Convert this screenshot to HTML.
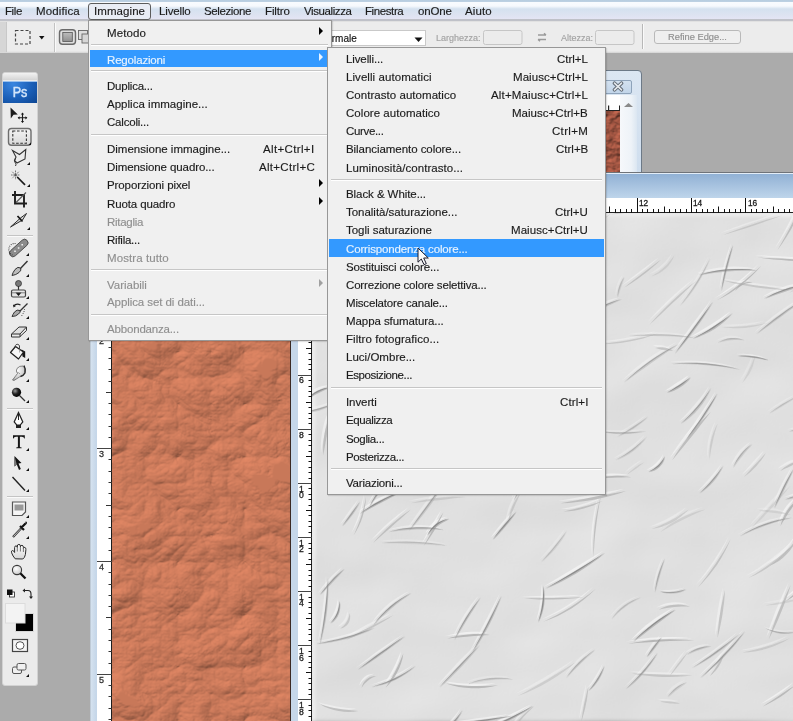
<!DOCTYPE html><html><head><meta charset="utf-8"><style>
*{margin:0;padding:0;box-sizing:border-box}
html,body{width:793px;height:721px;overflow:hidden}
body{position:relative;background:#ababab;font-family:"Liberation Sans",sans-serif;color:#1b1b1b}
.a{position:absolute}
.t{position:absolute;white-space:nowrap;-webkit-text-stroke:0.15px currentColor;will-change:transform}
</style></head><body><div class="a" style="left:0;top:0;width:793px;height:22px;background:linear-gradient(#b7cde0 0px,#bcd0e2 1.5px,#f8fbfe 2.5px,#f6f9fd 6px,#d4e1ef 9px,#dde3f1 15px,#e4e5f4 19px,#bfc1c8 19.5px,#bfc1c8 20.5px,#dcdcdc 21px,#e6e6e6 22px)"></div>
<div class="a" style="left:88px;top:3px;width:63px;height:16.5px;border:1px solid #5c5c5c;border-radius:3px;background:#e9edf5"></div>
<div class="t" style="top:2.20px;font-size:11.5px;line-height:18px;height:18px;left:5.00px;letter-spacing:-0.400px;">File</div>
<div class="t" style="top:2.20px;font-size:11.5px;line-height:18px;height:18px;left:36.00px;letter-spacing:0.121px;">Modifica</div>
<div class="t" style="top:2.20px;font-size:11.5px;line-height:18px;height:18px;left:93.80px;letter-spacing:0.075px;">Immagine</div>
<div class="t" style="top:2.20px;font-size:11.5px;line-height:18px;height:18px;left:158.80px;letter-spacing:-0.144px;">Livello</div>
<div class="t" style="top:2.20px;font-size:11.5px;line-height:18px;height:18px;left:204.00px;letter-spacing:-0.391px;">Selezione</div>
<div class="t" style="top:2.20px;font-size:11.5px;line-height:18px;height:18px;left:264.80px;letter-spacing:-0.144px;">Filtro</div>
<div class="t" style="top:2.20px;font-size:11.5px;line-height:18px;height:18px;left:303.90px;letter-spacing:-0.400px;">Visualizza</div>
<div class="t" style="top:2.20px;font-size:11.5px;line-height:18px;height:18px;left:364.90px;letter-spacing:-0.400px;">Finestra</div>
<div class="t" style="top:2.20px;font-size:11.5px;line-height:18px;height:18px;left:417.60px;letter-spacing:-0.146px;">onOne</div>
<div class="t" style="top:2.20px;font-size:11.5px;line-height:18px;height:18px;left:465.30px;letter-spacing:0.096px;">Aiuto</div>
<div class="a" style="left:0;top:22px;width:793px;height:31.3px;background:linear-gradient(#ececec,#ececec 29px,#dcdcdc 30.3px,#c9c9c9 31.3px)"></div>
<div class="a" style="left:0;top:22px;width:6.5px;height:30px;background:#d6d6d6;border-right:1px solid #c8c8c8"></div>
<svg class="a" style="left:0;top:0" width="793" height="60"><rect x="15.5" y="30.5" width="14.5" height="13.5" fill="none" stroke="#444" stroke-width="1.2" stroke-dasharray="3 2"/><path d="M39,36 H44.5 L41.75,39.5 Z" fill="#111"/><path d="M54.5,23 V52" stroke="#c2c2c2"/><path d="M55.5,23 V52" stroke="#fafafa"/><rect x="59.5" y="29.8" width="16" height="14.5" rx="3" fill="#dedede" stroke="#6a6a6a" stroke-width="1.4"/><rect x="62.8" y="32.5" width="9.5" height="9" fill="url(#sqg)" stroke="#555" stroke-width="0.8"/><rect x="78.5" y="30.5" width="9" height="9" fill="#ddd" stroke="#666" stroke-width="0.9"/><rect x="82" y="34" width="8" height="9" fill="#d6d6d6" stroke="#666" stroke-width="0.9"/><rect x="300.5" y="30.5" width="125" height="15" fill="#fff" stroke="#c9c9c9" stroke-width="1"/><path d="M414.5,37.5 H422.5 L418.5,42 Z" fill="#111"/><rect x="483.5" y="30.5" width="38.5" height="14" rx="2" fill="#ececec" stroke="#c6c6c6" stroke-width="1"/><rect x="595.5" y="30.5" width="38.5" height="14" rx="2" fill="#ececec" stroke="#c6c6c6" stroke-width="1"/><path d="M538,35 H546 M546,35 l-2,-1.8 M538,39.5 H546 M538,39.5 l2,1.8" stroke="#9a9a9a" stroke-width="1.3" fill="none"/><path d="M642.5,24 V49" stroke="#b8b8b8"/><path d="M643.5,24 V49" stroke="#fafafa"/><rect x="654.5" y="30.5" width="86" height="13" rx="2.5" fill="#efefef" stroke="#b9b9b9" stroke-width="1"/><defs><linearGradient id="sqg" x1="0" y1="0" x2="0" y2="1"><stop offset="0" stop-color="#bdbdbd"/><stop offset="1" stop-color="#8f8f8f"/></linearGradient></defs></svg>
<div class="t" style="top:29.70px;font-size:10px;line-height:18px;height:18px;left:318.50px;color:#111;">Normale</div>
<div class="t" style="top:28.63px;font-size:9px;line-height:18px;height:18px;left:436.00px;color:#a3a3a3;">Larghezza:</div>
<div class="t" style="top:28.63px;font-size:9px;line-height:18px;height:18px;left:560.50px;color:#a3a3a3;">Altezza:</div>
<div class="t" style="top:28.43px;font-size:9.3px;line-height:18px;height:18px;left:667.80px;color:#8e8e8e;">Refine Edge...</div>
<div class="a" style="left:2px;top:71.5px;width:36px;height:614.5px;background:#ebebeb;border:1px solid #d2d2d2;border-radius:3px"></div>
<div class="a" style="left:3px;top:72.5px;width:34px;height:7.5px;background:linear-gradient(#f2f2f2,#d4d4d4);border-radius:2px 2px 0 0"></div>
<div class="a" style="left:3px;top:80.5px;width:34px;height:22.5px;background:radial-gradient(ellipse at 30% 10%,#3a86e0 0%,#1a5fb8 55%,#0d4591 100%);border-top:1px solid #9cc2ee"></div>
<div class="a" style="left:3px;top:80.5px;width:34px;height:22.5px;text-align:center;color:#d4e6fa;font-size:14px;line-height:23px;-webkit-text-stroke:0.45px #d4e6fa;transform:scaleX(0.9);letter-spacing:0px">Ps</div>
<svg class="a" style="left:0;top:0" width="40" height="721"><defs><linearGradient id="btng" x1="0" y1="0" x2="0" y2="1"><stop offset="0" stop-color="#f4f4f4"/><stop offset="1" stop-color="#d9d9d9"/></linearGradient><linearGradient id="handg" x1="0" y1="0" x2="0" y2="1"><stop offset="0" stop-color="#ffffff"/><stop offset="1" stop-color="#d6d6d6"/></linearGradient><radialGradient id="lensg" cx="0.4" cy="0.35" r="0.7"><stop offset="0" stop-color="#ffffff"/><stop offset="1" stop-color="#c8c8c8"/></radialGradient><radialGradient id="fing" cx="0.4" cy="0.3" r="0.8"><stop offset="0" stop-color="#ffffff"/><stop offset="0.6" stop-color="#d0d0d0"/><stop offset="1" stop-color="#9a9a9a"/></radialGradient><radialGradient id="ballg" cx="0.35" cy="0.35" r="0.7"><stop offset="0" stop-color="#999"/><stop offset="0.5" stop-color="#222"/><stop offset="1" stop-color="#000"/></radialGradient></defs><path d="M10.5,107.5 L17.8,114.5 L13.5,114.8 L10.8,118.5 Z" fill="#1a1a1a"/><path d="M22.5,113.2 V122.3 M18.3,117.8 H26.7" stroke="#1a1a1a" stroke-width="1.1"/><path d="M22.5,112.5 l-1.6,2 h3.2z M22.5,123 l-1.6,-2 h3.2z M17.6,117.8 l2,-1.6 v3.2z M27.4,117.8 l-2,-1.6 v3.2z" fill="#1a1a1a"/><rect x="8.5" y="128.5" width="22.5" height="16.8" rx="3" fill="url(#btng)" stroke="#6e6e6e" stroke-width="1.4"/><rect x="12.8" y="131" width="13.6" height="12.3" fill="none" stroke="#333" stroke-width="1.1" stroke-dasharray="2.6 1.6"/><path d="M28.5,145 L31,142.5 L31,145 Z" fill="#111"/><path d="M12.5,150.5 L19.5,154.5 L25.8,149.5 L25,159 L17,163 L14.5,160.5 L16,157 Z" fill="none" stroke="#333" stroke-width="1.1"/><path d="M15.5,158 q-2,3 0,5.5 q1,1 0,2.5" fill="none" stroke="#333" stroke-width="1"/><path d="M30,162 L30,165 L27,165 Z" fill="#111"/><path d="M15.5,170.5 V179.5 M11,175 H20 M12.3,171.8 L18.7,178.2 M18.7,171.8 L12.3,178.2" stroke="#6a6a6a" stroke-width="0.9" stroke-dasharray="1.6 0.6"/><circle cx="15.5" cy="175" r="1.1" fill="#555"/><path d="M17.2,177 L25,184.8" stroke="#1a1a1a" stroke-width="1.7"/><path d="M30,184 L30,187 L27,187 Z" fill="#111"/><path d="M15,191 V203.5 H27 M12,195 H24 V207.5" fill="none" stroke="#1e1e1e" stroke-width="1.9"/><path d="M16,202.5 L26,192.5" stroke="#555" stroke-width="1.1"/><path d="M10.5,227 L20.5,218 L26.5,213.5 L22.5,220 Z" fill="#d8d8d8" stroke="#2a2a2a" stroke-width="1"/><path d="M17.5,216 L22.5,221.5" stroke="#111" stroke-width="1.7"/><path d="M30,227 L30,230 L27,230 Z" fill="#111"/><path d="M7,235.5 H33" stroke="#c4c4c4" stroke-width="1"/><path d="M7,236.5 H33" stroke="#fafafa" stroke-width="1"/><rect x="7.5" y="244.5" width="22.5" height="7" rx="3.5" transform="rotate(-42 18.75 248)" fill="#8c8c8c" stroke="#4a4a4a" stroke-width="0.9"/><path d="M15.5,243.5 A6,6 0 0 0 12.5,255" fill="none" stroke="#333" stroke-width="1.1" stroke-dasharray="0.9 1.1"/><path d="M14.2,251.2 h1.6 M17.8,248 h1.6 M21.4,244.8 h1.6" stroke="#f0f0f0" stroke-width="1.6"/><path d="M29,253 L29,256 L26,256 Z" fill="#111"/><path d="M27.5,261 L19.5,269.5" stroke="#333" stroke-width="1.4"/><path d="M20.5,268 Q18,266 15,269.5 Q12.5,273 12,275.5 Q16,275 19,272.5 Q22,270 20.5,268 Z" fill="#bbb" stroke="#333" stroke-width="1"/><path d="M29,274 L29,277 L26,277 Z" fill="#111"/><circle cx="18.5" cy="283.5" r="3" fill="#777" stroke="#333" stroke-width="0.8"/><path d="M18.5,286 V290" stroke="#333" stroke-width="1.2"/><rect x="11.5" y="290" width="14" height="7" rx="1.5" fill="#e6e6e6" stroke="#444" stroke-width="1.2"/><path d="M15.5,292.5 H21.5 L18.5,296 Z" fill="#111"/><path d="M11.8,292.8 H25.2" stroke="#666" stroke-width="0.8"/><path d="M29,296 L29,299 L26,299 Z" fill="#111"/><path d="M27.5,303.5 L19.5,311.5" stroke="#333" stroke-width="1.3"/><path d="M20,310.5 Q17,309 14.5,312 Q12.5,315 12,316.5 Q16,316.5 18.5,314 Q21,312 20,310.5 Z" fill="#aaa" stroke="#333" stroke-width="1"/><path d="M20.5,305 q-4,-2 -7,1" fill="none" stroke="#222" stroke-width="1.2"/><path d="M13,304.5 l0.5,3 l2.5,-1.5z" fill="#222"/><path d="M24.5,309 q0,3 -3,7" fill="none" stroke="#333" stroke-width="1" stroke-dasharray="1 1.2"/><path d="M29,316 L29,319 L26,319 Z" fill="#111"/><path d="M11.5,334 L19,327 H26.5 L20,334 Z" fill="#e0e0e0" stroke="#333" stroke-width="1"/><path d="M11.5,334 V337 H19.5 L26.5,330.5 V327 M20,334 V337" fill="none" stroke="#333" stroke-width="1"/><path d="M29,337 L29,340 L26,340 Z" fill="#111"/><path d="M21.5,349.5 L25.2,351.5 L25.2,358 L22.5,356.5 Z" fill="#151515"/><path d="M10.5,352.5 L15.5,346.5 L23.5,352 L18.5,359 Z" fill="#f6f6f6" stroke="#1e1e1e" stroke-width="1.2" stroke-linejoin="round"/><path d="M15,347 q0.5,-3.5 3.5,-2.5 q1.5,0.8 1,4.5" fill="none" stroke="#444" stroke-width="1"/><path d="M19.5,349.5 v3" stroke="#aaa" stroke-width="1"/><path d="M29,358 L29,361 L26,361 Z" fill="#111"/><path d="M12.5,380 L17.5,373.5 Q15.5,371 17,368.5 Q19.5,365.5 23,366 Q25.5,367.5 25,372 Q24,375 21,376 L14,380.5 Z" fill="url(#fing)" stroke="#6a6a6a" stroke-width="0.8"/><path d="M24,365.5 Q26,369 25,373 Q23.5,376 20.5,376.5" fill="none" stroke="#222" stroke-width="1.3"/><path d="M17,373 Q19,372 20,374" fill="none" stroke="#888" stroke-width="0.8"/><path d="M29,379 L29,382 L26,382 Z" fill="#111"/><circle cx="16.5" cy="392.3" r="4.6" fill="url(#ballg)"/><path d="M19.5,395.5 L25,401" stroke="#333" stroke-width="1.2"/><path d="M29,400 L29,403 L26,403 Z" fill="#111"/><path d="M7,408.5 H33" stroke="#c4c4c4" stroke-width="1"/><path d="M7,409.5 H33" stroke="#fafafa" stroke-width="1"/><path d="M18.5,412.5 L22.8,422 L20.3,425 H16.7 L14.2,422 Z" fill="#fff" stroke="#222" stroke-width="1.2"/><path d="M18.5,414 V420" stroke="#222" stroke-width="1"/><rect x="16" y="425" width="5" height="3" fill="#222"/><path d="M29,427 L29,430 L26,430 Z" fill="#111"/><path d="M13,435.3 H24.8 V438.6 H24.3 Q24,436.7 21.8,436.7 H19.9 V446.8 Q19.9,447.5 21.6,447.6 V448.2 H16.2 V447.6 Q17.9,447.5 17.9,446.8 V436.7 H16 Q13.8,436.7 13.5,438.6 H13 Z" fill="#151515"/><path d="M29,448 L29,451 L26,451 Z" fill="#111"/><path d="M14.5,456 L21.5,463 L18.5,463.5 L20.8,469 L19,470 L16.8,464.5 L14.5,466.5 Z" fill="#111"/><path d="M14.5,456 L14.5,466.5 L16.8,464.5 Z" fill="#777"/><path d="M29,468 L29,471 L26,471 Z" fill="#111"/><path d="M12.5,477 L25,490.5" stroke="#222" stroke-width="1.4"/><path d="M29,489 L29,492 L26,492 Z" fill="#111"/><path d="M7,496.5 H33" stroke="#c4c4c4" stroke-width="1"/><path d="M7,497.5 H33" stroke="#fafafa" stroke-width="1"/><path d="M12.5,502 H25.5 V512 L22,515.5 H12.5 Z" fill="#f6f6f6" stroke="#555" stroke-width="1.2"/><rect x="14.5" y="504.5" width="9" height="6" fill="#999"/><path d="M29,515 L29,518 L26,518 Z" fill="#111"/><path d="M13,537 L21,528.5" stroke="#333" stroke-width="2.2"/><path d="M13.5,536.5 L20.5,529" stroke="#ddd" stroke-width="0.8"/><path d="M20,526 L24,530 M21.5,527.5 L25,524 Q26.5,522.5 25.5,522.5" stroke="#111" stroke-width="2.2"/><path d="M29,536 L29,539 L26,539 Z" fill="#111"/><path d="M15.2,558.8 Q12.8,556.2 11.6,552.8 Q11,550.6 12.5,550.5 Q13.8,550.5 14.6,552.5 V547.6 Q14.6,545.9 16,545.9 Q17.3,545.9 17.3,547.4 V546.1 Q17.4,544.4 18.9,544.4 Q20.4,544.4 20.4,546.1 V546.8 Q20.6,545.2 22,545.3 Q23.4,545.5 23.4,547.3 V548.4 Q23.7,547.2 24.9,547.4 Q26.1,547.8 25.9,549.6 L25.4,554.5 Q24.8,557.8 22.8,559 Z" fill="url(#handg)" stroke="#2a2a2a" stroke-width="1"/><path d="M17.3,547.4 V551.5 M20.4,546.8 V551.5 M23.4,548.4 V552" stroke="#555" stroke-width="0.8"/><circle cx="17" cy="570" r="4.6" fill="url(#lensg)" stroke="#3a3a3a" stroke-width="1.1"/><path d="M20.3,573.3 L25.5,578.5" stroke="#111" stroke-width="2.3"/><rect x="9.5" y="592" width="5" height="5" fill="#fff" stroke="#222" stroke-width="0.8"/><rect x="7" y="589.5" width="5.5" height="5.5" fill="#111"/><path d="M24,590.5 L28,590.5 Q31,590.5 31,594 L31,597.5" fill="none" stroke="#222" stroke-width="1.1"/><path d="M22.5,590.5 l2.5,-2 v4z M31,599 l-2,-2.5 h4z" fill="#222"/><rect x="15.5" y="613.5" width="18" height="18" fill="#000" stroke="#d8d8d8" stroke-width="1"/><rect x="5.5" y="603.5" width="19.5" height="19.5" fill="#f3f3f3" stroke="#dcdcdc" stroke-width="1"/><rect x="12.5" y="639.5" width="15" height="12" fill="#f4f4f4" stroke="#444" stroke-width="1.2"/><ellipse cx="20" cy="645.5" rx="4" ry="3.8" fill="#fff" stroke="#555" stroke-width="1"/><rect x="12.5" y="667" width="9" height="6.5" rx="1.5" fill="#f0f0f0" stroke="#555" stroke-width="1"/><rect x="17" y="663.5" width="9" height="6.5" rx="1.5" fill="#f0f0f0" stroke="#555" stroke-width="1"/><path d="M29,674 L29,677 L26,677 Z" fill="#111"/></svg>
<svg width="0" height="0" style="position:absolute"><defs>
<filter id="fg" x="0" y="0" width="100%" height="100%" color-interpolation-filters="sRGB">
<feTurbulence type="fractalNoise" baseFrequency="0.009 0.014" numOctaves="2" seed="21" result="n"/>
<feColorMatrix in="n" type="matrix" values="0 0 0 0 0  0 0 0 0 0  0 0 0 0 0  1 0 0 0 0" result="r"/>
<feGaussianBlur in="r" stdDeviation="2" result="rb"/>
<feDiffuseLighting in="rb" surfaceScale="1.8" diffuseConstant="1" lighting-color="#f7f7f7"><feDistantLight azimuth="225" elevation="65"/></feDiffuseLighting>
</filter>
<filter id="fr" x="0" y="0" width="100%" height="100%" color-interpolation-filters="sRGB">
<feTurbulence type="turbulence" baseFrequency="0.015 0.019" numOctaves="5" seed="12" result="n"/>
<feColorMatrix in="n" type="matrix" values="0 0 0 0 0  0 0 0 0 0  0 0 0 0 0  1.5 0 0 0 0" result="r"/>
<feGaussianBlur in="r" stdDeviation="0.4" result="rb"/>
<feDiffuseLighting in="rb" surfaceScale="2.1" diffuseConstant="1.03" lighting-color="#dc8462"><feDistantLight azimuth="235" elevation="62"/></feDiffuseLighting>
</filter>
<filter id="fr2" x="0" y="0" width="100%" height="100%" color-interpolation-filters="sRGB">
<feTurbulence type="fractalNoise" baseFrequency="0.07 0.09" numOctaves="4" seed="3" result="n"/>
<feColorMatrix in="n" type="matrix" values="0 0 0 0 0  0 0 0 0 0  0 0 0 0 0  1.5 0 0 0 -0.2" result="r"/>
<feDiffuseLighting in="r" surfaceScale="2" diffuseConstant="1.0" lighting-color="#c86a52"><feDistantLight azimuth="235" elevation="55"/></feDiffuseLighting>
</filter>
</defs></svg>
<div class="a" style="left:540px;top:69.5px;width:102px;height:103px;background:linear-gradient(#dbe6f2,#cfdeee);border:1px solid #6c7987;border-radius:0 4px 0 0"></div>
<div class="a" style="left:560px;top:79.5px;width:72px;height:14px;background:linear-gradient(#d3e1ef,#c2d5e9);border:1px solid #8ea3ba;border-radius:2px"></div>
<svg class="a" style="left:611px;top:81px" width="14" height="11"><path d="M3.5,2.2 L10.5,8.8 M10.5,2.2 L3.5,8.8" stroke="#5a636d" stroke-width="3.6" stroke-linecap="round"/><path d="M3.5,2.2 L10.5,8.8 M10.5,2.2 L3.5,8.8" stroke="#e4e8ec" stroke-width="1.7" stroke-linecap="round"/></svg>
<div class="a" style="left:540px;top:95px;width:80px;height:15.5px;background:#fff;border-bottom:1px solid #222"></div>
<svg class="a" style="left:540px;top:95px" width="80" height="16"><path d="M68.6,10.5 V15 M79.6,10.5 V15" stroke="#222" stroke-width="1.2"/></svg>
<svg class="a" style="left:540px;top:110.5px" width="80" height="62"><rect width="80" height="62" filter="url(#fr2)"/></svg>
<div class="a" style="left:620px;top:95px;width:17px;height:77px;background:linear-gradient(90deg,#f6f8fb,#eef3f8 65%,#dbe6f1)"></div>
<svg class="a" style="left:620px;top:100px" width="17" height="10"><path d="M4,7 L8.5,3 L13,7 Z" fill="#8a8a8a"/></svg>
<div class="a" style="left:285px;top:171.5px;width:520px;height:1.5px;background:#6f7378"></div>
<div class="a" style="left:285px;top:173px;width:520px;height:25px;background:linear-gradient(#e3edf7 0px,#e3edf7 1px,#92b2d5 1.5px,#bdd4ea 24.5px)"></div>
<div class="a" style="left:285px;top:198px;width:520px;height:15px;background:#fff;border-bottom:1px solid #222"></div>
<svg class="a" style="left:311.5px;top:213px" width="490" height="510"><defs><filter id="cb"><feGaussianBlur stdDeviation="0.75"/></filter><filter id="cb2"><feGaussianBlur stdDeviation="0.5"/></filter></defs><rect width="490" height="510" filter="url(#fg)"/><g filter="url(#cb)"><path d="M103.7,35.3 L105.5,33.3 L107.2,31.2 L108.8,29.1 L110.4,26.9 L111.9,24.8 L113.4,22.5 L114.8,20.2 L116.1,17.9 L116.1,17.9 L114.0,19.5 L112.0,21.4 L110.1,23.4 L108.5,25.6 L107.0,27.8 L105.7,30.2 L104.6,32.7 L103.7,35.3Z" fill="#f6f6f6" fill-opacity="0.71"/><path d="M96.2,273.8 L97.9,271.2 L99.4,268.7 L101.1,266.3 L102.7,264.0 L104.4,261.7 L106.2,259.4 L108.1,257.1 L110.1,254.8 L110.1,254.8 L107.4,256.3 L104.9,258.1 L102.7,260.2 L100.8,262.6 L99.2,265.1 L97.8,267.8 L96.8,270.7 L96.2,273.8Z" fill="#f6f6f6" fill-opacity="0.71"/><path d="M402.8,85.0 L409.1,81.7 L415.2,78.1 L421.0,74.2 L426.7,70.0 L432.1,65.5 L437.3,60.8 L442.3,55.7 L447.0,50.4 L447.0,50.4 L441.8,55.2 L436.5,59.9 L431.2,64.4 L425.8,68.8 L420.2,73.0 L414.5,77.1 L408.7,81.1 L402.8,85.0Z" fill="#f6f6f6" fill-opacity="0.69"/><path d="M334.6,256.9 L337.6,256.2 L340.5,255.1 L343.0,253.6 L345.3,251.7 L347.3,249.5 L348.9,247.1 L350.2,244.3 L351.0,241.3 L351.0,241.3 L349.4,243.9 L347.6,246.2 L345.8,248.3 L343.9,250.2 L341.9,252.0 L339.7,253.7 L337.2,255.3 L334.6,256.9Z" fill="#f6f6f6" fill-opacity="0.68"/><path d="M460.3,293.4 L463.0,288.5 L465.5,283.6 L468.0,278.6 L470.5,273.7 L472.9,268.7 L475.3,263.7 L477.7,258.6 L479.9,253.5 L479.9,253.5 L476.9,258.2 L474.0,263.0 L471.3,267.9 L468.8,272.8 L466.4,277.8 L464.2,283.0 L462.1,288.1 L460.3,293.4Z" fill="#f6f6f6" fill-opacity="0.55"/><path d="M140.3,425.5 L143.5,420.0 L146.7,414.6 L150.0,409.2 L153.3,403.8 L156.6,398.5 L160.0,393.1 L163.4,387.8 L166.8,382.5 L166.8,382.5 L162.6,387.3 L158.7,392.3 L155.1,397.5 L151.6,402.8 L148.4,408.3 L145.4,413.9 L142.7,419.6 L140.3,425.5Z" fill="#f6f6f6" fill-opacity="0.52"/><path d="M507.2,86.2 L511.0,81.0 L514.8,75.9 L518.5,70.8 L522.4,65.7 L526.2,60.7 L530.0,55.7 L533.9,50.6 L537.9,45.6 L537.9,45.6 L533.2,49.9 L528.7,54.5 L524.5,59.4 L520.5,64.4 L516.8,69.6 L513.3,74.9 L510.1,80.4 L507.2,86.2Z" fill="#f6f6f6" fill-opacity="0.44"/><path d="M274.6,476.0 L277.5,473.4 L280.1,470.7 L282.5,467.7 L284.6,464.6 L286.5,461.3 L288.1,457.9 L289.5,454.3 L290.5,450.7 L290.5,450.7 L288.8,454.0 L287.0,457.3 L285.1,460.6 L283.2,463.7 L281.2,466.8 L279.1,469.9 L276.9,472.9 L274.6,476.0Z" fill="#f6f6f6" fill-opacity="0.56"/><path d="M72.7,231.1 L80.2,227.9 L87.5,224.2 L94.5,220.0 L101.3,215.5 L107.7,210.6 L113.9,205.3 L119.7,199.6 L125.2,193.5 L125.2,193.5 L118.9,198.7 L112.7,203.8 L106.3,208.7 L99.8,213.4 L93.2,218.0 L86.5,222.5 L79.7,226.8 L72.7,231.1Z" fill="#f6f6f6" fill-opacity="0.62"/><path d="M131.8,509.9 L140.2,509.5 L148.5,508.9 L156.9,508.0 L165.2,507.0 L173.5,505.8 L181.8,504.4 L190.0,502.8 L198.2,500.9 L198.2,500.9 L189.9,502.0 L181.6,503.1 L173.3,504.2 L165.0,505.3 L156.7,506.4 L148.4,507.5 L140.1,508.7 L131.8,509.9Z" fill="#f6f6f6" fill-opacity="0.66"/><path d="M214.0,53.6 L217.6,50.8 L221.3,48.2 L225.0,46.0 L228.8,43.9 L232.8,42.1 L236.9,40.5 L241.1,39.2 L245.6,38.0 L245.6,38.0 L241.0,38.4 L236.5,39.4 L232.2,40.7 L228.1,42.5 L224.2,44.7 L220.6,47.3 L217.1,50.2 L214.0,53.6Z" fill="#f6f6f6" fill-opacity="0.28"/><path d="M170.8,138.3 L175.2,135.7 L179.6,133.2 L184.0,130.9 L188.5,128.7 L193.0,126.6 L197.5,124.6 L202.2,122.8 L206.9,121.0 L206.9,121.0 L202.0,122.1 L197.2,123.6 L192.4,125.3 L187.8,127.4 L183.3,129.7 L179.0,132.3 L174.8,135.1 L170.8,138.3Z" fill="#f6f6f6" fill-opacity="0.29"/><path d="M337.3,60.9 L341.3,59.7 L344.9,57.9 L348.3,55.8 L351.4,53.3 L354.1,50.4 L356.5,47.2 L358.5,43.7 L360.0,39.9 L360.0,39.9 L357.7,43.2 L355.2,46.3 L352.7,49.2 L350.0,51.8 L347.2,54.3 L344.1,56.6 L340.8,58.8 L337.3,60.9Z" fill="#f6f6f6" fill-opacity="0.32"/><path d="M195.5,521.8 L198.0,517.4 L200.6,513.1 L203.3,509.1 L206.3,505.2 L209.4,501.5 L212.7,497.9 L216.3,494.4 L220.0,491.0 L220.0,491.0 L215.8,493.8 L211.8,496.9 L208.2,500.4 L204.9,504.1 L202.0,508.2 L199.5,512.5 L197.3,517.0 L195.5,521.8Z" fill="#f6f6f6" fill-opacity="0.47"/><path d="M419.1,252.8 L421.4,249.6 L423.6,246.5 L425.9,243.5 L428.3,240.6 L430.6,237.7 L433.1,234.8 L435.7,231.9 L438.3,229.0 L438.3,229.0 L434.9,231.1 L431.8,233.5 L428.9,236.1 L426.4,239.0 L424.1,242.2 L422.1,245.5 L420.4,249.1 L419.1,252.8Z" fill="#f6f6f6" fill-opacity="0.38"/><path d="M5.8,489.0 L10.2,491.4 L14.8,493.3 L19.5,494.8 L24.4,495.8 L29.3,496.4 L34.2,496.6 L39.2,496.4 L44.2,495.6 L44.2,495.6 L39.2,495.3 L34.3,494.8 L29.5,494.3 L24.8,493.5 L20.0,492.6 L15.3,491.6 L10.6,490.4 L5.8,489.0Z" fill="#f6f6f6" fill-opacity="0.58"/><path d="M240.6,29.7 L248.4,27.2 L256.0,24.2 L263.4,20.8 L270.6,17.0 L277.6,12.8 L284.3,8.2 L290.8,3.2 L297.0,-2.1 L297.0,-2.1 L290.2,2.4 L283.4,6.8 L276.5,11.0 L269.5,15.1 L262.4,18.9 L255.3,22.7 L248.0,26.2 L240.6,29.7Z" fill="#f6f6f6" fill-opacity="0.43"/><path d="M319.1,426.8 L324.5,422.7 L329.8,418.6 L335.1,414.5 L340.5,410.5 L345.8,406.5 L351.1,402.4 L356.5,398.4 L361.9,394.4 L361.9,394.4 L355.9,397.5 L350.1,400.9 L344.4,404.5 L338.9,408.4 L333.6,412.6 L328.6,417.1 L323.7,421.8 L319.1,426.8Z" fill="#f6f6f6" fill-opacity="0.71"/><path d="M493.3,507.6 L500.8,504.5 L508.4,501.6 L516.0,498.8 L523.6,496.1 L531.2,493.6 L539.0,491.3 L546.8,489.0 L554.6,486.9 L554.6,486.9 L546.5,488.0 L538.5,489.6 L530.6,491.7 L522.9,494.1 L515.2,496.9 L507.8,500.0 L500.4,503.6 L493.3,507.6Z" fill="#f6f6f6" fill-opacity="0.73"/><path d="M67.3,328.0 L75.6,328.1 L83.9,328.3 L92.1,328.6 L100.4,328.9 L108.6,329.3 L116.8,329.7 L125.1,330.2 L133.4,330.7 L133.4,330.7 L125.2,329.1 L117.0,327.8 L108.8,326.9 L100.5,326.4 L92.2,326.2 L83.8,326.4 L75.5,327.0 L67.3,328.0Z" fill="#f6f6f6" fill-opacity="0.26"/><path d="M443.1,42.3 L451.0,43.3 L458.9,44.2 L466.9,44.8 L474.8,45.4 L482.8,45.8 L490.7,46.1 L498.7,46.2 L506.6,46.2 L506.6,46.2 L498.7,45.5 L490.8,44.9 L482.8,44.3 L474.9,43.8 L467.0,43.3 L459.0,42.9 L451.1,42.6 L443.1,42.3Z" fill="#f6f6f6" fill-opacity="0.69"/><path d="M153.8,469.1 L159.5,467.7 L165.1,466.6 L170.7,465.7 L176.2,465.0 L181.8,464.5 L187.5,464.3 L193.2,464.3 L199.0,464.4 L199.0,464.4 L193.2,463.3 L187.5,462.7 L181.7,462.5 L176.0,462.9 L170.3,463.7 L164.7,465.0 L159.2,466.8 L153.8,469.1Z" fill="#f6f6f6" fill-opacity="0.28"/><path d="M436.9,313.1 L442.3,308.2 L447.5,303.1 L452.5,298.0 L457.5,292.7 L462.4,287.3 L467.1,281.8 L471.7,276.2 L476.2,270.5 L476.2,270.5 L470.9,275.5 L465.8,280.6 L460.7,285.8 L455.8,291.1 L450.9,296.4 L446.1,301.9 L441.4,307.4 L436.9,313.1Z" fill="#f6f6f6" fill-opacity="0.27"/><path d="M23.7,277.5 L27.3,275.0 L30.9,272.6 L34.4,270.3 L38.0,268.0 L41.5,265.8 L45.2,263.6 L48.8,261.4 L52.6,259.1 L52.6,259.1 L48.3,260.3 L44.3,261.8 L40.4,263.7 L36.6,265.9 L33.0,268.3 L29.7,271.1 L26.6,274.1 L23.7,277.5Z" fill="#f6f6f6" fill-opacity="0.50"/><path d="M39.3,320.1 L42.0,315.7 L44.4,311.2 L46.5,306.5 L48.2,301.7 L49.6,296.8 L50.6,291.8 L51.4,286.7 L51.7,281.5 L51.7,281.5 L50.7,286.6 L49.5,291.5 L48.3,296.4 L46.8,301.2 L45.2,306.0 L43.4,310.7 L41.4,315.4 L39.3,320.1Z" fill="#f6f6f6" fill-opacity="0.64"/><path d="M82.4,144.9 L89.8,143.4 L97.1,142.1 L104.4,140.9 L111.8,139.9 L119.1,139.0 L126.5,138.3 L134.0,137.7 L141.4,137.3 L141.4,137.3 L133.9,137.0 L126.4,137.1 L119.0,137.5 L111.6,138.3 L104.2,139.4 L96.8,140.9 L89.6,142.7 L82.4,144.9Z" fill="#f6f6f6" fill-opacity="0.69"/><path d="M240.6,164.8 L246.3,160.8 L252.0,157.0 L257.9,153.4 L263.8,150.1 L269.9,146.9 L276.1,144.0 L282.4,141.3 L288.9,138.7 L288.9,138.7 L282.1,140.4 L275.5,142.6 L269.0,145.2 L262.8,148.3 L256.9,151.8 L251.1,155.7 L245.7,160.0 L240.6,164.8Z" fill="#f6f6f6" fill-opacity="0.41"/><path d="M357.9,244.9 L362.9,239.0 L367.8,233.0 L372.7,227.0 L377.6,220.9 L382.4,214.9 L387.1,208.8 L391.9,202.6 L396.6,196.4 L396.6,196.4 L391.0,201.9 L385.6,207.5 L380.5,213.3 L375.5,219.3 L370.8,225.5 L366.3,231.8 L361.9,238.3 L357.9,244.9Z" fill="#f6f6f6" fill-opacity="0.64"/><path d="M337.3,313.8 L342.6,312.8 L347.8,311.4 L352.8,309.5 L357.7,307.2 L362.3,304.4 L366.7,301.3 L370.8,297.8 L374.6,294.0 L374.6,294.0 L370.1,297.0 L365.6,299.8 L361.1,302.5 L356.5,305.0 L351.9,307.4 L347.1,309.6 L342.3,311.8 L337.3,313.8Z" fill="#f6f6f6" fill-opacity="0.41"/><path d="M303.5,221.7 L307.7,219.9 L311.9,217.8 L315.9,215.6 L319.9,213.1 L323.7,210.5 L327.4,207.8 L331.0,204.8 L334.4,201.7 L334.4,201.7 L330.5,204.3 L326.7,206.8 L322.9,209.4 L319.1,211.9 L315.2,214.4 L311.3,216.8 L307.4,219.3 L303.5,221.7Z" fill="#f6f6f6" fill-opacity="0.33"/><path d="M407.4,76.3 L408.8,70.5 L410.3,64.7 L411.7,58.8 L413.2,53.1 L414.7,47.3 L416.2,41.5 L417.7,35.7 L419.2,29.9 L419.2,29.9 L417.0,35.5 L415.1,41.1 L413.3,46.9 L411.7,52.7 L410.3,58.5 L409.1,64.4 L408.1,70.3 L407.4,76.3Z" fill="#f6f6f6" fill-opacity="0.57"/><path d="M474.8,77.4 L478.9,76.0 L483.0,74.7 L487.0,73.7 L491.0,72.9 L495.1,72.2 L499.2,71.8 L503.5,71.6 L507.9,71.5 L507.9,71.5 L503.6,70.4 L499.2,69.9 L494.9,69.9 L490.6,70.4 L486.4,71.4 L482.3,72.9 L478.5,74.9 L474.8,77.4Z" fill="#f6f6f6" fill-opacity="0.27"/><path d="M403.2,422.6 L404.7,416.7 L406.0,410.8 L407.2,404.8 L408.2,398.9 L409.0,392.9 L409.8,386.9 L410.3,380.9 L410.7,374.8 L410.7,374.8 L409.2,380.7 L407.9,386.6 L406.7,392.5 L405.7,398.5 L404.8,404.5 L404.1,410.5 L403.5,416.5 L403.2,422.6Z" fill="#f6f6f6" fill-opacity="0.54"/><path d="M491.9,42.9 L499.0,43.6 L506.1,44.1 L513.2,44.4 L520.3,44.6 L527.4,44.5 L534.5,44.2 L541.6,43.8 L548.6,43.1 L548.6,43.1 L541.5,43.0 L534.4,42.9 L527.4,42.9 L520.3,42.8 L513.2,42.8 L506.1,42.8 L499.0,42.8 L491.9,42.9Z" fill="#f6f6f6" fill-opacity="0.67"/><path d="M193.8,308.1 L195.3,304.0 L196.8,300.0 L198.3,296.0 L199.9,292.1 L201.5,288.2 L203.3,284.4 L205.1,280.5 L206.9,276.6 L206.9,276.6 L204.2,280.0 L201.8,283.6 L199.7,287.4 L197.9,291.3 L196.4,295.3 L195.2,299.5 L194.3,303.7 L193.8,308.1Z" fill="#f6f6f6" fill-opacity="0.42"/><path d="M455.1,198.7 L458.7,196.7 L462.2,194.6 L465.7,192.5 L469.2,190.4 L472.7,188.3 L476.1,186.1 L479.6,183.9 L483.0,181.7 L483.0,181.7 L479.2,183.3 L475.5,185.1 L471.9,187.0 L468.4,189.0 L464.9,191.3 L461.5,193.6 L458.2,196.1 L455.1,198.7Z" fill="#f6f6f6" fill-opacity="0.27"/><path d="M346.0,316.7 L351.6,313.6 L357.1,310.5 L362.6,307.5 L368.2,304.7 L373.8,301.9 L379.5,299.2 L385.2,296.6 L391.1,294.1 L391.1,294.1 L384.8,295.5 L378.8,297.4 L372.8,299.7 L367.1,302.4 L361.5,305.4 L356.1,308.8 L350.9,312.6 L346.0,316.7Z" fill="#f6f6f6" fill-opacity="0.30"/><path d="M466.2,310.7 L468.2,307.2 L470.3,303.9 L472.3,300.6 L474.4,297.3 L476.6,294.1 L478.8,290.9 L481.0,287.7 L483.4,284.4 L483.4,284.4 L480.2,286.9 L477.3,289.7 L474.7,292.7 L472.4,296.0 L470.3,299.4 L468.6,303.0 L467.2,306.8 L466.2,310.7Z" fill="#f6f6f6" fill-opacity="0.72"/><path d="M57.4,109.7 L60.9,109.3 L64.2,108.6 L67.4,107.6 L70.5,106.2 L73.4,104.5 L76.2,102.5 L78.7,100.3 L81.1,97.7 L81.1,97.7 L78.2,99.5 L75.3,101.2 L72.4,102.8 L69.6,104.4 L66.7,105.8 L63.7,107.1 L60.6,108.4 L57.4,109.7Z" fill="#f6f6f6" fill-opacity="0.59"/><path d="M117.6,267.0 L118.9,264.8 L120.1,262.7 L121.4,260.6 L122.7,258.6 L124.1,256.6 L125.5,254.6 L126.9,252.6 L128.5,250.6 L128.5,250.6 L126.4,252.1 L124.6,253.9 L123.0,255.8 L121.5,257.8 L120.2,259.9 L119.2,262.2 L118.3,264.5 L117.6,267.0Z" fill="#f6f6f6" fill-opacity="0.32"/><path d="M131.8,468.2 L138.2,470.2 L144.6,471.6 L151.1,472.5 L157.7,473.0 L164.3,472.9 L170.8,472.4 L177.4,471.5 L183.8,470.0 L183.8,470.0 L177.2,470.4 L170.7,470.7 L164.2,470.8 L157.8,470.7 L151.3,470.4 L144.9,469.9 L138.4,469.1 L131.8,468.2Z" fill="#f6f6f6" fill-opacity="0.69"/><path d="M346.3,376.6 L349.6,377.6 L352.9,378.2 L356.2,378.4 L359.5,378.3 L362.8,377.9 L366.0,377.1 L369.2,375.9 L372.2,374.4 L372.2,374.4 L368.9,375.3 L365.7,376.0 L362.5,376.5 L359.4,376.8 L356.2,377.0 L352.9,377.1 L349.7,376.9 L346.3,376.6Z" fill="#f6f6f6" fill-opacity="0.50"/><path d="M442.2,119.4 L448.6,114.8 L454.9,110.1 L461.2,105.5 L467.6,100.9 L473.9,96.2 L480.2,91.6 L486.6,87.0 L493.0,82.4 L493.0,82.4 L486.1,86.3 L479.4,90.4 L472.9,94.8 L466.4,99.3 L460.1,104.1 L454.0,109.0 L448.0,114.1 L442.2,119.4Z" fill="#f6f6f6" fill-opacity="0.45"/><path d="M443.2,-11.0 L445.0,-13.9 L446.4,-17.0 L447.4,-20.2 L448.1,-23.4 L448.5,-26.7 L448.4,-30.1 L448.0,-33.5 L447.2,-36.8 L447.2,-36.8 L447.2,-33.4 L447.1,-30.1 L446.9,-26.9 L446.5,-23.7 L445.9,-20.5 L445.2,-17.4 L444.3,-14.2 L443.2,-11.0Z" fill="#f6f6f6" fill-opacity="0.66"/><path d="M231.3,373.8 L239.3,370.3 L247.1,366.4 L254.9,362.3 L262.4,357.9 L269.8,353.3 L277.1,348.3 L284.2,343.2 L291.0,337.7 L291.0,337.7 L283.5,342.2 L276.0,346.7 L268.6,351.2 L261.1,355.7 L253.7,360.2 L246.2,364.7 L238.7,369.2 L231.3,373.8Z" fill="#f6f6f6" fill-opacity="0.71"/><path d="M427.8,437.2 L434.2,436.9 L440.5,436.1 L446.7,434.9 L452.8,433.3 L458.8,431.3 L464.7,428.8 L470.4,426.0 L475.8,422.7 L475.8,422.7 L469.9,425.1 L464.0,427.3 L458.1,429.4 L452.2,431.2 L446.2,433.0 L440.2,434.5 L434.0,435.9 L427.8,437.2Z" fill="#f6f6f6" fill-opacity="0.41"/><path d="M296.7,-0.9 L304.5,-1.6 L312.3,-2.6 L320.0,-3.9 L327.7,-5.5 L335.3,-7.3 L342.9,-9.3 L350.4,-11.7 L357.8,-14.3 L357.8,-14.3 L350.1,-12.8 L342.5,-11.2 L334.8,-9.5 L327.2,-7.9 L319.6,-6.2 L311.9,-4.5 L304.3,-2.7 L296.7,-0.9Z" fill="#f6f6f6" fill-opacity="0.41"/><path d="M158.3,437.4 L162.8,430.7 L167.0,423.9 L171.0,417.0 L174.8,409.9 L178.4,402.8 L181.7,395.5 L184.8,388.1 L187.7,380.6 L187.7,380.6 L184.0,387.7 L180.3,394.8 L176.6,401.9 L172.9,408.9 L169.3,416.0 L165.6,423.1 L162.0,430.2 L158.3,437.4Z" fill="#f6f6f6" fill-opacity="0.60"/><path d="M501.9,172.8 L506.7,170.1 L511.4,167.2 L516.0,164.2 L520.6,161.1 L525.0,157.9 L529.4,154.6 L533.7,151.2 L537.9,147.6 L537.9,147.6 L533.2,150.5 L528.6,153.5 L524.1,156.6 L519.6,159.7 L515.1,162.9 L510.7,166.1 L506.3,169.4 L501.9,172.8Z" fill="#f6f6f6" fill-opacity="0.55"/><path d="M16.4,408.5 L19.1,406.5 L21.3,404.2 L23.2,401.6 L24.6,398.8 L25.5,395.8 L26.0,392.7 L26.1,389.5 L25.6,386.2 L25.6,386.2 L25.1,389.5 L24.5,392.5 L23.7,395.3 L22.7,398.1 L21.5,400.7 L20.1,403.3 L18.4,405.9 L16.4,408.5Z" fill="#f6f6f6" fill-opacity="0.67"/><path d="M425.8,321.4 L432.2,318.3 L438.6,315.3 L445.1,312.7 L451.6,310.2 L458.3,308.0 L465.0,306.0 L471.8,304.3 L478.8,302.8 L478.8,302.8 L471.7,303.6 L464.7,304.9 L457.8,306.6 L451.1,308.7 L444.5,311.3 L438.1,314.3 L431.9,317.6 L425.8,321.4Z" fill="#f6f6f6" fill-opacity="0.50"/><path d="M450.4,390.2 L455.2,390.0 L460.0,389.6 L464.7,388.9 L469.4,388.1 L474.1,387.1 L478.8,385.9 L483.3,384.5 L487.9,382.9 L487.9,382.9 L483.1,383.6 L478.4,384.5 L473.7,385.3 L469.1,386.2 L464.4,387.2 L459.7,388.1 L455.1,389.1 L450.4,390.2Z" fill="#f6f6f6" fill-opacity="0.28"/><path d="M378.2,453.1 L384.7,449.5 L391.1,445.7 L397.3,441.7 L403.4,437.5 L409.3,433.1 L415.0,428.4 L420.7,423.6 L426.1,418.6 L426.1,418.6 L420.2,423.0 L414.3,427.5 L408.4,431.8 L402.4,436.2 L396.4,440.5 L390.4,444.7 L384.3,448.9 L378.2,453.1Z" fill="#f6f6f6" fill-opacity="0.48"/><path d="M448.7,491.1 L453.2,489.0 L457.5,486.8 L461.8,484.3 L466.0,481.7 L470.0,478.9 L473.9,475.9 L477.7,472.8 L481.4,469.5 L481.4,469.5 L477.2,472.1 L473.1,474.8 L469.0,477.5 L465.0,480.2 L460.9,482.9 L456.8,485.6 L452.8,488.3 L448.7,491.1Z" fill="#f6f6f6" fill-opacity="0.67"/><path d="M114.3,259.7 L118.0,257.6 L121.5,255.2 L124.7,252.4 L127.5,249.3 L130.0,245.9 L132.1,242.2 L133.8,238.3 L135.1,234.2 L135.1,234.2 L132.9,237.8 L130.6,241.3 L128.2,244.6 L125.7,247.8 L123.1,250.9 L120.3,253.9 L117.4,256.8 L114.3,259.7Z" fill="#f6f6f6" fill-opacity="0.33"/><path d="M501.4,69.9 L507.1,63.9 L512.7,57.6 L518.0,51.2 L523.2,44.7 L528.1,38.0 L532.9,31.2 L537.5,24.2 L541.8,17.1 L541.8,17.1 L536.7,23.7 L531.7,30.3 L526.6,36.9 L521.6,43.5 L516.5,50.1 L511.5,56.7 L506.4,63.3 L501.4,69.9Z" fill="#f6f6f6" fill-opacity="0.70"/><path d="M159.1,229.2 L161.1,225.8 L162.7,222.1 L164.0,218.4 L164.8,214.6 L165.2,210.7 L165.2,206.7 L164.8,202.8 L164.0,198.9 L164.0,198.9 L163.6,202.8 L163.3,206.7 L162.8,210.4 L162.3,214.2 L161.6,217.9 L160.9,221.6 L160.0,225.3 L159.1,229.2Z" fill="#f6f6f6" fill-opacity="0.32"/><path d="M279.2,342.0 L279.7,334.2 L280.2,326.4 L280.9,318.7 L281.8,311.0 L282.8,303.3 L283.9,295.7 L285.2,288.0 L286.7,280.4 L286.7,280.4 L284.6,287.9 L282.9,295.5 L281.4,303.1 L280.3,310.8 L279.6,318.6 L279.1,326.3 L279.0,334.1 L279.2,342.0Z" fill="#f6f6f6" fill-opacity="0.61"/><path d="M74.6,92.0 L78.7,89.9 L82.4,87.4 L85.9,84.5 L89.0,81.3 L91.8,77.8 L94.2,74.1 L96.2,70.0 L97.7,65.7 L97.7,65.7 L95.4,69.6 L93.0,73.3 L90.4,76.8 L87.6,80.1 L84.7,83.3 L81.6,86.3 L78.2,89.2 L74.6,92.0Z" fill="#f6f6f6" fill-opacity="0.56"/><path d="M69.7,96.8 L74.5,91.9 L78.8,86.7 L82.7,81.1 L86.2,75.3 L89.2,69.3 L91.8,63.0 L93.9,56.5 L95.5,49.9 L95.5,49.9 L92.8,56.2 L90.1,62.3 L87.1,68.3 L84.0,74.1 L80.7,79.9 L77.3,85.6 L73.6,91.2 L69.7,96.8Z" fill="#f6f6f6" fill-opacity="0.29"/><path d="M332.7,442.3 L334.9,440.1 L337.0,437.7 L339.0,435.3 L341.0,432.8 L342.8,430.3 L344.6,427.7 L346.3,425.0 L347.8,422.2 L347.8,422.2 L345.5,424.4 L343.3,426.7 L341.3,429.1 L339.3,431.6 L337.5,434.1 L335.8,436.8 L334.1,439.5 L332.7,442.3Z" fill="#f6f6f6" fill-opacity="0.53"/><path d="M372.8,439.7 L375.8,438.4 L378.8,437.2 L381.8,436.0 L384.8,434.9 L387.9,433.9 L390.9,433.0 L394.1,432.2 L397.3,431.3 L397.3,431.3 L394.0,431.2 L390.6,431.5 L387.3,432.0 L384.2,433.0 L381.1,434.2 L378.1,435.7 L375.4,437.6 L372.8,439.7Z" fill="#f6f6f6" fill-opacity="0.38"/><path d="M309.7,167.8 L316.4,162.8 L323.2,157.8 L330.0,152.9 L336.8,148.0 L343.6,143.2 L350.5,138.5 L357.5,133.8 L364.5,129.1 L364.5,129.1 L356.9,132.8 L349.5,136.9 L342.3,141.2 L335.3,145.9 L328.5,150.9 L322.0,156.3 L315.7,161.9 L309.7,167.8Z" fill="#f6f6f6" fill-opacity="0.43"/><path d="M-7.1,83.7 L1.2,84.4 L9.6,84.9 L17.9,85.4 L26.2,85.7 L34.6,86.0 L42.9,86.1 L51.3,86.1 L59.6,86.0 L59.6,86.0 L51.3,85.3 L43.0,84.7 L34.6,84.3 L26.3,84.0 L17.9,83.7 L9.6,83.6 L1.2,83.6 L-7.1,83.7Z" fill="#f6f6f6" fill-opacity="0.28"/><path d="M186.8,55.4 L190.2,52.3 L193.6,49.3 L196.9,46.2 L200.3,43.0 L203.5,39.9 L206.8,36.7 L210.0,33.4 L213.2,30.1 L213.2,30.1 L209.5,32.9 L206.0,35.9 L202.6,38.9 L199.3,42.0 L196.0,45.2 L192.8,48.5 L189.8,51.9 L186.8,55.4Z" fill="#f6f6f6" fill-opacity="0.33"/><path d="M366.7,208.7 L371.7,205.4 L376.3,201.6 L380.7,197.6 L384.7,193.2 L388.4,188.5 L391.7,183.5 L394.6,178.3 L397.1,172.9 L397.1,172.9 L393.6,177.7 L390.1,182.4 L386.5,187.0 L382.7,191.5 L378.9,195.9 L375.0,200.2 L370.9,204.5 L366.7,208.7Z" fill="#f6f6f6" fill-opacity="0.50"/><path d="M74.6,316.9 L81.6,315.9 L88.5,315.1 L95.5,314.6 L102.3,314.2 L109.3,314.1 L116.2,314.2 L123.2,314.5 L130.2,314.9 L130.2,314.9 L123.3,313.4 L116.3,312.4 L109.3,311.9 L102.3,311.9 L95.3,312.4 L88.3,313.4 L81.4,314.9 L74.6,316.9Z" fill="#f6f6f6" fill-opacity="0.48"/><path d="M1.2,79.2 L4.8,76.8 L8.2,74.1 L11.5,71.3 L14.6,68.4 L17.6,65.2 L20.4,62.0 L23.1,58.6 L25.6,55.0 L25.6,55.0 L22.5,58.0 L19.4,61.1 L16.4,64.1 L13.3,67.1 L10.3,70.1 L7.3,73.1 L4.2,76.1 L1.2,79.2Z" fill="#f6f6f6" fill-opacity="0.35"/><path d="M267.1,505.9 L268.5,501.7 L269.7,497.4 L270.8,493.1 L271.7,488.8 L272.6,484.4 L273.2,480.0 L273.8,475.6 L274.1,471.2 L274.1,471.2 L272.9,475.5 L271.9,479.8 L270.9,484.1 L269.9,488.4 L269.1,492.7 L268.3,497.1 L267.7,501.5 L267.1,505.9Z" fill="#f6f6f6" fill-opacity="0.53"/><path d="M83.0,237.7 L89.1,236.4 L95.1,234.5 L100.8,232.2 L106.3,229.4 L111.6,226.2 L116.6,222.5 L121.4,218.4 L125.8,213.9 L125.8,213.9 L120.7,217.6 L115.6,221.1 L110.5,224.4 L105.2,227.4 L99.9,230.3 L94.4,232.9 L88.8,235.4 L83.0,237.7Z" fill="#f6f6f6" fill-opacity="0.33"/><path d="M5.9,429.6 L8.1,421.5 L9.9,413.3 L11.5,405.0 L12.7,396.7 L13.5,388.4 L14.0,380.0 L14.2,371.6 L14.0,363.2 L14.0,363.2 L13.3,371.5 L12.5,379.9 L11.6,388.2 L10.6,396.5 L9.6,404.8 L8.4,413.0 L7.2,421.3 L5.9,429.6Z" fill="#f6f6f6" fill-opacity="0.56"/><path d="M9.0,240.1 L9.9,234.8 L10.8,229.6 L11.8,224.4 L12.7,219.2 L13.6,214.0 L14.6,208.7 L15.6,203.5 L16.5,198.2 L16.5,198.2 L14.4,203.2 L12.7,208.3 L11.3,213.5 L10.2,218.7 L9.4,224.0 L8.9,229.3 L8.8,234.7 L9.0,240.1Z" fill="#f6f6f6" fill-opacity="0.60"/><path d="M131.2,207.9 L137.9,203.8 L144.3,199.3 L150.5,194.6 L156.5,189.5 L162.3,184.2 L167.8,178.6 L173.0,172.8 L177.9,166.6 L177.9,166.6 L172.3,172.2 L166.7,177.6 L161.0,182.9 L155.3,188.1 L149.4,193.2 L143.4,198.2 L137.3,203.1 L131.2,207.9Z" fill="#f6f6f6" fill-opacity="0.30"/><path d="M203.6,480.7 L211.5,477.6 L219.3,474.2 L226.9,470.4 L234.3,466.3 L241.6,461.8 L248.6,457.0 L255.4,451.9 L261.9,446.4 L261.9,446.4 L254.7,451.0 L247.5,455.4 L240.3,459.8 L233.1,464.1 L225.8,468.3 L218.4,472.5 L211.0,476.6 L203.6,480.7Z" fill="#f6f6f6" fill-opacity="0.36"/><path d="M507.9,-15.6 L511.7,-19.7 L515.5,-23.9 L519.2,-28.1 L522.8,-32.3 L526.4,-36.6 L530.0,-41.0 L533.4,-45.4 L536.8,-49.9 L536.8,-49.9 L532.7,-46.1 L528.7,-42.1 L524.9,-38.0 L521.2,-33.7 L517.6,-29.4 L514.2,-24.9 L510.9,-20.3 L507.9,-15.6Z" fill="#f6f6f6" fill-opacity="0.31"/><path d="M312.7,259.4 L315.0,258.0 L317.2,256.5 L319.4,255.0 L321.6,253.5 L323.7,251.9 L325.8,250.3 L327.9,248.7 L330.0,246.9 L330.0,246.9 L327.5,248.1 L325.2,249.3 L322.9,250.7 L320.7,252.3 L318.5,253.9 L316.5,255.6 L314.5,257.5 L312.7,259.4Z" fill="#f6f6f6" fill-opacity="0.33"/><path d="M150.5,165.3 L153.4,164.1 L156.1,162.7 L158.7,161.1 L161.2,159.2 L163.4,157.2 L165.5,154.9 L167.5,152.5 L169.1,149.9 L169.1,149.9 L166.6,151.7 L164.2,153.5 L161.9,155.4 L159.5,157.3 L157.3,159.2 L155.0,161.1 L152.7,163.1 L150.5,165.3Z" fill="#f6f6f6" fill-opacity="0.30"/><path d="M385.5,278.5 L389.3,275.8 L392.9,272.8 L396.2,269.7 L399.4,266.2 L402.3,262.6 L404.9,258.8 L407.3,254.8 L409.4,250.7 L409.4,250.7 L406.5,254.3 L403.6,257.9 L400.7,261.4 L397.8,264.9 L394.8,268.3 L391.8,271.7 L388.6,275.1 L385.5,278.5Z" fill="#f6f6f6" fill-opacity="0.52"/><path d="M309.8,72.4 L314.7,69.4 L319.6,66.2 L324.3,62.9 L329.0,59.5 L333.6,55.9 L338.0,52.2 L342.4,48.4 L346.6,44.4 L346.6,44.4 L341.9,47.8 L337.3,51.2 L332.6,54.7 L328.0,58.2 L323.4,61.7 L318.8,65.2 L314.3,68.8 L309.8,72.4Z" fill="#f6f6f6" fill-opacity="0.54"/><path d="M341.0,377.7 L342.2,373.4 L343.3,369.1 L344.5,364.9 L345.7,360.7 L346.9,356.5 L348.2,352.3 L349.6,348.0 L350.9,343.8 L350.9,343.8 L348.8,347.7 L347.0,351.8 L345.4,355.9 L344.0,360.2 L342.9,364.5 L342.0,368.8 L341.4,373.2 L341.0,377.7Z" fill="#f6f6f6" fill-opacity="0.42"/><path d="M89.4,244.8 L93.9,240.0 L98.4,235.2 L102.9,230.4 L107.3,225.6 L111.8,220.8 L116.2,216.0 L120.7,211.2 L125.2,206.3 L125.2,206.3 L120.0,210.4 L115.0,214.7 L110.2,219.3 L105.6,224.0 L101.2,228.9 L97.1,234.0 L93.1,239.3 L89.4,244.8Z" fill="#f6f6f6" fill-opacity="0.68"/><path d="M420.8,75.7 L422.8,73.7 L424.7,72.0 L426.7,70.6 L428.8,69.4 L431.0,68.5 L433.4,67.9 L435.9,67.5 L438.7,67.3 L438.7,67.3 L435.9,66.8 L433.2,66.8 L430.6,67.3 L428.2,68.2 L426.0,69.5 L424.0,71.2 L422.3,73.2 L420.8,75.7Z" fill="#f6f6f6" fill-opacity="0.69"/><path d="M273.2,101.2 L277.5,98.9 L281.7,96.6 L286.0,94.4 L290.3,92.3 L294.6,90.3 L298.9,88.2 L303.3,86.2 L307.7,84.2 L307.7,84.2 L302.9,85.2 L298.2,86.6 L293.7,88.3 L289.3,90.3 L285.0,92.6 L280.9,95.1 L276.9,98.0 L273.2,101.2Z" fill="#f6f6f6" fill-opacity="0.48"/><path d="M25.8,413.5 L28.4,412.7 L30.6,411.5 L32.6,409.9 L34.1,407.9 L35.2,405.7 L35.8,403.3 L35.9,400.7 L35.4,398.0 L35.4,398.0 L34.8,400.6 L34.1,402.8 L33.2,404.9 L32.2,406.7 L31.0,408.4 L29.5,410.1 L27.8,411.8 L25.8,413.5Z" fill="#f6f6f6" fill-opacity="0.47"/><path d="M495.3,167.3 L497.2,166.1 L499.1,164.8 L500.9,163.5 L502.7,162.2 L504.5,160.9 L506.2,159.6 L508.0,158.2 L509.8,156.7 L509.8,156.7 L507.6,157.3 L505.4,158.2 L503.4,159.3 L501.5,160.5 L499.7,162.0 L498.0,163.6 L496.5,165.4 L495.3,167.3Z" fill="#f6f6f6" fill-opacity="0.63"/><path d="M475.1,216.6 L477.9,216.3 L480.7,215.9 L483.5,215.5 L486.3,215.1 L489.0,214.7 L491.8,214.3 L494.6,213.8 L497.4,213.4 L497.4,213.4 L494.5,213.2 L491.7,213.2 L488.9,213.3 L486.1,213.6 L483.3,214.1 L480.5,214.8 L477.8,215.6 L475.1,216.6Z" fill="#f6f6f6" fill-opacity="0.37"/><path d="M45.5,229.7 L53.5,230.2 L61.5,230.6 L69.4,231.0 L77.4,231.4 L85.4,231.8 L93.3,232.1 L101.3,232.5 L109.4,232.8 L109.4,232.8 L101.4,231.3 L93.5,230.3 L85.5,229.4 L77.5,228.9 L69.5,228.7 L61.5,228.7 L53.5,229.0 L45.5,229.7Z" fill="#f6f6f6" fill-opacity="0.59"/><path d="M462.9,35.2 L467.9,28.2 L472.6,20.9 L477.1,13.4 L481.1,5.8 L484.9,-2.0 L488.3,-9.9 L491.5,-18.0 L494.2,-26.2 L494.2,-26.2 L490.6,-18.3 L487.0,-10.5 L483.3,-2.7 L479.4,5.0 L475.5,12.6 L471.4,20.2 L467.2,27.7 L462.9,35.2Z" fill="#f6f6f6" fill-opacity="0.61"/><path d="M444.2,295.3 L448.3,296.0 L452.4,296.6 L456.4,297.2 L460.4,297.8 L464.5,298.3 L468.5,298.8 L472.6,299.3 L476.7,299.7 L476.7,299.7 L472.8,298.2 L468.9,297.0 L464.9,296.0 L460.8,295.3 L456.7,294.9 L452.5,294.8 L448.4,294.9 L444.2,295.3Z" fill="#f6f6f6" fill-opacity="0.28"/><path d="M335.2,109.5 L341.0,104.1 L346.8,98.7 L352.6,93.2 L358.4,87.8 L364.2,82.4 L369.9,76.9 L375.7,71.5 L381.5,66.0 L381.5,66.0 L375.2,70.8 L369.0,75.8 L363.0,81.0 L357.1,86.4 L351.4,92.0 L345.8,97.6 L340.4,103.5 L335.2,109.5Z" fill="#f6f6f6" fill-opacity="0.47"/><path d="M44.3,454.7 L50.3,450.8 L56.3,446.7 L62.3,442.6 L68.2,438.5 L74.0,434.3 L79.8,430.0 L85.6,425.6 L91.2,421.2 L91.2,421.2 L85.1,424.9 L79.0,428.9 L73.1,432.9 L67.1,437.1 L61.3,441.3 L55.6,445.7 L49.9,450.1 L44.3,454.7Z" fill="#f6f6f6" fill-opacity="0.62"/><path d="M169.3,124.4 L175.9,125.8 L182.5,126.7 L189.1,127.1 L195.7,127.0 L202.3,126.4 L208.8,125.3 L215.3,123.7 L221.6,121.6 L221.6,121.6 L215.0,122.7 L208.5,123.6 L202.0,124.2 L195.6,124.7 L189.1,124.9 L182.6,125.0 L176.0,124.8 L169.3,124.4Z" fill="#f6f6f6" fill-opacity="0.64"/><path d="M470.8,386.5 L477.0,382.7 L482.9,378.5 L488.5,374.1 L494.0,369.4 L499.2,364.4 L504.2,359.2 L508.9,353.7 L513.3,348.0 L513.3,348.0 L508.1,353.0 L502.9,358.0 L497.7,362.9 L492.5,367.7 L487.1,372.4 L481.8,377.1 L476.3,381.8 L470.8,386.5Z" fill="#f6f6f6" fill-opacity="0.70"/><path d="M113.4,320.5 L115.8,317.7 L118.2,315.2 L120.6,313.0 L123.2,310.9 L125.8,309.0 L128.7,307.2 L131.7,305.6 L135.0,304.0 L135.0,304.0 L131.3,304.5 L127.9,305.5 L124.6,307.0 L121.7,309.0 L119.1,311.3 L116.8,314.0 L114.9,317.1 L113.4,320.5Z" fill="#f6f6f6" fill-opacity="0.73"/><path d="M2.4,428.9 L10.0,428.1 L17.5,427.0 L25.0,425.5 L32.3,423.6 L39.6,421.5 L46.8,418.9 L53.8,416.1 L60.7,412.8 L60.7,412.8 L53.5,415.3 L46.3,417.7 L39.1,419.9 L31.9,422.0 L24.6,423.9 L17.3,425.7 L9.9,427.3 L2.4,428.9Z" fill="#f6f6f6" fill-opacity="0.54"/><path d="M12.2,221.2 L15.9,222.4 L19.6,223.2 L23.3,223.7 L27.1,223.8 L30.9,223.6 L34.6,223.0 L38.3,222.0 L41.9,220.7 L41.9,220.7 L38.1,221.1 L34.4,221.4 L30.7,221.6 L27.1,221.7 L23.4,221.7 L19.7,221.6 L16.0,221.4 L12.2,221.2Z" fill="#f6f6f6" fill-opacity="0.29"/><path d="M-18.5,85.1 L-16.1,85.0 L-13.8,84.7 L-11.5,84.3 L-9.2,83.8 L-6.9,83.2 L-4.7,82.5 L-2.5,81.7 L-0.3,80.7 L-0.3,80.7 L-2.7,80.8 L-5.0,81.0 L-7.4,81.3 L-9.7,81.8 L-11.9,82.4 L-14.2,83.1 L-16.4,84.0 L-18.5,85.1Z" fill="#f6f6f6" fill-opacity="0.43"/><path d="M353.7,482.1 L356.2,480.1 L358.5,478.2 L360.8,476.3 L363.1,474.5 L365.5,472.7 L367.9,470.9 L370.3,469.1 L372.8,467.3 L372.8,467.3 L369.8,468.1 L366.9,469.3 L364.2,470.8 L361.6,472.6 L359.3,474.6 L357.2,476.9 L355.3,479.4 L353.7,482.1Z" fill="#f6f6f6" fill-opacity="0.31"/><path d="M355.2,461.1 L357.8,458.2 L360.3,455.3 L362.7,452.3 L365.1,449.2 L367.4,446.1 L369.6,443.0 L371.8,439.8 L373.9,436.5 L373.9,436.5 L371.3,439.4 L368.7,442.3 L366.3,445.3 L363.9,448.3 L361.6,451.4 L359.4,454.6 L357.2,457.8 L355.2,461.1Z" fill="#f6f6f6" fill-opacity="0.45"/><path d="M317.5,458.2 L325.0,459.6 L332.6,460.5 L340.2,461.2 L347.8,461.6 L355.4,461.7 L363.1,461.5 L370.7,461.0 L378.3,460.1 L378.3,460.1 L370.7,459.9 L363.0,459.7 L355.5,459.4 L347.9,459.2 L340.3,459.0 L332.7,458.7 L325.1,458.5 L317.5,458.2Z" fill="#f6f6f6" fill-opacity="0.47"/><path d="M35.6,58.0 L41.6,52.9 L47.5,47.6 L53.3,42.3 L59.0,36.9 L64.6,31.3 L70.1,25.7 L75.5,20.0 L80.8,14.2 L80.8,14.2 L74.9,19.4 L69.1,24.7 L63.4,30.1 L57.7,35.5 L52.1,41.0 L46.5,46.6 L41.0,52.2 L35.6,58.0Z" fill="#f6f6f6" fill-opacity="0.68"/><path d="M109.5,330.7 L112.4,326.8 L115.2,322.8 L117.8,318.7 L120.4,314.6 L122.7,310.3 L125.0,306.0 L127.1,301.7 L129.0,297.2 L129.0,297.2 L126.4,301.3 L123.8,305.4 L121.3,309.5 L118.8,313.7 L116.4,317.9 L114.1,322.1 L111.8,326.4 L109.5,330.7Z" fill="#f6f6f6" fill-opacity="0.69"/><path d="M408.8,65.2 L417.0,67.4 L425.3,69.2 L433.7,70.8 L442.1,72.2 L450.6,73.2 L459.1,74.0 L467.6,74.6 L476.1,74.8 L476.1,74.8 L467.7,73.6 L459.2,72.5 L450.8,71.3 L442.4,70.1 L434.0,68.9 L425.6,67.7 L417.2,66.5 L408.8,65.2Z" fill="#f6f6f6" fill-opacity="0.45"/><path d="M303.5,82.6 L304.4,79.9 L305.2,77.3 L306.0,74.8 L306.8,72.3 L307.7,69.7 L308.6,67.2 L309.5,64.6 L310.4,62.0 L310.4,62.0 L308.7,64.2 L307.2,66.6 L306.0,69.1 L305.0,71.6 L304.2,74.3 L303.7,77.0 L303.5,79.8 L303.5,82.6Z" fill="#f6f6f6" fill-opacity="0.30"/><path d="M259.3,131.9 L262.7,133.3 L266.1,134.3 L269.5,135.0 L273.1,135.3 L276.6,135.4 L280.1,135.0 L283.6,134.4 L287.1,133.4 L287.1,133.4 L283.5,133.6 L280.0,133.7 L276.6,133.7 L273.1,133.6 L269.7,133.4 L266.3,133.0 L262.9,132.5 L259.3,131.9Z" fill="#f6f6f6" fill-opacity="0.55"/><path d="M-18.0,198.0 L-12.5,198.1 L-7.0,197.7 L-1.5,196.9 L3.9,195.7 L9.1,194.0 L14.2,192.0 L19.2,189.5 L24.0,186.7 L24.0,186.7 L18.8,188.6 L13.6,190.4 L8.5,192.0 L3.3,193.5 L-1.9,194.8 L-7.2,196.0 L-12.6,197.1 L-18.0,198.0Z" fill="#f6f6f6" fill-opacity="0.43"/><path d="M495.6,508.8 L499.0,505.7 L502.4,502.9 L505.9,500.2 L509.5,497.7 L513.2,495.5 L517.0,493.3 L521.0,491.3 L525.2,489.5 L525.2,489.5 L520.6,490.4 L516.3,491.8 L512.1,493.6 L508.2,495.8 L504.6,498.5 L501.3,501.6 L498.3,505.0 L495.6,508.8Z" fill="#f6f6f6" fill-opacity="0.37"/><path d="M259.3,48.9 L263.9,45.7 L268.4,42.2 L272.6,38.5 L276.5,34.4 L280.2,30.2 L283.6,25.7 L286.8,21.0 L289.6,16.1 L289.6,16.1 L286.1,20.6 L282.6,24.9 L278.9,29.1 L275.2,33.2 L271.4,37.3 L267.5,41.2 L263.4,45.1 L259.3,48.9Z" fill="#f6f6f6" fill-opacity="0.48"/><path d="M344.5,394.4 L348.5,393.5 L352.4,392.7 L356.2,392.1 L360.1,391.7 L363.9,391.4 L367.8,391.2 L371.8,391.2 L375.9,391.4 L375.9,391.4 L371.9,390.2 L367.9,389.5 L363.9,389.2 L359.8,389.4 L355.9,390.0 L351.9,391.0 L348.1,392.5 L344.5,394.4Z" fill="#f6f6f6" fill-opacity="0.58"/><path d="M465.8,255.6 L468.5,254.5 L471.0,253.3 L473.6,252.1 L476.1,250.9 L478.5,249.7 L481.0,248.4 L483.5,247.1 L486.0,245.7 L486.0,245.7 L483.2,246.2 L480.4,246.9 L477.7,247.8 L475.1,249.0 L472.6,250.4 L470.2,251.9 L468.0,253.6 L465.8,255.6Z" fill="#f6f6f6" fill-opacity="0.53"/><path d="M62.5,258.1 L64.9,255.6 L67.2,253.1 L69.5,250.6 L71.8,248.1 L74.1,245.7 L76.5,243.2 L78.9,240.8 L81.3,238.3 L81.3,238.3 L78.3,240.1 L75.6,242.2 L72.9,244.4 L70.5,246.8 L68.2,249.4 L66.1,252.2 L64.2,255.1 L62.5,258.1Z" fill="#f6f6f6" fill-opacity="0.57"/><path d="M227.1,347.1 L231.1,343.8 L234.8,340.3 L238.4,336.7 L241.8,332.8 L244.9,328.8 L247.8,324.6 L250.5,320.2 L252.9,315.7 L252.9,315.7 L249.7,319.6 L246.5,323.6 L243.3,327.5 L240.1,331.4 L236.8,335.3 L233.6,339.2 L230.3,343.1 L227.1,347.1Z" fill="#f6f6f6" fill-opacity="0.28"/><path d="M450.2,83.7 L455.4,81.9 L460.5,80.0 L465.7,78.1 L470.8,76.4 L475.9,74.6 L481.1,72.9 L486.3,71.2 L491.5,69.5 L491.5,69.5 L486.0,70.2 L480.6,71.2 L475.3,72.5 L470.0,74.2 L464.9,76.1 L459.9,78.3 L455.0,80.9 L450.2,83.7Z" fill="#f6f6f6" fill-opacity="0.64"/><path d="M5.9,380.3 L9.1,377.0 L12.2,373.7 L15.3,370.4 L18.3,367.2 L21.4,363.9 L24.5,360.6 L27.5,357.3 L30.6,353.9 L30.6,353.9 L26.9,356.6 L23.5,359.6 L20.2,362.6 L17.0,365.9 L14.0,369.3 L11.1,372.8 L8.4,376.5 L5.9,380.3Z" fill="#f6f6f6" fill-opacity="0.54"/><path d="M228.5,522.3 L236.7,522.9 L245.0,523.4 L253.3,523.7 L261.6,524.0 L269.8,524.2 L278.1,524.3 L286.4,524.2 L294.7,524.1 L294.7,524.1 L286.4,523.1 L278.2,522.5 L269.9,522.0 L261.6,521.7 L253.3,521.5 L245.0,521.6 L236.8,521.8 L228.5,522.3Z" fill="#f6f6f6" fill-opacity="0.44"/><path d="M384.9,60.1 L392.1,58.9 L399.4,57.8 L406.5,57.0 L413.7,56.3 L420.9,55.8 L428.2,55.5 L435.5,55.4 L442.8,55.4 L442.8,55.4 L435.5,54.3 L428.2,53.7 L420.9,53.6 L413.5,53.9 L406.3,54.7 L399.0,56.0 L391.9,57.8 L384.9,60.1Z" fill="#f6f6f6" fill-opacity="0.59"/><path d="M340.9,132.6 L343.1,133.3 L345.4,133.9 L347.6,134.4 L349.7,134.8 L352.0,135.1 L354.2,135.3 L356.5,135.5 L358.8,135.5 L358.8,135.5 L356.8,134.3 L354.6,133.4 L352.4,132.7 L350.2,132.2 L347.9,132.0 L345.6,131.9 L343.2,132.1 L340.9,132.6Z" fill="#f6f6f6" fill-opacity="0.51"/><path d="M-6.2,53.6 L0.5,50.4 L7.0,46.8 L13.4,43.2 L19.7,39.4 L26.0,35.4 L32.1,31.2 L38.1,27.0 L44.0,22.5 L44.0,22.5 L37.5,26.0 L31.1,29.7 L24.8,33.5 L18.5,37.3 L12.2,41.3 L6.0,45.3 L-0.1,49.4 L-6.2,53.6Z" fill="#f6f6f6" fill-opacity="0.71"/><path d="M314.8,121.2 L323.1,121.0 L331.4,120.8 L339.7,120.8 L347.9,121.0 L356.2,121.3 L364.4,121.7 L372.7,122.3 L381.0,122.9 L381.0,122.9 L372.8,121.4 L364.6,120.3 L356.3,119.6 L348.0,119.2 L339.7,119.1 L331.4,119.5 L323.1,120.1 L314.8,121.2Z" fill="#f6f6f6" fill-opacity="0.27"/><path d="M183.7,11.4 L187.7,10.2 L191.6,9.2 L195.4,8.4 L199.3,7.8 L203.2,7.4 L207.2,7.3 L211.2,7.3 L215.3,7.5 L215.3,7.5 L211.2,6.6 L207.2,6.1 L203.1,6.0 L199.1,6.3 L195.1,7.0 L191.2,8.1 L187.4,9.6 L183.7,11.4Z" fill="#f6f6f6" fill-opacity="0.54"/><path d="M125.4,472.5 L130.9,467.6 L136.2,462.6 L141.4,457.5 L146.5,452.3 L151.5,446.9 L156.4,441.4 L161.1,435.9 L165.7,430.2 L165.7,430.2 L160.3,435.1 L155.0,440.2 L149.8,445.3 L144.7,450.6 L139.8,455.9 L134.9,461.3 L130.0,466.8 L125.4,472.5Z" fill="#f6f6f6" fill-opacity="0.48"/><path d="M429.7,261.7 L433.0,259.3 L436.2,256.6 L439.2,253.8 L442.0,250.9 L444.6,247.8 L447.1,244.6 L449.5,241.2 L451.6,237.7 L451.6,237.7 L448.7,240.6 L446.0,243.6 L443.2,246.6 L440.5,249.5 L437.8,252.5 L435.1,255.5 L432.4,258.6 L429.7,261.7Z" fill="#f6f6f6" fill-opacity="0.48"/><path d="M434.1,362.7 L440.4,359.9 L446.5,356.7 L452.3,353.2 L457.9,349.3 L463.2,345.1 L468.2,340.5 L473.0,335.6 L477.4,330.4 L477.4,330.4 L472.3,335.0 L467.2,339.4 L462.0,343.6 L456.7,347.7 L451.2,351.6 L445.7,355.4 L440.0,359.1 L434.1,362.7Z" fill="#f6f6f6" fill-opacity="0.45"/><path d="M155.9,158.0 L163.6,156.9 L171.3,155.7 L179.0,154.6 L186.6,153.4 L194.3,152.2 L201.9,151.0 L209.6,149.8 L217.3,148.5 L217.3,148.5 L209.5,148.8 L201.7,149.4 L194.0,150.2 L186.3,151.3 L178.6,152.6 L171.0,154.1 L163.4,155.9 L155.9,158.0Z" fill="#f6f6f6" fill-opacity="0.37"/><path d="M503.5,496.9 L508.4,492.7 L513.3,488.4 L518.1,484.0 L522.7,479.5 L527.3,474.9 L531.9,470.3 L536.3,465.5 L540.6,460.7 L540.6,460.7 L535.7,464.9 L530.9,469.2 L526.1,473.7 L521.4,478.1 L516.8,482.7 L512.3,487.4 L507.8,492.1 L503.5,496.9Z" fill="#f6f6f6" fill-opacity="0.55"/><path d="M451.5,413.4 L455.1,415.3 L458.8,416.8 L462.7,417.9 L466.6,418.6 L470.6,418.8 L474.6,418.6 L478.6,418.0 L482.5,417.0 L482.5,417.0 L478.5,417.3 L474.5,417.5 L470.6,417.4 L466.8,417.0 L463.0,416.5 L459.2,415.7 L455.3,414.6 L451.5,413.4Z" fill="#f6f6f6" fill-opacity="0.36"/><path d="M62.4,119.4 L67.1,118.1 L71.7,116.8 L76.4,115.4 L81.0,114.2 L85.6,112.9 L90.3,111.6 L95.0,110.3 L99.6,109.0 L99.6,109.0 L94.8,109.6 L90.0,110.5 L85.3,111.5 L80.6,112.7 L76.0,114.1 L71.4,115.7 L66.8,117.4 L62.4,119.4Z" fill="#f6f6f6" fill-opacity="0.72"/><path d="M226.7,67.7 L230.2,64.8 L233.6,61.7 L236.9,58.5 L240.1,55.2 L243.1,51.8 L246.1,48.2 L248.9,44.6 L251.5,40.8 L251.5,40.8 L248.2,44.0 L245.0,47.2 L241.8,50.5 L238.6,53.8 L235.6,57.2 L232.6,60.7 L229.6,64.2 L226.7,67.7Z" fill="#f6f6f6" fill-opacity="0.53"/><path d="M301.5,245.2 L306.2,243.4 L310.7,241.2 L315.0,238.7 L319.1,235.9 L322.9,232.8 L326.5,229.3 L329.8,225.6 L332.9,221.6 L332.9,221.6 L329.2,224.9 L325.4,228.2 L321.7,231.3 L317.8,234.3 L313.9,237.1 L309.9,239.9 L305.8,242.6 L301.5,245.2Z" fill="#f6f6f6" fill-opacity="0.33"/><path d="M313.8,428.5 L322.2,427.8 L330.4,427.2 L338.7,426.6 L347.0,426.2 L355.3,425.8 L363.6,425.5 L371.9,425.3 L380.2,425.2 L380.2,425.2 L371.9,424.4 L363.6,424.1 L355.2,424.0 L346.9,424.2 L338.6,424.8 L330.3,425.7 L322.1,426.9 L313.8,428.5Z" fill="#f6f6f6" fill-opacity="0.75"/><path d="M47.4,-4.8 L51.0,-6.3 L54.5,-8.2 L57.7,-10.3 L60.8,-12.7 L63.6,-15.4 L66.1,-18.3 L68.4,-21.4 L70.4,-24.8 L70.4,-24.8 L67.6,-22.1 L64.9,-19.4 L62.1,-16.8 L59.3,-14.3 L56.5,-11.9 L53.5,-9.5 L50.5,-7.2 L47.4,-4.8Z" fill="#f6f6f6" fill-opacity="0.34"/><path d="M345.8,486.1 L348.3,486.9 L350.8,487.4 L353.2,487.8 L355.7,488.2 L358.2,488.3 L360.8,488.4 L363.3,488.4 L365.8,488.1 L365.8,488.1 L363.4,487.5 L360.9,487.0 L358.4,486.5 L355.9,486.2 L353.4,486.0 L350.9,486.0 L348.4,486.0 L345.8,486.1Z" fill="#f6f6f6" fill-opacity="0.41"/><path d="M366.1,90.9 L370.8,85.6 L375.3,80.1 L379.5,74.4 L383.5,68.5 L387.1,62.4 L390.5,56.2 L393.6,49.8 L396.3,43.2 L396.3,43.2 L392.9,49.5 L389.5,55.6 L385.9,61.7 L382.2,67.7 L378.3,73.6 L374.4,79.4 L370.3,85.1 L366.1,90.9Z" fill="#f6f6f6" fill-opacity="0.31"/><path d="M503.4,17.8 L506.6,19.2 L509.9,20.2 L513.2,21.0 L516.5,21.5 L519.9,21.7 L523.3,21.7 L526.7,21.4 L530.1,20.8 L530.1,20.8 L526.7,20.4 L523.4,20.1 L520.1,19.7 L516.8,19.3 L513.5,19.0 L510.2,18.6 L506.8,18.2 L503.4,17.8Z" fill="#f6f6f6" fill-opacity="0.43"/><path d="M57.7,472.1 L63.8,470.8 L69.8,469.2 L75.6,467.1 L81.2,464.6 L86.7,461.8 L92.0,458.5 L97.0,454.9 L101.8,450.9 L101.8,450.9 L96.6,454.4 L91.4,457.6 L86.0,460.6 L80.6,463.3 L75.1,465.8 L69.4,468.1 L63.6,470.2 L57.7,472.1Z" fill="#f6f6f6" fill-opacity="0.58"/><path d="M504.4,344.9 L508.9,346.2 L513.4,347.2 L518.0,348.0 L522.6,348.5 L527.2,348.8 L531.8,348.9 L536.4,348.7 L541.0,348.2 L541.0,348.2 L536.4,348.0 L531.8,347.8 L527.2,347.4 L522.7,347.1 L518.1,346.6 L513.6,346.1 L509.0,345.5 L504.4,344.9Z" fill="#f6f6f6" fill-opacity="0.58"/><path d="M471.4,284.6 L476.3,283.6 L481.1,282.4 L485.9,281.1 L490.6,279.7 L495.3,278.1 L500.0,276.3 L504.6,274.4 L509.1,272.4 L509.1,272.4 L504.2,273.4 L499.4,274.6 L494.6,275.9 L489.9,277.4 L485.2,279.0 L480.6,280.7 L476.0,282.6 L471.4,284.6Z" fill="#f6f6f6" fill-opacity="0.53"/><path d="M278.7,263.7 L283.6,263.3 L288.4,263.0 L293.2,262.7 L298.0,262.4 L302.8,262.2 L307.6,262.1 L312.4,262.0 L317.3,261.9 L317.3,261.9 L312.4,261.2 L307.6,260.7 L302.8,260.5 L297.9,260.6 L293.1,261.0 L288.3,261.6 L283.5,262.5 L278.7,263.7Z" fill="#f6f6f6" fill-opacity="0.68"/><path d="M122.5,521.7 L126.7,519.4 L130.6,516.8 L134.3,513.9 L137.8,510.7 L141.0,507.2 L143.8,503.5 L146.4,499.5 L148.6,495.3 L148.6,495.3 L145.8,499.1 L142.8,502.7 L139.7,506.2 L136.6,509.5 L133.3,512.7 L129.8,515.8 L126.2,518.8 L122.5,521.7Z" fill="#f6f6f6" fill-opacity="0.62"/><path d="M372.5,224.2 L377.1,218.9 L381.4,213.5 L385.5,207.9 L389.5,202.2 L393.3,196.4 L396.9,190.4 L400.4,184.4 L403.6,178.2 L403.6,178.2 L399.8,184.0 L396.0,189.8 L392.1,195.6 L388.3,201.3 L384.4,207.1 L380.5,212.8 L376.5,218.5 L372.5,224.2Z" fill="#f6f6f6" fill-opacity="0.66"/><path d="M55.3,292.2 L58.5,287.2 L61.9,282.3 L65.3,277.5 L68.9,272.9 L72.5,268.3 L76.3,263.8 L80.3,259.4 L84.4,255.0 L84.4,255.0 L79.8,258.9 L75.5,263.0 L71.4,267.3 L67.6,271.9 L64.1,276.7 L60.9,281.6 L57.9,286.8 L55.3,292.2Z" fill="#f6f6f6" fill-opacity="0.65"/><path d="M378.8,123.7 L384.4,121.7 L389.9,119.3 L395.2,116.6 L400.4,113.6 L405.3,110.2 L410.0,106.5 L414.4,102.5 L418.6,98.2 L418.6,98.2 L413.7,101.6 L408.8,105.0 L403.9,108.3 L399.0,111.4 L394.0,114.6 L389.0,117.6 L383.9,120.6 L378.8,123.7Z" fill="#f6f6f6" fill-opacity="0.69"/><path d="M186.8,228.4 L191.7,227.5 L196.4,226.0 L200.9,224.2 L205.3,222.0 L209.4,219.4 L213.3,216.4 L216.9,213.1 L220.3,209.4 L220.3,209.4 L216.3,212.4 L212.4,215.3 L208.4,217.9 L204.3,220.3 L200.1,222.6 L195.8,224.7 L191.4,226.6 L186.8,228.4Z" fill="#f6f6f6" fill-opacity="0.30"/><path d="M395.4,244.2 L396.0,239.6 L396.7,235.0 L397.6,230.6 L398.5,226.1 L399.5,221.8 L400.6,217.4 L401.9,213.0 L403.2,208.5 L403.2,208.5 L401.0,212.6 L399.2,216.9 L397.7,221.3 L396.5,225.7 L395.7,230.3 L395.3,234.9 L395.1,239.5 L395.4,244.2Z" fill="#f6f6f6" fill-opacity="0.35"/><path d="M80.6,247.1 L86.1,246.0 L91.4,244.5 L96.6,242.6 L101.6,240.4 L106.5,237.9 L111.2,235.0 L115.7,231.8 L120.0,228.2 L120.0,228.2 L115.1,230.8 L110.3,233.4 L105.4,235.8 L100.6,238.2 L95.7,240.5 L90.7,242.7 L85.7,244.9 L80.6,247.1Z" fill="#f6f6f6" fill-opacity="0.38"/><path d="M58.9,327.6 L63.7,323.4 L68.4,319.3 L73.1,315.1 L77.8,310.9 L82.5,306.8 L87.2,302.6 L91.9,298.4 L96.6,294.2 L96.6,294.2 L91.4,297.7 L86.3,301.5 L81.4,305.4 L76.6,309.5 L71.9,313.8 L67.4,318.2 L63.1,322.8 L58.9,327.6Z" fill="#f6f6f6" fill-opacity="0.59"/><path d="M357.1,148.9 L365.9,148.8 L374.6,148.9 L383.2,149.3 L391.9,149.9 L400.5,150.8 L409.1,151.8 L417.7,153.1 L426.3,154.6 L426.3,154.6 L417.8,152.4 L409.3,150.6 L400.6,149.3 L392.0,148.3 L383.3,147.8 L374.6,147.7 L365.8,148.1 L357.1,148.9Z" fill="#f6f6f6" fill-opacity="0.47"/><path d="M229.1,406.5 L236.4,403.7 L243.6,400.6 L250.5,397.0 L257.2,393.1 L263.7,388.7 L269.9,384.0 L275.8,379.0 L281.5,373.5 L281.5,373.5 L275.3,378.4 L269.1,383.0 L262.8,387.5 L256.3,391.7 L249.7,395.7 L243.0,399.5 L236.1,403.0 L229.1,406.5Z" fill="#f6f6f6" fill-opacity="0.63"/><path d="M282.9,128.9 L290.7,128.9 L298.5,128.5 L306.2,127.7 L313.8,126.5 L321.4,125.0 L328.9,123.1 L336.3,120.8 L343.7,118.1 L343.7,118.1 L336.1,120.1 L328.6,121.9 L321.1,123.5 L313.5,125.0 L306.0,126.2 L298.3,127.3 L290.7,128.1 L282.9,128.9Z" fill="#f6f6f6" fill-opacity="0.46"/><path d="M61.9,44.7 L62.7,40.8 L63.5,37.0 L64.3,33.1 L65.0,29.3 L65.8,25.4 L66.5,21.5 L67.2,17.7 L67.9,13.7 L67.9,13.7 L66.5,17.5 L65.3,21.3 L64.3,25.1 L63.4,29.0 L62.8,32.9 L62.3,36.8 L62.0,40.7 L61.9,44.7Z" fill="#f6f6f6" fill-opacity="0.61"/><path d="M14.1,119.8 L20.2,121.1 L26.3,122.0 L32.5,122.6 L38.7,122.7 L44.9,122.4 L51.0,121.7 L57.2,120.6 L63.2,119.1 L63.2,119.1 L57.0,119.8 L50.9,120.4 L44.8,120.8 L38.7,120.9 L32.6,120.9 L26.4,120.7 L20.3,120.3 L14.1,119.8Z" fill="#f6f6f6" fill-opacity="0.28"/><path d="M169.1,515.8 L175.8,513.5 L182.3,511.0 L188.8,508.2 L195.1,505.2 L201.4,501.9 L207.5,498.5 L213.5,494.8 L219.4,490.9 L219.4,490.9 L213.1,494.0 L206.8,497.2 L200.5,500.3 L194.3,503.4 L188.0,506.5 L181.7,509.6 L175.4,512.7 L169.1,515.8Z" fill="#f6f6f6" fill-opacity="0.72"/><path d="M209.8,383.0 L217.2,383.7 L224.6,384.1 L232.0,384.3 L239.4,384.3 L246.9,384.0 L254.3,383.5 L261.6,382.9 L269.0,381.9 L269.0,381.9 L261.6,382.1 L254.2,382.4 L246.8,382.5 L239.4,382.7 L232.0,382.8 L224.6,382.9 L217.2,383.0 L209.8,383.0Z" fill="#f6f6f6" fill-opacity="0.64"/><path d="M261.4,158.7 L264.3,156.4 L267.1,154.1 L270.0,151.8 L272.8,149.5 L275.7,147.2 L278.5,144.9 L281.4,142.6 L284.3,140.3 L284.3,140.3 L281.0,142.0 L277.8,143.9 L274.7,146.0 L271.8,148.2 L269.0,150.6 L266.3,153.2 L263.7,155.9 L261.4,158.7Z" fill="#f6f6f6" fill-opacity="0.53"/><path d="M19.0,170.4 L22.9,169.0 L26.7,167.8 L30.5,166.8 L34.3,165.8 L38.1,165.0 L42.0,164.4 L46.0,163.8 L50.1,163.4 L50.1,163.4 L46.0,162.8 L41.9,162.6 L37.8,162.9 L33.8,163.6 L29.9,164.7 L26.1,166.2 L22.4,168.1 L19.0,170.4Z" fill="#f6f6f6" fill-opacity="0.56"/><path d="M413.6,-15.7 L417.1,-22.3 L420.7,-28.7 L424.4,-35.1 L428.4,-41.2 L432.5,-47.3 L436.8,-53.3 L441.3,-59.1 L445.9,-64.9 L445.9,-64.9 L440.7,-59.6 L435.8,-54.1 L431.2,-48.2 L427.0,-42.2 L423.1,-35.9 L419.6,-29.3 L416.4,-22.6 L413.6,-15.7Z" fill="#f6f6f6" fill-opacity="0.62"/><path d="M31.5,424.7 L37.7,422.2 L43.9,419.4 L50.1,416.5 L56.1,413.5 L62.1,410.3 L67.9,406.9 L73.8,403.4 L79.4,399.8 L79.4,399.8 L73.3,402.6 L67.2,405.6 L61.2,408.6 L55.1,411.6 L49.2,414.8 L43.2,418.0 L37.3,421.3 L31.5,424.7Z" fill="#f6f6f6" fill-opacity="0.49"/><path d="M492.4,99.6 L498.8,97.4 L505.1,95.0 L511.3,92.4 L517.4,89.6 L523.5,86.7 L529.4,83.6 L535.3,80.3 L541.1,76.9 L541.1,76.9 L535.0,79.7 L529.0,82.6 L522.9,85.5 L516.8,88.3 L510.7,91.2 L504.6,94.0 L498.5,96.8 L492.4,99.6Z" fill="#f6f6f6" fill-opacity="0.49"/><path d="M403.8,127.8 L407.2,126.8 L410.5,126.0 L413.8,125.4 L417.1,125.0 L420.3,124.8 L423.6,124.8 L427.1,125.0 L430.6,125.3 L430.6,125.3 L427.3,123.9 L423.8,123.1 L420.3,122.7 L416.8,122.8 L413.4,123.3 L410.1,124.4 L406.8,125.9 L403.8,127.8Z" fill="#f6f6f6" fill-opacity="0.29"/><path d="M249.4,296.1 L254.5,295.9 L259.6,295.4 L264.6,294.5 L269.5,293.3 L274.3,291.8 L279.1,290.1 L283.7,288.0 L288.2,285.6 L288.2,285.6 L283.4,287.1 L278.6,288.6 L273.8,290.1 L269.0,291.4 L264.2,292.7 L259.3,293.9 L254.4,295.0 L249.4,296.1Z" fill="#f6f6f6" fill-opacity="0.59"/><path d="M395.6,460.8 L398.0,458.8 L400.2,456.5 L402.2,454.1 L404.1,451.6 L405.7,448.9 L407.1,446.1 L408.3,443.2 L409.3,440.2 L409.3,440.2 L407.5,442.8 L405.8,445.4 L404.1,448.0 L402.5,450.5 L400.8,453.1 L399.1,455.6 L397.3,458.2 L395.6,460.8Z" fill="#f6f6f6" fill-opacity="0.59"/><path d="M93.9,195.3 L101.0,190.4 L108.0,185.5 L115.0,180.7 L122.0,176.0 L129.1,171.2 L136.3,166.6 L143.4,162.0 L150.6,157.3 L150.6,157.3 L143.0,161.2 L135.5,165.4 L128.2,169.8 L121.0,174.4 L114.0,179.3 L107.1,184.4 L100.4,189.7 L93.9,195.3Z" fill="#f6f6f6" fill-opacity="0.31"/><path d="M505.8,10.2 L512.2,5.2 L518.5,0.1 L524.5,-5.2 L530.5,-10.7 L536.3,-16.3 L541.9,-22.1 L547.4,-28.0 L552.8,-34.1 L552.8,-34.1 L546.6,-28.8 L540.6,-23.5 L534.6,-18.1 L528.7,-12.6 L522.9,-7.0 L517.1,-1.4 L511.4,4.4 L505.8,10.2Z" fill="#f6f6f6" fill-opacity="0.47"/><path d="M454.4,424.1 L457.7,417.5 L460.8,410.9 L463.8,404.2 L466.6,397.4 L469.3,390.6 L471.8,383.7 L474.2,376.8 L476.4,369.8 L476.4,369.8 L473.1,376.4 L470.0,383.0 L467.1,389.7 L464.2,396.5 L461.6,403.3 L459.0,410.2 L456.6,417.1 L454.4,424.1Z" fill="#f6f6f6" fill-opacity="0.59"/><path d="M455.8,350.2 L460.3,348.1 L464.6,345.6 L468.5,342.6 L472.1,339.3 L475.3,335.7 L478.2,331.7 L480.7,327.5 L482.8,322.9 L482.8,322.9 L479.8,326.9 L476.8,330.7 L473.6,334.2 L470.4,337.7 L467.0,341.0 L463.5,344.1 L459.7,347.2 L455.8,350.2Z" fill="#f6f6f6" fill-opacity="0.59"/><path d="M32.0,225.0 L38.1,222.2 L44.2,219.4 L50.3,216.5 L56.3,213.6 L62.3,210.6 L68.3,207.6 L74.3,204.5 L80.3,201.4 L80.3,201.4 L73.8,203.5 L67.5,205.9 L61.3,208.5 L55.2,211.4 L49.2,214.4 L43.3,217.7 L37.6,221.2 L32.0,225.0Z" fill="#f6f6f6" fill-opacity="0.51"/><path d="M353.0,177.8 L356.5,176.8 L359.8,175.4 L363.1,173.8 L366.1,172.0 L369.1,169.9 L371.8,167.6 L374.4,165.1 L376.7,162.3 L376.7,162.3 L373.6,164.1 L370.6,166.0 L367.7,167.9 L364.7,169.8 L361.8,171.8 L358.9,173.7 L355.9,175.7 L353.0,177.8Z" fill="#f6f6f6" fill-opacity="0.67"/><path d="M304.0,525.3 L309.7,525.3 L315.4,525.4 L321.1,525.7 L326.7,526.2 L332.3,526.9 L337.9,527.8 L343.4,528.9 L349.1,530.1 L349.1,530.1 L343.6,528.2 L338.1,526.7 L332.5,525.5 L326.8,524.7 L321.1,524.3 L315.4,524.3 L309.7,524.6 L304.0,525.3Z" fill="#f6f6f6" fill-opacity="0.67"/><path d="M133.1,423.1 L138.5,422.6 L143.9,422.1 L149.2,421.6 L154.5,421.2 L159.8,420.8 L165.2,420.4 L170.5,420.0 L175.9,419.6 L175.9,419.6 L170.5,419.0 L165.1,418.8 L159.7,418.8 L154.4,419.1 L149.0,419.7 L143.7,420.5 L138.4,421.7 L133.1,423.1Z" fill="#f6f6f6" fill-opacity="0.75"/><path d="M41.9,-7.8 L47.4,-14.6 L52.8,-21.4 L58.4,-28.0 L64.0,-34.5 L69.7,-41.0 L75.5,-47.3 L81.5,-53.6 L87.5,-59.9 L87.5,-59.9 L80.7,-54.5 L74.2,-48.6 L68.0,-42.5 L62.2,-36.1 L56.6,-29.5 L51.4,-22.5 L46.5,-15.3 L41.9,-7.8Z" fill="#f6f6f6" fill-opacity="0.52"/><path d="M132.9,95.5 L137.3,91.4 L141.7,87.5 L146.2,83.6 L150.7,79.9 L155.2,76.2 L159.8,72.5 L164.5,68.9 L169.3,65.3 L169.3,65.3 L164.0,68.2 L159.0,71.3 L154.1,74.7 L149.4,78.3 L144.9,82.2 L140.7,86.4 L136.7,90.8 L132.9,95.5Z" fill="#f6f6f6" fill-opacity="0.54"/><path d="M107.8,103.6 L110.6,96.9 L113.3,90.3 L116.0,83.6 L118.7,77.0 L121.4,70.4 L124.1,63.7 L126.8,57.1 L129.5,50.4 L129.5,50.4 L126.0,56.7 L122.8,63.2 L119.8,69.7 L116.9,76.3 L114.3,83.0 L111.9,89.8 L109.8,96.6 L107.8,103.6Z" fill="#f6f6f6" fill-opacity="0.55"/><path d="M485.3,246.8 L489.9,243.8 L494.4,240.7 L498.9,237.6 L503.4,234.4 L507.8,231.2 L512.2,228.0 L516.6,224.8 L521.0,221.4 L521.0,221.4 L516.0,223.8 L511.2,226.5 L506.5,229.4 L502.0,232.5 L497.6,235.8 L493.3,239.3 L489.2,242.9 L485.3,246.8Z" fill="#f6f6f6" fill-opacity="0.27"/><path d="M427.9,167.7 L430.6,164.8 L432.9,161.8 L435.0,158.6 L436.8,155.2 L438.3,151.7 L439.4,148.0 L440.3,144.2 L440.7,140.4 L440.7,140.4 L439.3,144.0 L437.9,147.5 L436.4,150.9 L434.8,154.3 L433.2,157.6 L431.5,160.9 L429.7,164.3 L427.9,167.7Z" fill="#f6f6f6" fill-opacity="0.28"/><path d="M360.9,138.6 L366.3,132.5 L371.4,126.3 L376.4,119.9 L381.3,113.5 L386.0,106.9 L390.6,100.2 L395.0,93.4 L399.2,86.5 L399.2,86.5 L394.3,92.9 L389.4,99.3 L384.5,105.8 L379.7,112.3 L375.0,118.8 L370.2,125.3 L365.5,131.9 L360.9,138.6Z" fill="#f6f6f6" fill-opacity="0.64"/><path d="M477.9,493.3 L486.0,493.3 L494.0,493.2 L502.0,493.2 L510.1,493.1 L518.1,493.0 L526.1,493.0 L534.1,492.9 L542.2,492.7 L542.2,492.7 L534.2,491.8 L526.1,491.2 L518.1,490.8 L510.0,490.8 L502.0,491.0 L493.9,491.5 L485.9,492.2 L477.9,493.3Z" fill="#f6f6f6" fill-opacity="0.42"/><path d="M383.9,371.7 L389.1,366.5 L394.0,361.0 L398.5,355.3 L402.8,349.4 L406.7,343.2 L410.3,336.8 L413.6,330.3 L416.5,323.5 L416.5,323.5 L412.9,329.9 L409.2,336.2 L405.3,342.3 L401.3,348.4 L397.2,354.3 L392.9,360.2 L388.5,366.0 L383.9,371.7Z" fill="#f6f6f6" fill-opacity="0.52"/><path d="M78.6,84.8 L85.8,83.2 L92.8,81.9 L99.9,80.8 L107.0,80.0 L114.2,79.4 L121.3,79.1 L128.6,79.0 L135.9,79.2 L135.9,79.2 L128.6,78.2 L121.3,77.8 L114.1,77.8 L106.9,78.2 L99.7,79.2 L92.6,80.6 L85.6,82.5 L78.6,84.8Z" fill="#f6f6f6" fill-opacity="0.72"/><path d="M-7.4,184.9 L-4.3,182.9 L-1.4,181.0 L1.6,179.3 L4.6,177.7 L7.7,176.2 L10.8,174.8 L14.1,173.5 L17.5,172.3 L17.5,172.3 L13.8,172.4 L10.3,173.0 L6.8,174.0 L3.5,175.5 L0.4,177.3 L-2.5,179.5 L-5.1,182.0 L-7.4,184.9Z" fill="#f6f6f6" fill-opacity="0.68"/><path d="M252.3,463.0 L255.8,459.2 L259.2,455.5 L262.8,451.9 L266.3,448.4 L270.0,444.9 L273.7,441.5 L277.5,438.1 L281.3,434.7 L281.3,434.7 L276.9,437.4 L272.8,440.4 L268.8,443.6 L265.1,447.1 L261.5,450.7 L258.2,454.6 L255.1,458.7 L252.3,463.0Z" fill="#f6f6f6" fill-opacity="0.40"/><path d="M224.2,407.5 L226.2,403.2 L227.8,398.7 L229.0,394.2 L229.9,389.6 L230.3,385.0 L230.4,380.3 L230.1,375.6 L229.4,370.9 L229.4,370.9 L229.3,375.6 L229.1,380.3 L228.7,384.8 L228.1,389.4 L227.4,393.9 L226.5,398.4 L225.4,402.9 L224.2,407.5Z" fill="#f6f6f6" fill-opacity="0.73"/><path d="M423.8,141.1 L427.7,141.5 L431.6,141.8 L435.4,142.3 L439.3,142.8 L443.1,143.3 L446.9,143.9 L450.7,144.6 L454.6,145.3 L454.6,145.3 L450.9,143.9 L447.1,142.8 L443.3,141.9 L439.5,141.3 L435.6,140.9 L431.6,140.7 L427.7,140.8 L423.8,141.1Z" fill="#f6f6f6" fill-opacity="0.54"/><path d="M284.0,216.2 L290.0,217.4 L296.0,218.2 L302.0,218.7 L308.1,218.9 L314.1,218.7 L320.2,218.2 L326.2,217.4 L332.2,216.2 L332.2,216.2 L326.1,216.7 L320.1,217.0 L314.1,217.2 L308.1,217.3 L302.1,217.2 L296.1,217.0 L290.1,216.7 L284.0,216.2Z" fill="#f6f6f6" fill-opacity="0.33"/><path d="M71.4,472.3 L74.9,468.8 L78.0,465.0 L80.7,461.0 L83.1,456.7 L85.2,452.3 L86.9,447.8 L88.2,443.1 L89.0,438.2 L89.0,438.2 L87.1,442.7 L85.2,447.1 L83.2,451.4 L81.1,455.7 L78.8,459.9 L76.5,464.0 L74.0,468.1 L71.4,472.3Z" fill="#f6f6f6" fill-opacity="0.72"/><path d="M341.8,-14.6 L345.9,-18.7 L349.7,-22.8 L353.5,-27.1 L357.1,-31.5 L360.7,-36.0 L364.1,-40.6 L367.4,-45.2 L370.5,-50.0 L370.5,-50.0 L366.8,-45.7 L363.1,-41.4 L359.4,-37.0 L355.8,-32.6 L352.2,-28.2 L348.7,-23.7 L345.2,-19.2 L341.8,-14.6Z" fill="#f6f6f6" fill-opacity="0.71"/><path d="M59.3,410.4 L63.7,405.8 L68.1,401.3 L72.7,397.1 L77.4,393.0 L82.2,389.0 L87.1,385.2 L92.2,381.6 L97.5,378.0 L97.5,378.0 L91.7,380.7 L86.2,383.9 L80.9,387.4 L75.9,391.3 L71.3,395.6 L66.9,400.2 L62.9,405.1 L59.3,410.4Z" fill="#f6f6f6" fill-opacity="0.54"/><path d="M28.1,311.3 L30.9,308.6 L33.5,305.7 L35.9,302.8 L38.3,299.7 L40.4,296.6 L42.5,293.4 L44.4,290.1 L46.2,286.6 L46.2,286.6 L43.7,289.6 L41.3,292.6 L39.0,295.6 L36.8,298.6 L34.5,301.7 L32.4,304.9 L30.2,308.0 L28.1,311.3Z" fill="#f6f6f6" fill-opacity="0.49"/><path d="M94.8,316.2 L99.9,310.5 L104.7,304.7 L109.5,298.8 L114.0,292.8 L118.4,286.6 L122.7,280.4 L126.8,274.0 L130.7,267.5 L130.7,267.5 L125.9,273.3 L121.1,279.2 L116.5,285.2 L112.0,291.2 L107.5,297.4 L103.2,303.6 L98.9,309.8 L94.8,316.2Z" fill="#f6f6f6" fill-opacity="0.43"/><path d="M59.4,242.0 L65.5,237.8 L71.6,233.6 L77.7,229.7 L83.9,226.0 L90.3,222.4 L96.7,218.9 L103.2,215.6 L109.9,212.4 L109.9,212.4 L102.8,214.7 L96.0,217.4 L89.3,220.5 L82.8,224.1 L76.6,228.0 L70.6,232.3 L64.9,236.9 L59.4,242.0Z" fill="#f6f6f6" fill-opacity="0.33"/><path d="M143.9,247.1 L149.3,244.2 L154.4,240.9 L159.1,237.3 L163.6,233.3 L167.8,229.1 L171.7,224.4 L175.2,219.5 L178.3,214.3 L178.3,214.3 L174.4,219.0 L170.5,223.4 L166.4,227.7 L162.2,231.8 L157.9,235.8 L153.4,239.7 L148.7,243.4 L143.9,247.1Z" fill="#f6f6f6" fill-opacity="0.56"/><path d="M246.1,288.0 L254.5,287.6 L262.9,286.8 L271.2,285.8 L279.5,284.4 L287.7,282.7 L295.9,280.7 L304.0,278.4 L312.0,275.7 L312.0,275.7 L303.7,277.2 L295.4,278.8 L287.2,280.3 L279.0,281.8 L270.8,283.4 L262.6,284.9 L254.3,286.4 L246.1,288.0Z" fill="#f6f6f6" fill-opacity="0.61"/><path d="M47.2,472.7 L48.7,470.5 L50.2,468.5 L51.9,466.9 L53.6,465.4 L55.4,464.0 L57.4,462.8 L59.6,461.7 L62.1,460.7 L62.1,460.7 L59.4,460.9 L56.8,461.5 L54.5,462.5 L52.4,463.9 L50.6,465.7 L49.1,467.7 L48.0,470.1 L47.2,472.7Z" fill="#f6f6f6" fill-opacity="0.65"/><path d="M480.0,276.0 L485.8,277.0 L491.5,277.6 L497.3,277.9 L503.1,277.9 L508.9,277.5 L514.6,276.8 L520.4,275.7 L526.0,274.3 L526.0,274.3 L520.2,274.9 L514.5,275.4 L508.8,275.8 L503.0,276.1 L497.3,276.2 L491.6,276.3 L485.8,276.2 L480.0,276.0Z" fill="#f6f6f6" fill-opacity="0.74"/><path d="M186.4,21.8 L190.4,15.8 L194.5,10.0 L198.5,4.2 L202.7,-1.5 L206.9,-7.1 L211.2,-12.7 L215.6,-18.3 L220.0,-23.9 L220.0,-23.9 L214.7,-19.1 L209.7,-14.0 L205.0,-8.6 L200.6,-3.0 L196.5,2.9 L192.8,9.0 L189.4,15.2 L186.4,21.8Z" fill="#f6f6f6" fill-opacity="0.55"/><path d="M508.2,116.2 L510.3,113.7 L512.3,111.1 L514.2,108.5 L516.1,105.9 L517.9,103.2 L519.7,100.5 L521.5,97.8 L523.1,94.9 L523.1,94.9 L520.7,97.1 L518.4,99.5 L516.3,102.0 L514.3,104.6 L512.5,107.4 L510.9,110.2 L509.5,113.1 L508.2,116.2Z" fill="#f6f6f6" fill-opacity="0.64"/><path d="M13.1,20.3 L14.5,18.2 L15.9,16.4 L17.4,14.7 L18.9,13.2 L20.6,11.9 L22.5,10.7 L24.5,9.6 L26.8,8.5 L26.8,8.5 L24.3,8.8 L21.9,9.5 L19.8,10.6 L17.8,12.0 L16.2,13.7 L14.8,15.6 L13.8,17.8 L13.1,20.3Z" fill="#f6f6f6" fill-opacity="0.59"/><path d="M408.3,19.9 L415.8,17.8 L423.4,15.5 L430.8,13.1 L438.3,10.6 L445.7,8.1 L453.1,5.5 L460.5,2.9 L467.9,0.1 L467.9,0.1 L460.3,2.1 L452.7,4.3 L445.2,6.7 L437.8,9.1 L430.3,11.6 L423.0,14.3 L415.6,17.0 L408.3,19.9Z" fill="#f6f6f6" fill-opacity="0.43"/><path d="M199.5,285.2 L202.0,281.7 L204.4,278.2 L206.9,274.7 L209.3,271.3 L211.9,267.9 L214.4,264.6 L217.0,261.2 L219.6,257.8 L219.6,257.8 L216.2,260.4 L213.0,263.4 L210.1,266.5 L207.4,269.9 L205.0,273.5 L202.9,277.2 L201.0,281.1 L199.5,285.2Z" fill="#f6f6f6" fill-opacity="0.62"/><path d="M134.8,164.7 L135.9,158.7 L137.0,152.7 L138.4,146.9 L140.0,141.2 L141.8,135.5 L143.8,129.8 L146.1,124.2 L148.5,118.6 L148.5,118.6 L145.3,123.8 L142.5,129.3 L140.1,134.9 L138.2,140.6 L136.7,146.5 L135.6,152.5 L135.0,158.6 L134.8,164.7Z" fill="#f6f6f6" fill-opacity="0.64"/><path d="M230.4,89.1 L234.0,85.4 L237.5,81.7 L241.0,78.0 L244.4,74.3 L247.8,70.6 L251.2,66.8 L254.6,63.0 L258.0,59.2 L258.0,59.2 L253.9,62.2 L249.9,65.5 L246.2,69.0 L242.6,72.7 L239.3,76.5 L236.1,80.5 L233.1,84.7 L230.4,89.1Z" fill="#f6f6f6" fill-opacity="0.34"/><path d="M178.8,324.6 L182.1,321.4 L185.2,318.1 L188.3,314.7 L191.3,311.3 L194.2,307.8 L197.0,304.2 L199.8,300.5 L202.5,296.8 L202.5,296.8 L199.1,300.0 L195.9,303.2 L192.8,306.6 L189.8,310.0 L186.9,313.6 L184.1,317.2 L181.4,320.8 L178.8,324.6Z" fill="#f6f6f6" fill-opacity="0.68"/><path d="M297.6,404.3 L300.9,400.7 L304.2,397.5 L307.6,394.4 L311.2,391.6 L315.0,389.0 L318.9,386.7 L323.0,384.5 L327.4,382.5 L327.4,382.5 L322.8,383.9 L318.4,385.7 L314.3,387.9 L310.4,390.4 L306.7,393.4 L303.4,396.7 L300.3,400.3 L297.6,404.3Z" fill="#f6f6f6" fill-opacity="0.30"/><path d="M96.3,288.0 L103.3,287.3 L110.2,286.5 L117.2,285.7 L124.1,284.9 L131.0,284.1 L138.0,283.3 L144.9,282.5 L151.9,281.7 L151.9,281.7 L144.9,281.4 L137.8,281.5 L130.8,281.9 L123.8,282.5 L116.9,283.4 L110.0,284.7 L103.1,286.2 L96.3,288.0Z" fill="#f6f6f6" fill-opacity="0.35"/><path d="M93.9,175.8 L94.2,167.9 L94.7,160.1 L95.3,152.4 L96.1,144.6 L97.1,136.9 L98.2,129.2 L99.5,121.5 L101.0,113.8 L101.0,113.8 L98.6,121.3 L96.7,128.9 L95.2,136.6 L94.1,144.4 L93.4,152.2 L93.1,160.0 L93.3,167.9 L93.9,175.8Z" fill="#f6f6f6" fill-opacity="0.69"/><path d="M124.6,195.2 L132.3,195.5 L140.1,195.8 L147.8,196.2 L155.5,196.7 L163.2,197.2 L170.8,197.8 L178.6,198.5 L186.3,199.2 L186.3,199.2 L178.7,197.4 L171.1,196.0 L163.4,195.0 L155.6,194.3 L147.9,194.0 L140.1,194.0 L132.3,194.4 L124.6,195.2Z" fill="#f6f6f6" fill-opacity="0.55"/><path d="M407.3,111.7 L413.1,112.5 L418.8,112.9 L424.6,112.9 L430.4,112.6 L436.1,111.9 L441.8,110.9 L447.4,109.5 L452.9,107.6 L452.9,107.6 L447.2,108.7 L441.5,109.6 L435.9,110.3 L430.2,110.9 L424.5,111.3 L418.8,111.6 L413.1,111.7 L407.3,111.7Z" fill="#f6f6f6" fill-opacity="0.33"/><path d="M311.9,474.2 L316.6,470.4 L321.2,466.4 L325.5,462.1 L329.6,457.6 L333.5,453.0 L337.1,448.1 L340.6,443.1 L343.7,437.9 L343.7,437.9 L340.0,442.7 L336.2,447.4 L332.4,452.1 L328.5,456.7 L324.5,461.1 L320.4,465.6 L316.2,469.9 L311.9,474.2Z" fill="#f6f6f6" fill-opacity="0.51"/><path d="M386.1,463.4 L392.4,458.2 L398.5,452.8 L404.5,447.2 L410.3,441.3 L415.8,435.3 L421.2,429.1 L426.3,422.8 L431.3,416.2 L431.3,416.2 L425.8,422.3 L420.3,428.3 L414.7,434.3 L409.1,440.2 L403.4,446.1 L397.7,451.9 L391.9,457.7 L386.1,463.4Z" fill="#f6f6f6" fill-opacity="0.56"/><path d="M200.2,254.6 L204.6,248.5 L208.9,242.3 L213.2,236.0 L217.3,229.8 L221.4,223.5 L225.4,217.1 L229.3,210.7 L233.2,204.2 L233.2,204.2 L228.5,210.1 L224.1,216.2 L219.7,222.3 L215.5,228.6 L211.5,235.0 L207.6,241.4 L203.8,247.9 L200.2,254.6Z" fill="#f6f6f6" fill-opacity="0.35"/><path d="M46.0,298.9 L51.3,295.9 L56.5,293.0 L61.7,290.2 L66.9,287.4 L72.2,284.7 L77.4,281.9 L82.8,279.3 L88.1,276.6 L88.1,276.6 L82.4,278.4 L76.8,280.5 L71.3,282.9 L65.9,285.6 L60.7,288.5 L55.6,291.7 L50.7,295.1 L46.0,298.9Z" fill="#f6f6f6" fill-opacity="0.72"/><path d="M106.0,37.6 L107.8,35.6 L109.5,33.5 L111.1,31.4 L112.7,29.2 L114.2,27.1 L115.7,24.8 L117.1,22.5 L118.4,20.2 L118.4,20.2 L116.3,21.8 L114.3,23.7 L112.4,25.7 L110.8,27.9 L109.3,30.1 L108.0,32.5 L106.9,35.0 L106.0,37.6Z" fill="#acacac" fill-opacity="0.76"/><path d="M98.5,276.1 L100.2,273.5 L101.7,271.0 L103.4,268.6 L105.0,266.3 L106.7,264.0 L108.5,261.7 L110.4,259.4 L112.4,257.1 L112.4,257.1 L109.7,258.6 L107.2,260.4 L105.0,262.5 L103.1,264.9 L101.5,267.4 L100.1,270.1 L99.1,273.0 L98.5,276.1Z" fill="#acacac" fill-opacity="0.76"/><path d="M405.1,87.3 L411.4,84.0 L417.5,80.4 L423.3,76.5 L429.0,72.3 L434.4,67.8 L439.6,63.1 L444.6,58.0 L449.3,52.7 L449.3,52.7 L444.1,57.5 L438.8,62.2 L433.5,66.7 L428.1,71.1 L422.5,75.3 L416.8,79.4 L411.0,83.4 L405.1,87.3Z" fill="#acacac" fill-opacity="0.74"/><path d="M336.9,259.2 L339.9,258.5 L342.8,257.4 L345.3,255.9 L347.6,254.0 L349.6,251.8 L351.2,249.4 L352.5,246.6 L353.3,243.6 L353.3,243.6 L351.7,246.2 L349.9,248.5 L348.1,250.6 L346.2,252.5 L344.2,254.3 L342.0,256.0 L339.5,257.6 L336.9,259.2Z" fill="#acacac" fill-opacity="0.73"/><path d="M462.6,295.7 L465.3,290.8 L467.8,285.9 L470.3,280.9 L472.8,276.0 L475.2,271.0 L477.6,266.0 L480.0,260.9 L482.2,255.8 L482.2,255.8 L479.2,260.5 L476.3,265.3 L473.6,270.2 L471.1,275.1 L468.7,280.1 L466.5,285.3 L464.4,290.4 L462.6,295.7Z" fill="#acacac" fill-opacity="0.59"/><path d="M142.6,427.8 L145.8,422.3 L149.0,416.9 L152.3,411.5 L155.6,406.1 L158.9,400.8 L162.3,395.4 L165.7,390.1 L169.1,384.8 L169.1,384.8 L164.9,389.6 L161.0,394.6 L157.4,399.8 L153.9,405.1 L150.7,410.6 L147.7,416.2 L145.0,421.9 L142.6,427.8Z" fill="#acacac" fill-opacity="0.56"/><path d="M509.5,88.5 L513.3,83.3 L517.1,78.2 L520.8,73.1 L524.7,68.0 L528.5,63.0 L532.3,58.0 L536.2,52.9 L540.2,47.9 L540.2,47.9 L535.5,52.2 L531.0,56.8 L526.8,61.7 L522.8,66.7 L519.1,71.9 L515.6,77.2 L512.4,82.7 L509.5,88.5Z" fill="#acacac" fill-opacity="0.47"/><path d="M276.9,478.3 L279.8,475.7 L282.4,473.0 L284.8,470.0 L286.9,466.9 L288.8,463.6 L290.4,460.2 L291.8,456.6 L292.8,453.0 L292.8,453.0 L291.1,456.3 L289.3,459.6 L287.4,462.9 L285.5,466.0 L283.5,469.1 L281.4,472.2 L279.2,475.2 L276.9,478.3Z" fill="#acacac" fill-opacity="0.60"/><path d="M75.0,233.4 L82.5,230.2 L89.8,226.5 L96.8,222.3 L103.6,217.8 L110.0,212.9 L116.2,207.6 L122.0,201.9 L127.5,195.8 L127.5,195.8 L121.2,201.0 L115.0,206.1 L108.6,211.0 L102.1,215.7 L95.5,220.3 L88.8,224.8 L82.0,229.1 L75.0,233.4Z" fill="#acacac" fill-opacity="0.66"/><path d="M134.1,512.2 L142.5,511.8 L150.8,511.2 L159.2,510.3 L167.5,509.3 L175.8,508.1 L184.1,506.7 L192.3,505.1 L200.5,503.2 L200.5,503.2 L192.2,504.3 L183.9,505.4 L175.6,506.5 L167.3,507.6 L159.0,508.7 L150.7,509.8 L142.4,511.0 L134.1,512.2Z" fill="#acacac" fill-opacity="0.71"/><path d="M216.3,55.9 L219.9,53.1 L223.6,50.5 L227.3,48.3 L231.1,46.2 L235.1,44.4 L239.2,42.8 L243.4,41.5 L247.9,40.3 L247.9,40.3 L243.3,40.7 L238.8,41.7 L234.5,43.0 L230.4,44.8 L226.5,47.0 L222.9,49.6 L219.4,52.5 L216.3,55.9Z" fill="#acacac" fill-opacity="0.30"/><path d="M173.1,140.6 L177.5,138.0 L181.9,135.5 L186.3,133.2 L190.8,131.0 L195.3,128.9 L199.8,126.9 L204.5,125.1 L209.2,123.3 L209.2,123.3 L204.3,124.4 L199.5,125.9 L194.7,127.6 L190.1,129.7 L185.6,132.0 L181.3,134.6 L177.1,137.4 L173.1,140.6Z" fill="#acacac" fill-opacity="0.31"/><path d="M339.6,63.2 L343.6,62.0 L347.2,60.2 L350.6,58.1 L353.7,55.6 L356.4,52.7 L358.8,49.5 L360.8,46.0 L362.3,42.2 L362.3,42.2 L360.0,45.5 L357.5,48.6 L355.0,51.5 L352.3,54.1 L349.5,56.6 L346.4,58.9 L343.1,61.1 L339.6,63.2Z" fill="#acacac" fill-opacity="0.34"/><path d="M197.8,524.1 L200.3,519.7 L202.9,515.4 L205.6,511.4 L208.6,507.5 L211.7,503.8 L215.0,500.2 L218.6,496.7 L222.3,493.3 L222.3,493.3 L218.1,496.1 L214.1,499.2 L210.5,502.7 L207.2,506.4 L204.3,510.5 L201.8,514.8 L199.6,519.3 L197.8,524.1Z" fill="#acacac" fill-opacity="0.50"/><path d="M421.4,255.1 L423.7,251.9 L425.9,248.8 L428.2,245.8 L430.6,242.9 L432.9,240.0 L435.4,237.1 L438.0,234.2 L440.6,231.3 L440.6,231.3 L437.2,233.4 L434.1,235.8 L431.2,238.4 L428.7,241.3 L426.4,244.5 L424.4,247.8 L422.7,251.4 L421.4,255.1Z" fill="#acacac" fill-opacity="0.40"/><path d="M8.1,491.3 L12.5,493.7 L17.1,495.6 L21.8,497.1 L26.7,498.1 L31.6,498.7 L36.5,498.9 L41.5,498.7 L46.5,497.9 L46.5,497.9 L41.5,497.6 L36.6,497.1 L31.8,496.6 L27.1,495.8 L22.3,494.9 L17.6,493.9 L12.9,492.7 L8.1,491.3Z" fill="#acacac" fill-opacity="0.62"/><path d="M242.9,32.0 L250.7,29.5 L258.3,26.5 L265.7,23.1 L272.9,19.3 L279.9,15.1 L286.6,10.5 L293.1,5.5 L299.3,0.2 L299.3,0.2 L292.5,4.7 L285.7,9.1 L278.8,13.3 L271.8,17.4 L264.7,21.2 L257.6,25.0 L250.3,28.5 L242.9,32.0Z" fill="#acacac" fill-opacity="0.46"/><path d="M321.4,429.1 L326.8,425.0 L332.1,420.9 L337.4,416.8 L342.8,412.8 L348.1,408.8 L353.4,404.7 L358.8,400.7 L364.2,396.7 L364.2,396.7 L358.2,399.8 L352.4,403.2 L346.7,406.8 L341.2,410.7 L335.9,414.9 L330.9,419.4 L326.0,424.1 L321.4,429.1Z" fill="#acacac" fill-opacity="0.76"/><path d="M495.6,509.9 L503.1,506.8 L510.7,503.9 L518.3,501.1 L525.9,498.4 L533.5,495.9 L541.3,493.6 L549.1,491.3 L556.9,489.2 L556.9,489.2 L548.8,490.3 L540.8,491.9 L532.9,494.0 L525.2,496.4 L517.5,499.2 L510.1,502.3 L502.7,505.9 L495.6,509.9Z" fill="#acacac" fill-opacity="0.78"/><path d="M69.6,330.3 L77.9,330.4 L86.2,330.6 L94.4,330.9 L102.7,331.2 L110.9,331.6 L119.1,332.0 L127.4,332.5 L135.7,333.0 L135.7,333.0 L127.5,331.4 L119.3,330.1 L111.1,329.2 L102.8,328.7 L94.5,328.5 L86.1,328.7 L77.8,329.3 L69.6,330.3Z" fill="#acacac" fill-opacity="0.28"/><path d="M445.4,44.6 L453.3,45.6 L461.2,46.5 L469.2,47.1 L477.1,47.7 L485.1,48.1 L493.0,48.4 L501.0,48.5 L508.9,48.5 L508.9,48.5 L501.0,47.8 L493.1,47.2 L485.1,46.6 L477.2,46.1 L469.3,45.6 L461.3,45.2 L453.4,44.9 L445.4,44.6Z" fill="#acacac" fill-opacity="0.74"/><path d="M156.1,471.4 L161.8,470.0 L167.4,468.9 L173.0,468.0 L178.5,467.3 L184.1,466.8 L189.8,466.6 L195.5,466.6 L201.3,466.7 L201.3,466.7 L195.5,465.6 L189.8,465.0 L184.0,464.8 L178.3,465.2 L172.6,466.0 L167.0,467.3 L161.5,469.1 L156.1,471.4Z" fill="#acacac" fill-opacity="0.30"/><path d="M439.2,315.4 L444.6,310.5 L449.8,305.4 L454.8,300.3 L459.8,295.0 L464.7,289.6 L469.4,284.1 L474.0,278.5 L478.5,272.8 L478.5,272.8 L473.2,277.8 L468.1,282.9 L463.0,288.1 L458.1,293.4 L453.2,298.7 L448.4,304.2 L443.7,309.7 L439.2,315.4Z" fill="#acacac" fill-opacity="0.29"/><path d="M26.0,279.8 L29.6,277.3 L33.2,274.9 L36.7,272.6 L40.3,270.3 L43.8,268.1 L47.5,265.9 L51.1,263.7 L54.9,261.4 L54.9,261.4 L50.6,262.6 L46.6,264.1 L42.7,266.0 L38.9,268.2 L35.3,270.6 L32.0,273.4 L28.9,276.4 L26.0,279.8Z" fill="#acacac" fill-opacity="0.53"/><path d="M41.6,322.4 L44.3,318.0 L46.7,313.5 L48.8,308.8 L50.5,304.0 L51.9,299.1 L52.9,294.1 L53.7,289.0 L54.0,283.8 L54.0,283.8 L53.0,288.9 L51.8,293.8 L50.6,298.7 L49.1,303.5 L47.5,308.3 L45.7,313.0 L43.7,317.7 L41.6,322.4Z" fill="#acacac" fill-opacity="0.68"/><path d="M84.7,147.2 L92.1,145.7 L99.4,144.4 L106.7,143.2 L114.1,142.2 L121.4,141.3 L128.8,140.6 L136.3,140.0 L143.7,139.6 L143.7,139.6 L136.2,139.3 L128.7,139.4 L121.3,139.8 L113.9,140.6 L106.5,141.7 L99.1,143.2 L91.9,145.0 L84.7,147.2Z" fill="#acacac" fill-opacity="0.73"/><path d="M242.9,167.1 L248.6,163.1 L254.3,159.3 L260.2,155.7 L266.1,152.4 L272.2,149.2 L278.4,146.3 L284.7,143.6 L291.2,141.0 L291.2,141.0 L284.4,142.7 L277.8,144.9 L271.3,147.5 L265.1,150.6 L259.2,154.1 L253.4,158.0 L248.0,162.3 L242.9,167.1Z" fill="#acacac" fill-opacity="0.44"/><path d="M360.2,247.2 L365.2,241.3 L370.1,235.3 L375.0,229.3 L379.9,223.2 L384.7,217.2 L389.4,211.1 L394.2,204.9 L398.9,198.7 L398.9,198.7 L393.3,204.2 L387.9,209.8 L382.8,215.6 L377.8,221.6 L373.1,227.8 L368.6,234.1 L364.2,240.6 L360.2,247.2Z" fill="#acacac" fill-opacity="0.68"/><path d="M339.6,316.1 L344.9,315.1 L350.1,313.7 L355.1,311.8 L360.0,309.5 L364.6,306.7 L369.0,303.6 L373.1,300.1 L376.9,296.3 L376.9,296.3 L372.4,299.3 L367.9,302.1 L363.4,304.8 L358.8,307.3 L354.2,309.7 L349.4,311.9 L344.6,314.1 L339.6,316.1Z" fill="#acacac" fill-opacity="0.44"/><path d="M305.8,224.0 L310.0,222.2 L314.2,220.1 L318.2,217.9 L322.2,215.4 L326.0,212.8 L329.7,210.1 L333.3,207.1 L336.7,204.0 L336.7,204.0 L332.8,206.6 L329.0,209.1 L325.2,211.7 L321.4,214.2 L317.5,216.7 L313.6,219.1 L309.7,221.6 L305.8,224.0Z" fill="#acacac" fill-opacity="0.35"/><path d="M409.7,78.6 L411.1,72.8 L412.6,67.0 L414.0,61.1 L415.5,55.4 L417.0,49.6 L418.5,43.8 L420.0,38.0 L421.5,32.2 L421.5,32.2 L419.3,37.8 L417.4,43.4 L415.6,49.2 L414.0,55.0 L412.6,60.8 L411.4,66.7 L410.4,72.6 L409.7,78.6Z" fill="#acacac" fill-opacity="0.60"/><path d="M477.1,79.7 L481.2,78.3 L485.3,77.0 L489.3,76.0 L493.3,75.2 L497.4,74.5 L501.5,74.1 L505.8,73.9 L510.2,73.8 L510.2,73.8 L505.9,72.7 L501.5,72.2 L497.2,72.2 L492.9,72.7 L488.7,73.7 L484.6,75.2 L480.8,77.2 L477.1,79.7Z" fill="#acacac" fill-opacity="0.29"/><path d="M405.5,424.9 L407.0,419.0 L408.3,413.1 L409.5,407.1 L410.5,401.2 L411.3,395.2 L412.1,389.2 L412.6,383.2 L413.0,377.1 L413.0,377.1 L411.5,383.0 L410.2,388.9 L409.0,394.8 L408.0,400.8 L407.1,406.8 L406.4,412.8 L405.8,418.8 L405.5,424.9Z" fill="#acacac" fill-opacity="0.58"/><path d="M494.2,45.2 L501.3,45.9 L508.4,46.4 L515.5,46.7 L522.6,46.9 L529.7,46.8 L536.8,46.5 L543.9,46.1 L550.9,45.4 L550.9,45.4 L543.8,45.3 L536.7,45.2 L529.7,45.2 L522.6,45.1 L515.5,45.1 L508.4,45.1 L501.3,45.1 L494.2,45.2Z" fill="#acacac" fill-opacity="0.71"/><path d="M196.1,310.4 L197.6,306.3 L199.1,302.3 L200.6,298.3 L202.2,294.4 L203.8,290.5 L205.6,286.7 L207.4,282.8 L209.2,278.9 L209.2,278.9 L206.5,282.3 L204.1,285.9 L202.0,289.7 L200.2,293.6 L198.7,297.6 L197.5,301.8 L196.6,306.0 L196.1,310.4Z" fill="#acacac" fill-opacity="0.45"/><path d="M457.4,201.0 L461.0,199.0 L464.5,196.9 L468.0,194.8 L471.5,192.7 L475.0,190.6 L478.4,188.4 L481.9,186.2 L485.3,184.0 L485.3,184.0 L481.5,185.6 L477.8,187.4 L474.2,189.3 L470.7,191.3 L467.2,193.6 L463.8,195.9 L460.5,198.4 L457.4,201.0Z" fill="#acacac" fill-opacity="0.29"/><path d="M348.3,319.0 L353.9,315.9 L359.4,312.8 L364.9,309.8 L370.5,307.0 L376.1,304.2 L381.8,301.5 L387.5,298.9 L393.4,296.4 L393.4,296.4 L387.1,297.8 L381.1,299.7 L375.1,302.0 L369.4,304.7 L363.8,307.7 L358.4,311.1 L353.2,314.9 L348.3,319.0Z" fill="#acacac" fill-opacity="0.32"/><path d="M468.5,313.0 L470.5,309.5 L472.6,306.2 L474.6,302.9 L476.7,299.6 L478.9,296.4 L481.1,293.2 L483.3,290.0 L485.7,286.7 L485.7,286.7 L482.5,289.2 L479.6,292.0 L477.0,295.0 L474.7,298.3 L472.6,301.7 L470.9,305.3 L469.5,309.1 L468.5,313.0Z" fill="#acacac" fill-opacity="0.76"/><path d="M59.7,112.0 L63.2,111.6 L66.5,110.9 L69.7,109.9 L72.8,108.5 L75.7,106.8 L78.5,104.8 L81.0,102.6 L83.4,100.0 L83.4,100.0 L80.5,101.8 L77.6,103.5 L74.7,105.1 L71.9,106.7 L69.0,108.1 L66.0,109.4 L62.9,110.7 L59.7,112.0Z" fill="#acacac" fill-opacity="0.63"/><path d="M119.9,269.3 L121.2,267.1 L122.4,265.0 L123.7,262.9 L125.0,260.9 L126.4,258.9 L127.8,256.9 L129.2,254.9 L130.8,252.9 L130.8,252.9 L128.7,254.4 L126.9,256.2 L125.3,258.1 L123.8,260.1 L122.5,262.2 L121.5,264.5 L120.6,266.8 L119.9,269.3Z" fill="#acacac" fill-opacity="0.34"/><path d="M134.1,470.5 L140.5,472.5 L146.9,473.9 L153.4,474.8 L160.0,475.3 L166.6,475.2 L173.1,474.7 L179.7,473.8 L186.1,472.3 L186.1,472.3 L179.5,472.7 L173.0,473.0 L166.5,473.1 L160.1,473.0 L153.6,472.7 L147.2,472.2 L140.7,471.4 L134.1,470.5Z" fill="#acacac" fill-opacity="0.74"/><path d="M348.6,378.9 L351.9,379.9 L355.2,380.5 L358.5,380.7 L361.8,380.6 L365.1,380.2 L368.3,379.4 L371.5,378.2 L374.5,376.7 L374.5,376.7 L371.2,377.6 L368.0,378.3 L364.8,378.8 L361.7,379.1 L358.5,379.3 L355.2,379.4 L352.0,379.2 L348.6,378.9Z" fill="#acacac" fill-opacity="0.53"/><path d="M444.5,121.7 L450.9,117.1 L457.2,112.4 L463.5,107.8 L469.9,103.2 L476.2,98.5 L482.5,93.9 L488.9,89.3 L495.3,84.7 L495.3,84.7 L488.4,88.6 L481.7,92.7 L475.2,97.1 L468.7,101.6 L462.4,106.4 L456.3,111.3 L450.3,116.4 L444.5,121.7Z" fill="#acacac" fill-opacity="0.48"/><path d="M445.5,-8.7 L447.3,-11.6 L448.7,-14.7 L449.7,-17.9 L450.4,-21.1 L450.8,-24.4 L450.7,-27.8 L450.3,-31.2 L449.5,-34.5 L449.5,-34.5 L449.5,-31.1 L449.4,-27.8 L449.2,-24.6 L448.8,-21.4 L448.2,-18.2 L447.5,-15.1 L446.6,-11.9 L445.5,-8.7Z" fill="#acacac" fill-opacity="0.71"/><path d="M233.6,376.1 L241.6,372.6 L249.4,368.7 L257.2,364.6 L264.7,360.2 L272.1,355.6 L279.4,350.6 L286.5,345.5 L293.3,340.0 L293.3,340.0 L285.8,344.5 L278.3,349.0 L270.9,353.5 L263.4,358.0 L256.0,362.5 L248.5,367.0 L241.0,371.5 L233.6,376.1Z" fill="#acacac" fill-opacity="0.76"/><path d="M430.1,439.5 L436.5,439.2 L442.8,438.4 L449.0,437.2 L455.1,435.6 L461.1,433.6 L467.0,431.1 L472.7,428.3 L478.1,425.0 L478.1,425.0 L472.2,427.4 L466.3,429.6 L460.4,431.7 L454.5,433.5 L448.5,435.3 L442.5,436.8 L436.3,438.2 L430.1,439.5Z" fill="#acacac" fill-opacity="0.44"/><path d="M299.0,1.4 L306.8,0.7 L314.6,-0.3 L322.3,-1.6 L330.0,-3.2 L337.6,-5.0 L345.2,-7.0 L352.7,-9.4 L360.1,-12.0 L360.1,-12.0 L352.4,-10.5 L344.8,-8.9 L337.1,-7.2 L329.5,-5.6 L321.9,-3.9 L314.2,-2.2 L306.6,-0.4 L299.0,1.4Z" fill="#acacac" fill-opacity="0.44"/><path d="M160.6,439.7 L165.1,433.0 L169.3,426.2 L173.3,419.3 L177.1,412.2 L180.7,405.1 L184.0,397.8 L187.1,390.4 L190.0,382.9 L190.0,382.9 L186.3,390.0 L182.6,397.1 L178.9,404.2 L175.2,411.2 L171.6,418.3 L167.9,425.4 L164.3,432.5 L160.6,439.7Z" fill="#acacac" fill-opacity="0.64"/><path d="M504.2,175.1 L509.0,172.4 L513.7,169.5 L518.3,166.5 L522.9,163.4 L527.3,160.2 L531.7,156.9 L536.0,153.5 L540.2,149.9 L540.2,149.9 L535.5,152.8 L530.9,155.8 L526.4,158.9 L521.9,162.0 L517.4,165.2 L513.0,168.4 L508.6,171.7 L504.2,175.1Z" fill="#acacac" fill-opacity="0.59"/><path d="M18.7,410.8 L21.4,408.8 L23.6,406.5 L25.5,403.9 L26.9,401.1 L27.8,398.1 L28.3,395.0 L28.4,391.8 L27.9,388.5 L27.9,388.5 L27.4,391.8 L26.8,394.8 L26.0,397.6 L25.0,400.4 L23.8,403.0 L22.4,405.6 L20.7,408.2 L18.7,410.8Z" fill="#acacac" fill-opacity="0.71"/><path d="M428.1,323.7 L434.5,320.6 L440.9,317.6 L447.4,315.0 L453.9,312.5 L460.6,310.3 L467.3,308.3 L474.1,306.6 L481.1,305.1 L481.1,305.1 L474.0,305.9 L467.0,307.2 L460.1,308.9 L453.4,311.0 L446.8,313.6 L440.4,316.6 L434.2,319.9 L428.1,323.7Z" fill="#acacac" fill-opacity="0.53"/><path d="M452.7,392.5 L457.5,392.3 L462.3,391.9 L467.0,391.2 L471.7,390.4 L476.4,389.4 L481.1,388.2 L485.6,386.8 L490.2,385.2 L490.2,385.2 L485.4,385.9 L480.7,386.8 L476.0,387.6 L471.4,388.5 L466.7,389.5 L462.0,390.4 L457.4,391.4 L452.7,392.5Z" fill="#acacac" fill-opacity="0.30"/><path d="M380.5,455.4 L387.0,451.8 L393.4,448.0 L399.6,444.0 L405.7,439.8 L411.6,435.4 L417.3,430.7 L423.0,425.9 L428.4,420.9 L428.4,420.9 L422.5,425.3 L416.6,429.8 L410.7,434.1 L404.7,438.5 L398.7,442.8 L392.7,447.0 L386.6,451.2 L380.5,455.4Z" fill="#acacac" fill-opacity="0.51"/><path d="M451.0,493.4 L455.5,491.3 L459.8,489.1 L464.1,486.6 L468.3,484.0 L472.3,481.2 L476.2,478.2 L480.0,475.1 L483.7,471.8 L483.7,471.8 L479.5,474.4 L475.4,477.1 L471.3,479.8 L467.3,482.5 L463.2,485.2 L459.1,487.9 L455.1,490.6 L451.0,493.4Z" fill="#acacac" fill-opacity="0.72"/><path d="M116.6,262.0 L120.3,259.9 L123.8,257.5 L127.0,254.7 L129.8,251.6 L132.3,248.2 L134.4,244.5 L136.1,240.6 L137.4,236.5 L137.4,236.5 L135.2,240.1 L132.9,243.6 L130.5,246.9 L128.0,250.1 L125.4,253.2 L122.6,256.2 L119.7,259.1 L116.6,262.0Z" fill="#acacac" fill-opacity="0.35"/><path d="M503.7,72.2 L509.4,66.2 L515.0,59.9 L520.3,53.5 L525.5,47.0 L530.4,40.3 L535.2,33.5 L539.8,26.5 L544.1,19.4 L544.1,19.4 L539.0,26.0 L534.0,32.6 L528.9,39.2 L523.9,45.8 L518.8,52.4 L513.8,59.0 L508.7,65.6 L503.7,72.2Z" fill="#acacac" fill-opacity="0.74"/><path d="M161.4,231.5 L163.4,228.1 L165.0,224.4 L166.3,220.7 L167.1,216.9 L167.5,213.0 L167.5,209.0 L167.1,205.1 L166.3,201.2 L166.3,201.2 L165.9,205.1 L165.6,209.0 L165.1,212.7 L164.6,216.5 L163.9,220.2 L163.2,223.9 L162.3,227.6 L161.4,231.5Z" fill="#acacac" fill-opacity="0.34"/><path d="M281.5,344.3 L282.0,336.5 L282.5,328.7 L283.2,321.0 L284.1,313.3 L285.1,305.6 L286.2,298.0 L287.5,290.3 L289.0,282.7 L289.0,282.7 L286.9,290.2 L285.2,297.8 L283.7,305.4 L282.6,313.1 L281.9,320.9 L281.4,328.6 L281.3,336.4 L281.5,344.3Z" fill="#acacac" fill-opacity="0.65"/><path d="M76.9,94.3 L81.0,92.2 L84.7,89.7 L88.2,86.8 L91.3,83.6 L94.1,80.1 L96.5,76.4 L98.5,72.3 L100.0,68.0 L100.0,68.0 L97.7,71.9 L95.3,75.6 L92.7,79.1 L89.9,82.4 L87.0,85.6 L83.9,88.6 L80.5,91.5 L76.9,94.3Z" fill="#acacac" fill-opacity="0.60"/><path d="M72.0,99.1 L76.8,94.2 L81.1,89.0 L85.0,83.4 L88.5,77.6 L91.5,71.6 L94.1,65.3 L96.2,58.8 L97.8,52.2 L97.8,52.2 L95.1,58.5 L92.4,64.6 L89.4,70.6 L86.3,76.4 L83.0,82.2 L79.6,87.9 L75.9,93.5 L72.0,99.1Z" fill="#acacac" fill-opacity="0.31"/><path d="M335.0,444.6 L337.2,442.4 L339.3,440.0 L341.3,437.6 L343.3,435.1 L345.1,432.6 L346.9,430.0 L348.6,427.3 L350.1,424.5 L350.1,424.5 L347.8,426.7 L345.6,429.0 L343.6,431.4 L341.6,433.9 L339.8,436.4 L338.1,439.1 L336.4,441.8 L335.0,444.6Z" fill="#acacac" fill-opacity="0.56"/><path d="M375.1,442.0 L378.1,440.7 L381.1,439.5 L384.1,438.3 L387.1,437.2 L390.2,436.2 L393.2,435.3 L396.4,434.5 L399.6,433.6 L399.6,433.6 L396.3,433.5 L392.9,433.8 L389.6,434.3 L386.5,435.3 L383.4,436.5 L380.4,438.0 L377.7,439.9 L375.1,442.0Z" fill="#acacac" fill-opacity="0.40"/><path d="M312.0,170.1 L318.7,165.1 L325.5,160.1 L332.3,155.2 L339.1,150.3 L345.9,145.5 L352.8,140.8 L359.8,136.1 L366.8,131.4 L366.8,131.4 L359.2,135.1 L351.8,139.2 L344.6,143.5 L337.6,148.2 L330.8,153.2 L324.3,158.6 L318.0,164.2 L312.0,170.1Z" fill="#acacac" fill-opacity="0.46"/><path d="M-4.8,86.0 L3.5,86.7 L11.9,87.2 L20.2,87.7 L28.5,88.0 L36.9,88.3 L45.2,88.4 L53.6,88.4 L61.9,88.3 L61.9,88.3 L53.6,87.6 L45.3,87.0 L36.9,86.6 L28.6,86.3 L20.2,86.0 L11.9,85.9 L3.5,85.9 L-4.8,86.0Z" fill="#acacac" fill-opacity="0.30"/><path d="M189.1,57.7 L192.5,54.6 L195.9,51.6 L199.2,48.5 L202.6,45.3 L205.8,42.2 L209.1,39.0 L212.3,35.7 L215.5,32.4 L215.5,32.4 L211.8,35.2 L208.3,38.2 L204.9,41.2 L201.6,44.3 L198.3,47.5 L195.1,50.8 L192.1,54.2 L189.1,57.7Z" fill="#acacac" fill-opacity="0.35"/><path d="M369.0,211.0 L374.0,207.7 L378.6,203.9 L383.0,199.9 L387.0,195.5 L390.7,190.8 L394.0,185.8 L396.9,180.6 L399.4,175.2 L399.4,175.2 L395.9,180.0 L392.4,184.7 L388.8,189.3 L385.0,193.8 L381.2,198.2 L377.3,202.5 L373.2,206.8 L369.0,211.0Z" fill="#acacac" fill-opacity="0.53"/><path d="M76.9,319.2 L83.9,318.2 L90.8,317.4 L97.8,316.9 L104.6,316.5 L111.6,316.4 L118.5,316.5 L125.5,316.8 L132.5,317.2 L132.5,317.2 L125.6,315.7 L118.6,314.7 L111.6,314.2 L104.6,314.2 L97.6,314.7 L90.6,315.7 L83.7,317.2 L76.9,319.2Z" fill="#acacac" fill-opacity="0.51"/><path d="M3.5,81.5 L7.1,79.1 L10.5,76.4 L13.8,73.6 L16.9,70.7 L19.9,67.5 L22.7,64.3 L25.4,60.9 L27.9,57.3 L27.9,57.3 L24.8,60.3 L21.7,63.4 L18.7,66.4 L15.6,69.4 L12.6,72.4 L9.6,75.4 L6.5,78.4 L3.5,81.5Z" fill="#acacac" fill-opacity="0.37"/><path d="M269.4,508.2 L270.8,504.0 L272.0,499.7 L273.1,495.4 L274.0,491.1 L274.9,486.7 L275.5,482.3 L276.1,477.9 L276.4,473.5 L276.4,473.5 L275.2,477.8 L274.2,482.1 L273.2,486.4 L272.2,490.7 L271.4,495.0 L270.6,499.4 L270.0,503.8 L269.4,508.2Z" fill="#acacac" fill-opacity="0.56"/><path d="M85.3,240.0 L91.4,238.7 L97.4,236.8 L103.1,234.5 L108.6,231.7 L113.9,228.5 L118.9,224.8 L123.7,220.7 L128.1,216.2 L128.1,216.2 L123.0,219.9 L117.9,223.4 L112.8,226.7 L107.5,229.7 L102.2,232.6 L96.7,235.2 L91.1,237.7 L85.3,240.0Z" fill="#acacac" fill-opacity="0.35"/><path d="M8.2,431.9 L10.4,423.8 L12.2,415.6 L13.8,407.3 L15.0,399.0 L15.8,390.7 L16.3,382.3 L16.5,373.9 L16.3,365.5 L16.3,365.5 L15.6,373.8 L14.8,382.2 L13.9,390.5 L12.9,398.8 L11.9,407.1 L10.7,415.3 L9.5,423.6 L8.2,431.9Z" fill="#acacac" fill-opacity="0.59"/><path d="M11.3,242.4 L12.2,237.1 L13.1,231.9 L14.1,226.7 L15.0,221.5 L15.9,216.3 L16.9,211.0 L17.9,205.8 L18.8,200.5 L18.8,200.5 L16.7,205.5 L15.0,210.6 L13.6,215.8 L12.5,221.0 L11.7,226.3 L11.2,231.6 L11.1,237.0 L11.3,242.4Z" fill="#acacac" fill-opacity="0.64"/><path d="M133.5,210.2 L140.2,206.1 L146.6,201.6 L152.8,196.9 L158.8,191.8 L164.6,186.5 L170.1,180.9 L175.3,175.1 L180.2,168.9 L180.2,168.9 L174.6,174.5 L169.0,179.9 L163.3,185.2 L157.6,190.4 L151.7,195.5 L145.7,200.5 L139.6,205.4 L133.5,210.2Z" fill="#acacac" fill-opacity="0.32"/><path d="M205.9,483.0 L213.8,479.9 L221.6,476.5 L229.2,472.7 L236.6,468.6 L243.9,464.1 L250.9,459.3 L257.7,454.2 L264.2,448.7 L264.2,448.7 L257.0,453.3 L249.8,457.7 L242.6,462.1 L235.4,466.4 L228.1,470.6 L220.7,474.8 L213.3,478.9 L205.9,483.0Z" fill="#acacac" fill-opacity="0.39"/><path d="M510.2,-13.3 L514.0,-17.4 L517.8,-21.6 L521.5,-25.8 L525.1,-30.0 L528.7,-34.3 L532.3,-38.7 L535.7,-43.1 L539.1,-47.6 L539.1,-47.6 L535.0,-43.8 L531.0,-39.8 L527.2,-35.7 L523.5,-31.4 L519.9,-27.1 L516.5,-22.6 L513.2,-18.0 L510.2,-13.3Z" fill="#acacac" fill-opacity="0.33"/><path d="M315.0,261.7 L317.3,260.3 L319.5,258.8 L321.7,257.3 L323.9,255.8 L326.0,254.2 L328.1,252.6 L330.2,251.0 L332.3,249.2 L332.3,249.2 L329.8,250.4 L327.5,251.6 L325.2,253.0 L323.0,254.6 L320.8,256.2 L318.8,257.9 L316.8,259.8 L315.0,261.7Z" fill="#acacac" fill-opacity="0.35"/><path d="M152.8,167.6 L155.7,166.4 L158.4,165.0 L161.0,163.4 L163.5,161.5 L165.7,159.5 L167.8,157.2 L169.8,154.8 L171.4,152.2 L171.4,152.2 L168.9,154.0 L166.5,155.8 L164.2,157.7 L161.8,159.6 L159.6,161.5 L157.3,163.4 L155.0,165.4 L152.8,167.6Z" fill="#acacac" fill-opacity="0.32"/><path d="M387.8,280.8 L391.6,278.1 L395.2,275.1 L398.5,272.0 L401.7,268.5 L404.6,264.9 L407.2,261.1 L409.6,257.1 L411.7,253.0 L411.7,253.0 L408.8,256.6 L405.9,260.2 L403.0,263.7 L400.1,267.2 L397.1,270.6 L394.1,274.0 L390.9,277.4 L387.8,280.8Z" fill="#acacac" fill-opacity="0.55"/><path d="M312.1,74.7 L317.0,71.7 L321.9,68.5 L326.6,65.2 L331.3,61.8 L335.9,58.2 L340.3,54.5 L344.7,50.7 L348.9,46.7 L348.9,46.7 L344.2,50.1 L339.6,53.5 L334.9,57.0 L330.3,60.5 L325.7,64.0 L321.1,67.5 L316.6,71.1 L312.1,74.7Z" fill="#acacac" fill-opacity="0.58"/><path d="M343.3,380.0 L344.5,375.7 L345.6,371.4 L346.8,367.2 L348.0,363.0 L349.2,358.8 L350.5,354.6 L351.9,350.3 L353.2,346.1 L353.2,346.1 L351.1,350.0 L349.3,354.1 L347.7,358.2 L346.3,362.5 L345.2,366.8 L344.3,371.1 L343.7,375.5 L343.3,380.0Z" fill="#acacac" fill-opacity="0.44"/><path d="M91.7,247.1 L96.2,242.3 L100.7,237.5 L105.2,232.7 L109.6,227.9 L114.1,223.1 L118.5,218.3 L123.0,213.5 L127.5,208.6 L127.5,208.6 L122.3,212.7 L117.3,217.0 L112.5,221.6 L107.9,226.3 L103.5,231.2 L99.4,236.3 L95.4,241.6 L91.7,247.1Z" fill="#acacac" fill-opacity="0.73"/><path d="M423.1,78.0 L425.1,76.0 L427.0,74.3 L429.0,72.9 L431.1,71.7 L433.3,70.8 L435.7,70.2 L438.2,69.8 L441.0,69.6 L441.0,69.6 L438.2,69.1 L435.5,69.1 L432.9,69.6 L430.5,70.5 L428.3,71.8 L426.3,73.5 L424.6,75.5 L423.1,78.0Z" fill="#acacac" fill-opacity="0.73"/><path d="M275.5,103.5 L279.8,101.2 L284.0,98.9 L288.3,96.7 L292.6,94.6 L296.9,92.6 L301.2,90.5 L305.6,88.5 L310.0,86.5 L310.0,86.5 L305.2,87.5 L300.5,88.9 L296.0,90.6 L291.6,92.6 L287.3,94.9 L283.2,97.4 L279.2,100.3 L275.5,103.5Z" fill="#acacac" fill-opacity="0.51"/><path d="M28.1,415.8 L30.7,415.0 L32.9,413.8 L34.9,412.2 L36.4,410.2 L37.5,408.0 L38.1,405.6 L38.2,403.0 L37.7,400.3 L37.7,400.3 L37.1,402.9 L36.4,405.1 L35.5,407.2 L34.5,409.0 L33.3,410.7 L31.8,412.4 L30.1,414.1 L28.1,415.8Z" fill="#acacac" fill-opacity="0.51"/><path d="M497.6,169.6 L499.5,168.4 L501.4,167.1 L503.2,165.8 L505.0,164.5 L506.8,163.2 L508.5,161.9 L510.3,160.5 L512.1,159.0 L512.1,159.0 L509.9,159.6 L507.7,160.5 L505.7,161.6 L503.8,162.8 L502.0,164.3 L500.3,165.9 L498.8,167.7 L497.6,169.6Z" fill="#acacac" fill-opacity="0.67"/><path d="M477.4,218.9 L480.2,218.6 L483.0,218.2 L485.8,217.8 L488.6,217.4 L491.3,217.0 L494.1,216.6 L496.9,216.1 L499.7,215.7 L499.7,215.7 L496.8,215.5 L494.0,215.5 L491.2,215.6 L488.4,215.9 L485.6,216.4 L482.8,217.1 L480.1,217.9 L477.4,218.9Z" fill="#acacac" fill-opacity="0.39"/><path d="M47.8,232.0 L55.8,232.5 L63.8,232.9 L71.7,233.3 L79.7,233.7 L87.7,234.1 L95.6,234.4 L103.6,234.8 L111.7,235.1 L111.7,235.1 L103.7,233.6 L95.8,232.6 L87.8,231.7 L79.8,231.2 L71.8,231.0 L63.8,231.0 L55.8,231.3 L47.8,232.0Z" fill="#acacac" fill-opacity="0.63"/><path d="M465.2,37.5 L470.2,30.5 L474.9,23.2 L479.4,15.7 L483.4,8.1 L487.2,0.3 L490.6,-7.6 L493.8,-15.7 L496.5,-23.9 L496.5,-23.9 L492.9,-16.0 L489.3,-8.2 L485.6,-0.4 L481.7,7.3 L477.8,14.9 L473.7,22.5 L469.5,30.0 L465.2,37.5Z" fill="#acacac" fill-opacity="0.65"/><path d="M446.5,297.6 L450.6,298.3 L454.7,298.9 L458.7,299.5 L462.7,300.1 L466.8,300.6 L470.8,301.1 L474.9,301.6 L479.0,302.0 L479.0,302.0 L475.1,300.5 L471.2,299.3 L467.2,298.3 L463.1,297.6 L459.0,297.2 L454.8,297.1 L450.7,297.2 L446.5,297.6Z" fill="#acacac" fill-opacity="0.30"/><path d="M337.5,111.8 L343.3,106.4 L349.1,101.0 L354.9,95.5 L360.7,90.1 L366.5,84.7 L372.2,79.2 L378.0,73.8 L383.8,68.3 L383.8,68.3 L377.5,73.1 L371.3,78.1 L365.3,83.3 L359.4,88.7 L353.7,94.3 L348.1,99.9 L342.7,105.8 L337.5,111.8Z" fill="#acacac" fill-opacity="0.50"/><path d="M46.6,457.0 L52.6,453.1 L58.6,449.0 L64.6,444.9 L70.5,440.8 L76.3,436.6 L82.1,432.3 L87.9,427.9 L93.5,423.5 L93.5,423.5 L87.4,427.2 L81.3,431.2 L75.4,435.2 L69.4,439.4 L63.6,443.6 L57.9,448.0 L52.2,452.4 L46.6,457.0Z" fill="#acacac" fill-opacity="0.67"/><path d="M171.6,126.7 L178.2,128.1 L184.8,129.0 L191.4,129.4 L198.0,129.3 L204.6,128.7 L211.1,127.6 L217.6,126.0 L223.9,123.9 L223.9,123.9 L217.3,125.0 L210.8,125.9 L204.3,126.5 L197.9,127.0 L191.4,127.2 L184.9,127.3 L178.3,127.1 L171.6,126.7Z" fill="#acacac" fill-opacity="0.68"/><path d="M473.1,388.8 L479.3,385.0 L485.2,380.8 L490.8,376.4 L496.3,371.7 L501.5,366.7 L506.5,361.5 L511.2,356.0 L515.6,350.3 L515.6,350.3 L510.4,355.3 L505.2,360.3 L500.0,365.2 L494.8,370.0 L489.4,374.7 L484.1,379.4 L478.6,384.1 L473.1,388.8Z" fill="#acacac" fill-opacity="0.75"/><path d="M115.7,322.8 L118.1,320.0 L120.5,317.5 L122.9,315.3 L125.5,313.2 L128.1,311.3 L131.0,309.5 L134.0,307.9 L137.3,306.3 L137.3,306.3 L133.6,306.8 L130.2,307.8 L126.9,309.3 L124.0,311.3 L121.4,313.6 L119.1,316.3 L117.2,319.4 L115.7,322.8Z" fill="#acacac" fill-opacity="0.78"/><path d="M4.7,431.2 L12.3,430.4 L19.8,429.3 L27.3,427.8 L34.6,425.9 L41.9,423.8 L49.1,421.2 L56.1,418.4 L63.0,415.1 L63.0,415.1 L55.8,417.6 L48.6,420.0 L41.4,422.2 L34.2,424.3 L26.9,426.2 L19.6,428.0 L12.2,429.6 L4.7,431.2Z" fill="#acacac" fill-opacity="0.58"/><path d="M14.5,223.5 L18.2,224.7 L21.9,225.5 L25.6,226.0 L29.4,226.1 L33.2,225.9 L36.9,225.3 L40.6,224.3 L44.2,223.0 L44.2,223.0 L40.4,223.4 L36.7,223.7 L33.0,223.9 L29.4,224.0 L25.7,224.0 L22.0,223.9 L18.3,223.7 L14.5,223.5Z" fill="#acacac" fill-opacity="0.31"/><path d="M-16.2,87.4 L-13.8,87.3 L-11.5,87.0 L-9.2,86.6 L-6.9,86.1 L-4.6,85.5 L-2.4,84.8 L-0.2,84.0 L2.0,83.0 L2.0,83.0 L-0.4,83.1 L-2.7,83.3 L-5.1,83.6 L-7.4,84.1 L-9.6,84.7 L-11.9,85.4 L-14.1,86.3 L-16.2,87.4Z" fill="#acacac" fill-opacity="0.46"/><path d="M356.0,484.4 L358.5,482.4 L360.8,480.5 L363.1,478.6 L365.4,476.8 L367.8,475.0 L370.2,473.2 L372.6,471.4 L375.1,469.6 L375.1,469.6 L372.1,470.4 L369.2,471.6 L366.5,473.1 L363.9,474.9 L361.6,476.9 L359.5,479.2 L357.6,481.7 L356.0,484.4Z" fill="#acacac" fill-opacity="0.33"/><path d="M357.5,463.4 L360.1,460.5 L362.6,457.6 L365.0,454.6 L367.4,451.5 L369.7,448.4 L371.9,445.3 L374.1,442.1 L376.2,438.8 L376.2,438.8 L373.6,441.7 L371.0,444.6 L368.6,447.6 L366.2,450.6 L363.9,453.7 L361.7,456.9 L359.5,460.1 L357.5,463.4Z" fill="#acacac" fill-opacity="0.48"/><path d="M319.8,460.5 L327.3,461.9 L334.9,462.8 L342.5,463.5 L350.1,463.9 L357.7,464.0 L365.4,463.8 L373.0,463.3 L380.6,462.4 L380.6,462.4 L373.0,462.2 L365.3,462.0 L357.8,461.7 L350.2,461.5 L342.6,461.3 L335.0,461.0 L327.4,460.8 L319.8,460.5Z" fill="#acacac" fill-opacity="0.50"/><path d="M37.9,60.3 L43.9,55.2 L49.8,49.9 L55.6,44.6 L61.3,39.2 L66.9,33.6 L72.4,28.0 L77.8,22.3 L83.1,16.5 L83.1,16.5 L77.2,21.7 L71.4,27.0 L65.7,32.4 L60.0,37.8 L54.4,43.3 L48.8,48.9 L43.3,54.5 L37.9,60.3Z" fill="#acacac" fill-opacity="0.72"/><path d="M111.8,333.0 L114.7,329.1 L117.5,325.1 L120.1,321.0 L122.7,316.9 L125.0,312.6 L127.3,308.3 L129.4,304.0 L131.3,299.5 L131.3,299.5 L128.7,303.6 L126.1,307.7 L123.6,311.8 L121.1,316.0 L118.7,320.2 L116.4,324.4 L114.1,328.7 L111.8,333.0Z" fill="#acacac" fill-opacity="0.74"/><path d="M411.1,67.5 L419.3,69.7 L427.6,71.5 L436.0,73.1 L444.4,74.5 L452.9,75.5 L461.4,76.3 L469.9,76.9 L478.4,77.1 L478.4,77.1 L470.0,75.9 L461.5,74.8 L453.1,73.6 L444.7,72.4 L436.3,71.2 L427.9,70.0 L419.5,68.8 L411.1,67.5Z" fill="#acacac" fill-opacity="0.48"/><path d="M305.8,84.9 L306.7,82.2 L307.5,79.6 L308.3,77.1 L309.1,74.6 L310.0,72.0 L310.9,69.5 L311.8,66.9 L312.7,64.3 L312.7,64.3 L311.0,66.5 L309.5,68.9 L308.3,71.4 L307.3,73.9 L306.5,76.6 L306.0,79.3 L305.8,82.1 L305.8,84.9Z" fill="#acacac" fill-opacity="0.32"/><path d="M261.6,134.2 L265.0,135.6 L268.4,136.6 L271.8,137.3 L275.4,137.6 L278.9,137.7 L282.4,137.3 L285.9,136.7 L289.4,135.7 L289.4,135.7 L285.8,135.9 L282.3,136.0 L278.9,136.0 L275.4,135.9 L272.0,135.7 L268.6,135.3 L265.2,134.8 L261.6,134.2Z" fill="#acacac" fill-opacity="0.58"/><path d="M-15.7,200.3 L-10.2,200.4 L-4.7,200.0 L0.8,199.2 L6.2,198.0 L11.4,196.3 L16.5,194.3 L21.5,191.8 L26.3,189.0 L26.3,189.0 L21.1,190.9 L15.9,192.7 L10.8,194.3 L5.6,195.8 L0.4,197.1 L-4.9,198.3 L-10.3,199.4 L-15.7,200.3Z" fill="#acacac" fill-opacity="0.46"/><path d="M497.9,511.1 L501.3,508.0 L504.7,505.2 L508.2,502.5 L511.8,500.0 L515.5,497.8 L519.3,495.6 L523.3,493.6 L527.5,491.8 L527.5,491.8 L522.9,492.7 L518.6,494.1 L514.4,495.9 L510.5,498.1 L506.9,500.8 L503.6,503.9 L500.6,507.3 L497.9,511.1Z" fill="#acacac" fill-opacity="0.39"/><path d="M261.6,51.2 L266.2,48.0 L270.7,44.5 L274.9,40.8 L278.8,36.7 L282.5,32.5 L285.9,28.0 L289.1,23.3 L291.9,18.4 L291.9,18.4 L288.4,22.9 L284.9,27.2 L281.2,31.4 L277.5,35.5 L273.7,39.6 L269.8,43.5 L265.7,47.4 L261.6,51.2Z" fill="#acacac" fill-opacity="0.51"/><path d="M346.8,396.7 L350.8,395.8 L354.7,395.0 L358.5,394.4 L362.4,394.0 L366.2,393.7 L370.1,393.5 L374.1,393.5 L378.2,393.7 L378.2,393.7 L374.2,392.5 L370.2,391.8 L366.2,391.5 L362.1,391.7 L358.2,392.3 L354.2,393.3 L350.4,394.8 L346.8,396.7Z" fill="#acacac" fill-opacity="0.62"/><path d="M468.1,257.9 L470.8,256.8 L473.3,255.6 L475.9,254.4 L478.4,253.2 L480.8,252.0 L483.3,250.7 L485.8,249.4 L488.3,248.0 L488.3,248.0 L485.5,248.5 L482.7,249.2 L480.0,250.1 L477.4,251.3 L474.9,252.7 L472.5,254.2 L470.3,255.9 L468.1,257.9Z" fill="#acacac" fill-opacity="0.56"/><path d="M64.8,260.4 L67.2,257.9 L69.5,255.4 L71.8,252.9 L74.1,250.4 L76.4,248.0 L78.8,245.5 L81.2,243.1 L83.6,240.6 L83.6,240.6 L80.6,242.4 L77.9,244.5 L75.2,246.7 L72.8,249.1 L70.5,251.7 L68.4,254.5 L66.5,257.4 L64.8,260.4Z" fill="#acacac" fill-opacity="0.61"/><path d="M229.4,349.4 L233.4,346.1 L237.1,342.6 L240.7,339.0 L244.1,335.1 L247.2,331.1 L250.1,326.9 L252.8,322.5 L255.2,318.0 L255.2,318.0 L252.0,321.9 L248.8,325.9 L245.6,329.8 L242.4,333.7 L239.1,337.6 L235.9,341.5 L232.6,345.4 L229.4,349.4Z" fill="#acacac" fill-opacity="0.30"/><path d="M452.5,86.0 L457.7,84.2 L462.8,82.3 L468.0,80.4 L473.1,78.7 L478.2,76.9 L483.4,75.2 L488.6,73.5 L493.8,71.8 L493.8,71.8 L488.3,72.5 L482.9,73.5 L477.6,74.8 L472.3,76.5 L467.2,78.4 L462.2,80.6 L457.3,83.2 L452.5,86.0Z" fill="#acacac" fill-opacity="0.68"/><path d="M8.2,382.6 L11.4,379.3 L14.5,376.0 L17.6,372.7 L20.6,369.5 L23.7,366.2 L26.8,362.9 L29.8,359.6 L32.9,356.2 L32.9,356.2 L29.2,358.9 L25.8,361.9 L22.5,364.9 L19.3,368.2 L16.3,371.6 L13.4,375.1 L10.7,378.8 L8.2,382.6Z" fill="#acacac" fill-opacity="0.58"/><path d="M230.8,524.6 L239.0,525.2 L247.3,525.7 L255.6,526.0 L263.9,526.3 L272.1,526.5 L280.4,526.6 L288.7,526.5 L297.0,526.4 L297.0,526.4 L288.7,525.4 L280.5,524.8 L272.2,524.3 L263.9,524.0 L255.6,523.8 L247.3,523.9 L239.1,524.1 L230.8,524.6Z" fill="#acacac" fill-opacity="0.47"/><path d="M387.2,62.4 L394.4,61.2 L401.7,60.1 L408.8,59.3 L416.0,58.6 L423.2,58.1 L430.5,57.8 L437.8,57.7 L445.1,57.7 L445.1,57.7 L437.8,56.6 L430.5,56.0 L423.2,55.9 L415.8,56.2 L408.6,57.0 L401.3,58.3 L394.2,60.1 L387.2,62.4Z" fill="#acacac" fill-opacity="0.63"/><path d="M343.2,134.9 L345.4,135.6 L347.7,136.2 L349.9,136.7 L352.0,137.1 L354.3,137.4 L356.5,137.6 L358.8,137.8 L361.1,137.8 L361.1,137.8 L359.1,136.6 L356.9,135.7 L354.7,135.0 L352.5,134.5 L350.2,134.3 L347.9,134.2 L345.5,134.4 L343.2,134.9Z" fill="#acacac" fill-opacity="0.54"/><path d="M-3.9,55.9 L2.8,52.7 L9.3,49.1 L15.7,45.5 L22.0,41.7 L28.3,37.7 L34.4,33.5 L40.4,29.3 L46.3,24.8 L46.3,24.8 L39.8,28.3 L33.4,32.0 L27.1,35.8 L20.8,39.6 L14.5,43.6 L8.3,47.6 L2.2,51.7 L-3.9,55.9Z" fill="#acacac" fill-opacity="0.76"/><path d="M317.1,123.5 L325.4,123.3 L333.7,123.1 L342.0,123.1 L350.2,123.3 L358.5,123.6 L366.7,124.0 L375.0,124.6 L383.3,125.2 L383.3,125.2 L375.1,123.7 L366.9,122.6 L358.6,121.9 L350.3,121.5 L342.0,121.4 L333.7,121.8 L325.4,122.4 L317.1,123.5Z" fill="#acacac" fill-opacity="0.29"/><path d="M186.0,13.7 L190.0,12.5 L193.9,11.5 L197.7,10.7 L201.6,10.1 L205.5,9.7 L209.5,9.6 L213.5,9.6 L217.6,9.8 L217.6,9.8 L213.5,8.9 L209.5,8.4 L205.4,8.3 L201.4,8.6 L197.4,9.3 L193.5,10.4 L189.7,11.9 L186.0,13.7Z" fill="#acacac" fill-opacity="0.58"/><path d="M127.7,474.8 L133.2,469.9 L138.5,464.9 L143.7,459.8 L148.8,454.6 L153.8,449.2 L158.7,443.7 L163.4,438.2 L168.0,432.5 L168.0,432.5 L162.6,437.4 L157.3,442.5 L152.1,447.6 L147.0,452.9 L142.1,458.2 L137.2,463.6 L132.3,469.1 L127.7,474.8Z" fill="#acacac" fill-opacity="0.51"/><path d="M432.0,264.0 L435.3,261.6 L438.5,258.9 L441.5,256.1 L444.3,253.2 L446.9,250.1 L449.4,246.9 L451.8,243.5 L453.9,240.0 L453.9,240.0 L451.0,242.9 L448.3,245.9 L445.5,248.9 L442.8,251.8 L440.1,254.8 L437.4,257.8 L434.7,260.9 L432.0,264.0Z" fill="#acacac" fill-opacity="0.51"/><path d="M436.4,365.0 L442.7,362.2 L448.8,359.0 L454.6,355.5 L460.2,351.6 L465.5,347.4 L470.5,342.8 L475.3,337.9 L479.7,332.7 L479.7,332.7 L474.6,337.3 L469.5,341.7 L464.3,345.9 L459.0,350.0 L453.5,353.9 L448.0,357.7 L442.3,361.4 L436.4,365.0Z" fill="#acacac" fill-opacity="0.48"/><path d="M158.2,160.3 L165.9,159.2 L173.6,158.0 L181.3,156.9 L188.9,155.7 L196.6,154.5 L204.2,153.3 L211.9,152.1 L219.6,150.8 L219.6,150.8 L211.8,151.1 L204.0,151.7 L196.3,152.5 L188.6,153.6 L180.9,154.9 L173.3,156.4 L165.7,158.2 L158.2,160.3Z" fill="#acacac" fill-opacity="0.39"/><path d="M505.8,499.2 L510.7,495.0 L515.6,490.7 L520.4,486.3 L525.0,481.8 L529.6,477.2 L534.2,472.6 L538.6,467.8 L542.9,463.0 L542.9,463.0 L538.0,467.2 L533.2,471.5 L528.4,476.0 L523.7,480.4 L519.1,485.0 L514.6,489.7 L510.1,494.4 L505.8,499.2Z" fill="#acacac" fill-opacity="0.59"/><path d="M453.8,415.7 L457.4,417.6 L461.1,419.1 L465.0,420.2 L468.9,420.9 L472.9,421.1 L476.9,420.9 L480.9,420.3 L484.8,419.3 L484.8,419.3 L480.8,419.6 L476.8,419.8 L472.9,419.7 L469.1,419.3 L465.3,418.8 L461.5,418.0 L457.6,416.9 L453.8,415.7Z" fill="#acacac" fill-opacity="0.38"/><path d="M64.7,121.7 L69.4,120.4 L74.0,119.1 L78.7,117.7 L83.3,116.5 L87.9,115.2 L92.6,113.9 L97.3,112.6 L101.9,111.3 L101.9,111.3 L97.1,111.9 L92.3,112.8 L87.6,113.8 L82.9,115.0 L78.3,116.4 L73.7,118.0 L69.1,119.7 L64.7,121.7Z" fill="#acacac" fill-opacity="0.77"/><path d="M229.0,70.0 L232.5,67.1 L235.9,64.0 L239.2,60.8 L242.4,57.5 L245.4,54.1 L248.4,50.5 L251.2,46.9 L253.8,43.1 L253.8,43.1 L250.5,46.3 L247.3,49.5 L244.1,52.8 L240.9,56.1 L237.9,59.5 L234.9,63.0 L231.9,66.5 L229.0,70.0Z" fill="#acacac" fill-opacity="0.57"/><path d="M303.8,247.5 L308.5,245.7 L313.0,243.5 L317.3,241.0 L321.4,238.2 L325.2,235.1 L328.8,231.6 L332.1,227.9 L335.2,223.9 L335.2,223.9 L331.5,227.2 L327.7,230.5 L324.0,233.6 L320.1,236.6 L316.2,239.4 L312.2,242.2 L308.1,244.9 L303.8,247.5Z" fill="#acacac" fill-opacity="0.35"/><path d="M316.1,430.8 L324.5,430.1 L332.7,429.5 L341.0,428.9 L349.3,428.5 L357.6,428.1 L365.9,427.8 L374.2,427.6 L382.5,427.5 L382.5,427.5 L374.2,426.7 L365.9,426.4 L357.5,426.3 L349.2,426.5 L340.9,427.1 L332.6,428.0 L324.4,429.2 L316.1,430.8Z" fill="#acacac" fill-opacity="0.80"/><path d="M49.7,-2.5 L53.3,-4.0 L56.8,-5.9 L60.0,-8.0 L63.1,-10.4 L65.9,-13.1 L68.4,-16.0 L70.7,-19.1 L72.7,-22.5 L72.7,-22.5 L69.9,-19.8 L67.2,-17.1 L64.4,-14.5 L61.6,-12.0 L58.8,-9.6 L55.8,-7.2 L52.8,-4.9 L49.7,-2.5Z" fill="#acacac" fill-opacity="0.36"/><path d="M348.1,488.4 L350.6,489.2 L353.1,489.7 L355.5,490.1 L358.0,490.5 L360.5,490.6 L363.1,490.7 L365.6,490.7 L368.1,490.4 L368.1,490.4 L365.7,489.8 L363.2,489.3 L360.7,488.8 L358.2,488.5 L355.7,488.3 L353.2,488.3 L350.7,488.3 L348.1,488.4Z" fill="#acacac" fill-opacity="0.44"/><path d="M368.4,93.2 L373.1,87.9 L377.6,82.4 L381.8,76.7 L385.8,70.8 L389.4,64.7 L392.8,58.5 L395.9,52.1 L398.6,45.5 L398.6,45.5 L395.2,51.8 L391.8,57.9 L388.2,64.0 L384.5,70.0 L380.6,75.9 L376.7,81.7 L372.6,87.4 L368.4,93.2Z" fill="#acacac" fill-opacity="0.33"/><path d="M505.7,20.1 L508.9,21.5 L512.2,22.5 L515.5,23.3 L518.8,23.8 L522.2,24.0 L525.6,24.0 L529.0,23.7 L532.4,23.1 L532.4,23.1 L529.0,22.7 L525.7,22.4 L522.4,22.0 L519.1,21.6 L515.8,21.3 L512.5,20.9 L509.1,20.5 L505.7,20.1Z" fill="#acacac" fill-opacity="0.46"/><path d="M60.0,474.4 L66.1,473.1 L72.1,471.5 L77.9,469.4 L83.5,466.9 L89.0,464.1 L94.3,460.8 L99.3,457.2 L104.1,453.2 L104.1,453.2 L98.9,456.7 L93.7,459.9 L88.3,462.9 L82.9,465.6 L77.4,468.1 L71.7,470.4 L65.9,472.5 L60.0,474.4Z" fill="#acacac" fill-opacity="0.62"/><path d="M506.7,347.2 L511.2,348.5 L515.7,349.5 L520.3,350.3 L524.9,350.8 L529.5,351.1 L534.1,351.2 L538.7,351.0 L543.3,350.5 L543.3,350.5 L538.7,350.3 L534.1,350.1 L529.5,349.7 L525.0,349.4 L520.4,348.9 L515.9,348.4 L511.3,347.8 L506.7,347.2Z" fill="#acacac" fill-opacity="0.62"/><path d="M473.7,286.9 L478.6,285.9 L483.4,284.7 L488.2,283.4 L492.9,282.0 L497.6,280.4 L502.3,278.6 L506.9,276.7 L511.4,274.7 L511.4,274.7 L506.5,275.7 L501.7,276.9 L496.9,278.2 L492.2,279.7 L487.5,281.3 L482.9,283.0 L478.3,284.9 L473.7,286.9Z" fill="#acacac" fill-opacity="0.57"/><path d="M281.0,266.0 L285.9,265.6 L290.7,265.3 L295.5,265.0 L300.3,264.7 L305.1,264.5 L309.9,264.4 L314.7,264.3 L319.6,264.2 L319.6,264.2 L314.7,263.5 L309.9,263.0 L305.1,262.8 L300.2,262.9 L295.4,263.3 L290.6,263.9 L285.8,264.8 L281.0,266.0Z" fill="#acacac" fill-opacity="0.73"/><path d="M124.8,524.0 L129.0,521.7 L132.9,519.1 L136.6,516.2 L140.1,513.0 L143.3,509.5 L146.1,505.8 L148.7,501.8 L150.9,497.6 L150.9,497.6 L148.1,501.4 L145.1,505.0 L142.0,508.5 L138.9,511.8 L135.6,515.0 L132.1,518.1 L128.5,521.1 L124.8,524.0Z" fill="#acacac" fill-opacity="0.66"/><path d="M374.8,226.5 L379.4,221.2 L383.7,215.8 L387.8,210.2 L391.8,204.5 L395.6,198.7 L399.2,192.7 L402.7,186.7 L405.9,180.5 L405.9,180.5 L402.1,186.3 L398.3,192.1 L394.4,197.9 L390.6,203.6 L386.7,209.4 L382.8,215.1 L378.8,220.8 L374.8,226.5Z" fill="#acacac" fill-opacity="0.70"/><path d="M57.6,294.5 L60.8,289.5 L64.2,284.6 L67.6,279.8 L71.2,275.2 L74.8,270.6 L78.6,266.1 L82.6,261.7 L86.7,257.3 L86.7,257.3 L82.1,261.2 L77.8,265.3 L73.7,269.6 L69.9,274.2 L66.4,279.0 L63.2,283.9 L60.2,289.1 L57.6,294.5Z" fill="#acacac" fill-opacity="0.69"/><path d="M381.1,126.0 L386.7,124.0 L392.2,121.6 L397.5,118.9 L402.7,115.9 L407.6,112.5 L412.3,108.8 L416.7,104.8 L420.9,100.5 L420.9,100.5 L416.0,103.9 L411.1,107.3 L406.2,110.6 L401.3,113.7 L396.3,116.9 L391.3,119.9 L386.2,122.9 L381.1,126.0Z" fill="#acacac" fill-opacity="0.73"/><path d="M189.1,230.7 L194.0,229.8 L198.7,228.3 L203.2,226.5 L207.6,224.3 L211.7,221.7 L215.6,218.7 L219.2,215.4 L222.6,211.7 L222.6,211.7 L218.6,214.7 L214.7,217.6 L210.7,220.2 L206.6,222.6 L202.4,224.9 L198.1,227.0 L193.7,228.9 L189.1,230.7Z" fill="#acacac" fill-opacity="0.32"/><path d="M397.7,246.5 L398.3,241.9 L399.0,237.3 L399.9,232.9 L400.8,228.4 L401.8,224.1 L402.9,219.7 L404.2,215.3 L405.5,210.8 L405.5,210.8 L403.3,214.9 L401.5,219.2 L400.0,223.6 L398.8,228.0 L398.0,232.6 L397.6,237.2 L397.4,241.8 L397.7,246.5Z" fill="#acacac" fill-opacity="0.38"/><path d="M82.9,249.4 L88.4,248.3 L93.7,246.8 L98.9,244.9 L103.9,242.7 L108.8,240.2 L113.5,237.3 L118.0,234.1 L122.3,230.5 L122.3,230.5 L117.4,233.1 L112.6,235.7 L107.7,238.1 L102.9,240.5 L98.0,242.8 L93.0,245.0 L88.0,247.2 L82.9,249.4Z" fill="#acacac" fill-opacity="0.40"/><path d="M61.2,329.9 L66.0,325.7 L70.7,321.6 L75.4,317.4 L80.1,313.2 L84.8,309.1 L89.5,304.9 L94.2,300.7 L98.9,296.5 L98.9,296.5 L93.7,300.0 L88.6,303.8 L83.7,307.7 L78.9,311.8 L74.2,316.1 L69.7,320.5 L65.4,325.1 L61.2,329.9Z" fill="#acacac" fill-opacity="0.62"/><path d="M359.4,151.2 L368.2,151.1 L376.9,151.2 L385.5,151.6 L394.2,152.2 L402.8,153.1 L411.4,154.1 L420.0,155.4 L428.6,156.9 L428.6,156.9 L420.1,154.7 L411.6,152.9 L402.9,151.6 L394.3,150.6 L385.6,150.1 L376.9,150.0 L368.1,150.4 L359.4,151.2Z" fill="#acacac" fill-opacity="0.50"/><path d="M231.4,408.8 L238.7,406.0 L245.9,402.9 L252.8,399.3 L259.5,395.4 L266.0,391.0 L272.2,386.3 L278.1,381.3 L283.8,375.8 L283.8,375.8 L277.6,380.7 L271.4,385.3 L265.1,389.8 L258.6,394.0 L252.0,398.0 L245.3,401.8 L238.4,405.3 L231.4,408.8Z" fill="#acacac" fill-opacity="0.67"/><path d="M285.2,131.2 L293.0,131.2 L300.8,130.8 L308.5,130.0 L316.1,128.8 L323.7,127.3 L331.2,125.4 L338.6,123.1 L346.0,120.4 L346.0,120.4 L338.4,122.4 L330.9,124.2 L323.4,125.8 L315.8,127.3 L308.3,128.5 L300.6,129.6 L293.0,130.4 L285.2,131.2Z" fill="#acacac" fill-opacity="0.49"/><path d="M64.2,47.0 L65.0,43.1 L65.8,39.3 L66.6,35.4 L67.3,31.6 L68.1,27.7 L68.8,23.8 L69.5,20.0 L70.2,16.0 L70.2,16.0 L68.8,19.8 L67.6,23.6 L66.6,27.4 L65.7,31.3 L65.1,35.2 L64.6,39.1 L64.3,43.0 L64.2,47.0Z" fill="#acacac" fill-opacity="0.66"/><path d="M16.4,122.1 L22.5,123.4 L28.6,124.3 L34.8,124.9 L41.0,125.0 L47.2,124.7 L53.3,124.0 L59.5,122.9 L65.5,121.4 L65.5,121.4 L59.3,122.1 L53.2,122.7 L47.1,123.1 L41.0,123.2 L34.9,123.2 L28.7,123.0 L22.6,122.6 L16.4,122.1Z" fill="#acacac" fill-opacity="0.30"/><path d="M171.4,518.1 L178.1,515.8 L184.6,513.3 L191.1,510.5 L197.4,507.5 L203.7,504.2 L209.8,500.8 L215.8,497.1 L221.7,493.2 L221.7,493.2 L215.4,496.3 L209.1,499.5 L202.8,502.6 L196.6,505.7 L190.3,508.8 L184.0,511.9 L177.7,515.0 L171.4,518.1Z" fill="#acacac" fill-opacity="0.77"/><path d="M212.1,385.3 L219.5,386.0 L226.9,386.4 L234.3,386.6 L241.7,386.6 L249.2,386.3 L256.6,385.8 L263.9,385.2 L271.3,384.2 L271.3,384.2 L263.9,384.4 L256.5,384.7 L249.1,384.8 L241.7,385.0 L234.3,385.1 L226.9,385.2 L219.5,385.3 L212.1,385.3Z" fill="#acacac" fill-opacity="0.68"/><path d="M263.7,161.0 L266.6,158.7 L269.4,156.4 L272.3,154.1 L275.1,151.8 L278.0,149.5 L280.8,147.2 L283.7,144.9 L286.6,142.6 L286.6,142.6 L283.3,144.3 L280.1,146.2 L277.0,148.3 L274.1,150.5 L271.3,152.9 L268.6,155.5 L266.0,158.2 L263.7,161.0Z" fill="#acacac" fill-opacity="0.56"/><path d="M21.3,172.7 L25.2,171.3 L29.0,170.1 L32.8,169.1 L36.6,168.1 L40.4,167.3 L44.3,166.7 L48.3,166.1 L52.4,165.7 L52.4,165.7 L48.3,165.1 L44.2,164.9 L40.1,165.2 L36.1,165.9 L32.2,167.0 L28.4,168.5 L24.7,170.4 L21.3,172.7Z" fill="#acacac" fill-opacity="0.60"/><path d="M415.9,-13.4 L419.4,-20.0 L423.0,-26.4 L426.7,-32.8 L430.7,-38.9 L434.8,-45.0 L439.1,-51.0 L443.6,-56.8 L448.2,-62.6 L448.2,-62.6 L443.0,-57.3 L438.1,-51.8 L433.5,-45.9 L429.3,-39.9 L425.4,-33.6 L421.9,-27.0 L418.7,-20.3 L415.9,-13.4Z" fill="#acacac" fill-opacity="0.66"/><path d="M33.8,427.0 L40.0,424.5 L46.2,421.7 L52.4,418.8 L58.4,415.8 L64.4,412.6 L70.2,409.2 L76.1,405.7 L81.7,402.1 L81.7,402.1 L75.6,404.9 L69.5,407.9 L63.5,410.9 L57.4,413.9 L51.5,417.1 L45.5,420.3 L39.6,423.6 L33.8,427.0Z" fill="#acacac" fill-opacity="0.52"/><path d="M494.7,101.9 L501.1,99.7 L507.4,97.3 L513.6,94.7 L519.7,91.9 L525.8,89.0 L531.7,85.9 L537.6,82.6 L543.4,79.2 L543.4,79.2 L537.3,82.0 L531.3,84.9 L525.2,87.8 L519.1,90.6 L513.0,93.5 L506.9,96.3 L500.8,99.1 L494.7,101.9Z" fill="#acacac" fill-opacity="0.52"/><path d="M406.1,130.1 L409.5,129.1 L412.8,128.3 L416.1,127.7 L419.4,127.3 L422.6,127.1 L425.9,127.1 L429.4,127.3 L432.9,127.6 L432.9,127.6 L429.6,126.2 L426.1,125.4 L422.6,125.0 L419.1,125.1 L415.7,125.6 L412.4,126.7 L409.1,128.2 L406.1,130.1Z" fill="#acacac" fill-opacity="0.31"/><path d="M251.7,298.4 L256.8,298.2 L261.9,297.7 L266.9,296.8 L271.8,295.6 L276.6,294.1 L281.4,292.4 L286.0,290.3 L290.5,287.9 L290.5,287.9 L285.7,289.4 L280.9,290.9 L276.1,292.4 L271.3,293.7 L266.5,295.0 L261.6,296.2 L256.7,297.3 L251.7,298.4Z" fill="#acacac" fill-opacity="0.63"/><path d="M397.9,463.1 L400.3,461.1 L402.5,458.8 L404.5,456.4 L406.4,453.9 L408.0,451.2 L409.4,448.4 L410.6,445.5 L411.6,442.5 L411.6,442.5 L409.8,445.1 L408.1,447.7 L406.4,450.3 L404.8,452.8 L403.1,455.4 L401.4,457.9 L399.6,460.5 L397.9,463.1Z" fill="#acacac" fill-opacity="0.63"/><path d="M96.2,197.6 L103.3,192.7 L110.3,187.8 L117.3,183.0 L124.3,178.3 L131.4,173.5 L138.6,168.9 L145.7,164.3 L152.9,159.6 L152.9,159.6 L145.3,163.5 L137.8,167.7 L130.5,172.1 L123.3,176.7 L116.3,181.6 L109.4,186.7 L102.7,192.0 L96.2,197.6Z" fill="#acacac" fill-opacity="0.33"/><path d="M508.1,12.5 L514.5,7.5 L520.8,2.4 L526.8,-2.9 L532.8,-8.4 L538.6,-14.0 L544.2,-19.8 L549.7,-25.7 L555.1,-31.8 L555.1,-31.8 L548.9,-26.5 L542.9,-21.2 L536.9,-15.8 L531.0,-10.3 L525.2,-4.7 L519.4,0.9 L513.7,6.7 L508.1,12.5Z" fill="#acacac" fill-opacity="0.50"/><path d="M456.7,426.4 L460.0,419.8 L463.1,413.2 L466.1,406.5 L468.9,399.7 L471.6,392.9 L474.1,386.0 L476.5,379.1 L478.7,372.1 L478.7,372.1 L475.4,378.7 L472.3,385.3 L469.4,392.0 L466.5,398.8 L463.9,405.6 L461.3,412.5 L458.9,419.4 L456.7,426.4Z" fill="#acacac" fill-opacity="0.63"/><path d="M458.1,352.5 L462.6,350.4 L466.9,347.9 L470.8,344.9 L474.4,341.6 L477.6,338.0 L480.5,334.0 L483.0,329.8 L485.1,325.2 L485.1,325.2 L482.1,329.2 L479.1,333.0 L475.9,336.5 L472.7,340.0 L469.3,343.3 L465.8,346.4 L462.0,349.5 L458.1,352.5Z" fill="#acacac" fill-opacity="0.63"/><path d="M34.3,227.3 L40.4,224.5 L46.5,221.7 L52.6,218.8 L58.6,215.9 L64.6,212.9 L70.6,209.9 L76.6,206.8 L82.6,203.7 L82.6,203.7 L76.1,205.8 L69.8,208.2 L63.6,210.8 L57.5,213.7 L51.5,216.7 L45.6,220.0 L39.9,223.5 L34.3,227.3Z" fill="#acacac" fill-opacity="0.55"/><path d="M355.3,180.1 L358.8,179.1 L362.1,177.7 L365.4,176.1 L368.4,174.3 L371.4,172.2 L374.1,169.9 L376.7,167.4 L379.0,164.6 L379.0,164.6 L375.9,166.4 L372.9,168.3 L370.0,170.2 L367.0,172.1 L364.1,174.1 L361.2,176.0 L358.2,178.0 L355.3,180.1Z" fill="#acacac" fill-opacity="0.72"/><path d="M306.3,527.6 L312.0,527.6 L317.7,527.7 L323.4,528.0 L329.0,528.5 L334.6,529.2 L340.2,530.1 L345.7,531.2 L351.4,532.4 L351.4,532.4 L345.9,530.5 L340.4,529.0 L334.8,527.8 L329.1,527.0 L323.4,526.6 L317.7,526.6 L312.0,526.9 L306.3,527.6Z" fill="#acacac" fill-opacity="0.71"/><path d="M135.4,425.4 L140.8,424.9 L146.2,424.4 L151.5,423.9 L156.8,423.5 L162.1,423.1 L167.5,422.7 L172.8,422.3 L178.2,421.9 L178.2,421.9 L172.8,421.3 L167.4,421.1 L162.0,421.1 L156.7,421.4 L151.3,422.0 L146.0,422.8 L140.7,424.0 L135.4,425.4Z" fill="#acacac" fill-opacity="0.80"/><path d="M44.2,-5.5 L49.7,-12.3 L55.1,-19.1 L60.7,-25.7 L66.3,-32.2 L72.0,-38.7 L77.8,-45.0 L83.8,-51.3 L89.8,-57.6 L89.8,-57.6 L83.0,-52.2 L76.5,-46.3 L70.3,-40.2 L64.5,-33.8 L58.9,-27.2 L53.7,-20.2 L48.8,-13.0 L44.2,-5.5Z" fill="#acacac" fill-opacity="0.55"/><path d="M135.2,97.8 L139.6,93.7 L144.0,89.8 L148.5,85.9 L153.0,82.2 L157.5,78.5 L162.1,74.8 L166.8,71.2 L171.6,67.6 L171.6,67.6 L166.3,70.5 L161.3,73.6 L156.4,77.0 L151.7,80.6 L147.2,84.5 L143.0,88.7 L139.0,93.1 L135.2,97.8Z" fill="#acacac" fill-opacity="0.57"/><path d="M110.1,105.9 L112.9,99.2 L115.6,92.6 L118.3,85.9 L121.0,79.3 L123.7,72.7 L126.4,66.0 L129.1,59.4 L131.8,52.7 L131.8,52.7 L128.3,59.0 L125.1,65.5 L122.1,72.0 L119.2,78.6 L116.6,85.3 L114.2,92.1 L112.1,98.9 L110.1,105.9Z" fill="#acacac" fill-opacity="0.58"/><path d="M487.6,249.1 L492.2,246.1 L496.7,243.0 L501.2,239.9 L505.7,236.7 L510.1,233.5 L514.5,230.3 L518.9,227.1 L523.3,223.7 L523.3,223.7 L518.3,226.1 L513.5,228.8 L508.8,231.7 L504.3,234.8 L499.9,238.1 L495.6,241.6 L491.5,245.2 L487.6,249.1Z" fill="#acacac" fill-opacity="0.29"/><path d="M430.2,170.0 L432.9,167.1 L435.2,164.1 L437.3,160.9 L439.1,157.5 L440.6,154.0 L441.7,150.3 L442.6,146.5 L443.0,142.7 L443.0,142.7 L441.6,146.3 L440.2,149.8 L438.7,153.2 L437.1,156.6 L435.5,159.9 L433.8,163.2 L432.0,166.6 L430.2,170.0Z" fill="#acacac" fill-opacity="0.30"/><path d="M363.2,140.9 L368.6,134.8 L373.7,128.6 L378.7,122.2 L383.6,115.8 L388.3,109.2 L392.9,102.5 L397.3,95.7 L401.5,88.8 L401.5,88.8 L396.6,95.2 L391.7,101.6 L386.8,108.1 L382.0,114.6 L377.3,121.1 L372.5,127.6 L367.8,134.2 L363.2,140.9Z" fill="#acacac" fill-opacity="0.69"/><path d="M480.2,495.6 L488.3,495.6 L496.3,495.5 L504.3,495.5 L512.4,495.4 L520.4,495.3 L528.4,495.3 L536.4,495.2 L544.5,495.0 L544.5,495.0 L536.5,494.1 L528.4,493.5 L520.4,493.1 L512.3,493.1 L504.3,493.3 L496.2,493.8 L488.2,494.5 L480.2,495.6Z" fill="#acacac" fill-opacity="0.45"/><path d="M386.2,374.0 L391.4,368.8 L396.3,363.3 L400.8,357.6 L405.1,351.7 L409.0,345.5 L412.6,339.1 L415.9,332.6 L418.8,325.8 L418.8,325.8 L415.2,332.2 L411.5,338.5 L407.6,344.6 L403.6,350.7 L399.5,356.6 L395.2,362.5 L390.8,368.3 L386.2,374.0Z" fill="#acacac" fill-opacity="0.56"/><path d="M80.9,87.1 L88.1,85.5 L95.1,84.2 L102.2,83.1 L109.3,82.3 L116.5,81.7 L123.6,81.4 L130.9,81.3 L138.2,81.5 L138.2,81.5 L130.9,80.5 L123.6,80.1 L116.4,80.1 L109.2,80.5 L102.0,81.5 L94.9,82.9 L87.9,84.8 L80.9,87.1Z" fill="#acacac" fill-opacity="0.76"/><path d="M-5.1,187.2 L-2.0,185.2 L0.9,183.3 L3.9,181.6 L6.9,180.0 L10.0,178.5 L13.1,177.1 L16.4,175.8 L19.8,174.6 L19.8,174.6 L16.1,174.7 L12.6,175.3 L9.1,176.3 L5.8,177.8 L2.7,179.6 L-0.2,181.8 L-2.8,184.3 L-5.1,187.2Z" fill="#acacac" fill-opacity="0.73"/><path d="M254.6,465.3 L258.1,461.5 L261.5,457.8 L265.1,454.2 L268.6,450.7 L272.3,447.2 L276.0,443.8 L279.8,440.4 L283.6,437.0 L283.6,437.0 L279.2,439.7 L275.1,442.7 L271.1,445.9 L267.4,449.4 L263.8,453.0 L260.5,456.9 L257.4,461.0 L254.6,465.3Z" fill="#acacac" fill-opacity="0.42"/><path d="M226.5,409.8 L228.5,405.5 L230.1,401.0 L231.3,396.5 L232.2,391.9 L232.6,387.3 L232.7,382.6 L232.4,377.9 L231.7,373.2 L231.7,373.2 L231.6,377.9 L231.4,382.6 L231.0,387.1 L230.4,391.7 L229.7,396.2 L228.8,400.7 L227.7,405.2 L226.5,409.8Z" fill="#acacac" fill-opacity="0.78"/><path d="M426.1,143.4 L430.0,143.8 L433.9,144.1 L437.7,144.6 L441.6,145.1 L445.4,145.6 L449.2,146.2 L453.0,146.9 L456.9,147.6 L456.9,147.6 L453.2,146.2 L449.4,145.1 L445.6,144.2 L441.8,143.6 L437.9,143.2 L433.9,143.0 L430.0,143.1 L426.1,143.4Z" fill="#acacac" fill-opacity="0.58"/><path d="M286.3,218.5 L292.3,219.7 L298.3,220.5 L304.3,221.0 L310.4,221.2 L316.4,221.0 L322.5,220.5 L328.5,219.7 L334.5,218.5 L334.5,218.5 L328.4,219.0 L322.4,219.3 L316.4,219.5 L310.4,219.6 L304.4,219.5 L298.4,219.3 L292.4,219.0 L286.3,218.5Z" fill="#acacac" fill-opacity="0.35"/><path d="M73.7,474.6 L77.2,471.1 L80.3,467.3 L83.0,463.3 L85.4,459.0 L87.5,454.6 L89.2,450.1 L90.5,445.4 L91.3,440.5 L91.3,440.5 L89.4,445.0 L87.5,449.4 L85.5,453.7 L83.4,458.0 L81.1,462.2 L78.8,466.3 L76.3,470.4 L73.7,474.6Z" fill="#acacac" fill-opacity="0.77"/><path d="M344.1,-12.3 L348.2,-16.4 L352.0,-20.5 L355.8,-24.8 L359.4,-29.2 L363.0,-33.7 L366.4,-38.3 L369.7,-42.9 L372.8,-47.7 L372.8,-47.7 L369.1,-43.4 L365.4,-39.1 L361.7,-34.7 L358.1,-30.3 L354.5,-25.9 L351.0,-21.4 L347.5,-16.9 L344.1,-12.3Z" fill="#acacac" fill-opacity="0.76"/><path d="M61.6,412.7 L66.0,408.1 L70.4,403.6 L75.0,399.4 L79.7,395.3 L84.5,391.3 L89.4,387.5 L94.5,383.9 L99.8,380.3 L99.8,380.3 L94.0,383.0 L88.5,386.2 L83.2,389.7 L78.2,393.6 L73.6,397.9 L69.2,402.5 L65.2,407.4 L61.6,412.7Z" fill="#acacac" fill-opacity="0.58"/><path d="M30.4,313.6 L33.2,310.9 L35.8,308.0 L38.2,305.1 L40.6,302.0 L42.7,298.9 L44.8,295.7 L46.7,292.4 L48.5,288.9 L48.5,288.9 L46.0,291.9 L43.6,294.9 L41.3,297.9 L39.1,300.9 L36.8,304.0 L34.7,307.2 L32.5,310.3 L30.4,313.6Z" fill="#acacac" fill-opacity="0.52"/><path d="M97.1,318.5 L102.2,312.8 L107.0,307.0 L111.8,301.1 L116.3,295.1 L120.7,288.9 L125.0,282.7 L129.1,276.3 L133.0,269.8 L133.0,269.8 L128.2,275.6 L123.4,281.5 L118.8,287.5 L114.3,293.5 L109.8,299.7 L105.5,305.9 L101.2,312.1 L97.1,318.5Z" fill="#acacac" fill-opacity="0.46"/><path d="M61.7,244.3 L67.8,240.1 L73.9,235.9 L80.0,232.0 L86.2,228.3 L92.6,224.7 L99.0,221.2 L105.5,217.9 L112.2,214.7 L112.2,214.7 L105.1,217.0 L98.3,219.7 L91.6,222.8 L85.1,226.4 L78.9,230.3 L72.9,234.6 L67.2,239.2 L61.7,244.3Z" fill="#acacac" fill-opacity="0.35"/><path d="M146.2,249.4 L151.6,246.5 L156.7,243.2 L161.4,239.6 L165.9,235.6 L170.1,231.4 L174.0,226.7 L177.5,221.8 L180.6,216.6 L180.6,216.6 L176.7,221.3 L172.8,225.7 L168.7,230.0 L164.5,234.1 L160.2,238.1 L155.7,242.0 L151.0,245.7 L146.2,249.4Z" fill="#acacac" fill-opacity="0.60"/><path d="M248.4,290.3 L256.8,289.9 L265.2,289.1 L273.5,288.1 L281.8,286.7 L290.0,285.0 L298.2,283.0 L306.3,280.7 L314.3,278.0 L314.3,278.0 L306.0,279.5 L297.7,281.1 L289.5,282.6 L281.3,284.1 L273.1,285.7 L264.9,287.2 L256.6,288.7 L248.4,290.3Z" fill="#acacac" fill-opacity="0.66"/><path d="M49.5,475.0 L51.0,472.8 L52.5,470.8 L54.2,469.2 L55.9,467.7 L57.7,466.3 L59.7,465.1 L61.9,464.0 L64.4,463.0 L64.4,463.0 L61.7,463.2 L59.1,463.8 L56.8,464.8 L54.7,466.2 L52.9,468.0 L51.4,470.0 L50.3,472.4 L49.5,475.0Z" fill="#acacac" fill-opacity="0.69"/><path d="M482.3,278.3 L488.1,279.3 L493.8,279.9 L499.6,280.2 L505.4,280.2 L511.2,279.8 L516.9,279.1 L522.7,278.0 L528.3,276.6 L528.3,276.6 L522.5,277.2 L516.8,277.7 L511.1,278.1 L505.3,278.4 L499.6,278.5 L493.9,278.6 L488.1,278.5 L482.3,278.3Z" fill="#acacac" fill-opacity="0.79"/><path d="M188.7,24.1 L192.7,18.1 L196.8,12.3 L200.8,6.5 L205.0,0.8 L209.2,-4.8 L213.5,-10.4 L217.9,-16.0 L222.3,-21.6 L222.3,-21.6 L217.0,-16.8 L212.0,-11.7 L207.3,-6.3 L202.9,-0.7 L198.8,5.2 L195.1,11.3 L191.7,17.5 L188.7,24.1Z" fill="#acacac" fill-opacity="0.59"/><path d="M510.5,118.5 L512.6,116.0 L514.6,113.4 L516.5,110.8 L518.4,108.2 L520.2,105.5 L522.0,102.8 L523.8,100.1 L525.4,97.2 L525.4,97.2 L523.0,99.4 L520.7,101.8 L518.6,104.3 L516.6,106.9 L514.8,109.7 L513.2,112.5 L511.8,115.4 L510.5,118.5Z" fill="#acacac" fill-opacity="0.68"/><path d="M15.4,22.6 L16.8,20.5 L18.2,18.7 L19.7,17.0 L21.2,15.5 L22.9,14.2 L24.8,13.0 L26.8,11.9 L29.1,10.8 L29.1,10.8 L26.6,11.1 L24.2,11.8 L22.1,12.9 L20.1,14.3 L18.5,16.0 L17.1,17.9 L16.1,20.1 L15.4,22.6Z" fill="#acacac" fill-opacity="0.63"/><path d="M410.6,22.2 L418.1,20.1 L425.7,17.8 L433.1,15.4 L440.6,12.9 L448.0,10.4 L455.4,7.8 L462.8,5.2 L470.2,2.4 L470.2,2.4 L462.6,4.4 L455.0,6.6 L447.5,9.0 L440.1,11.4 L432.6,13.9 L425.3,16.6 L417.9,19.3 L410.6,22.2Z" fill="#acacac" fill-opacity="0.46"/><path d="M201.8,287.5 L204.3,284.0 L206.7,280.5 L209.2,277.0 L211.6,273.6 L214.2,270.2 L216.7,266.9 L219.3,263.5 L221.9,260.1 L221.9,260.1 L218.5,262.7 L215.3,265.7 L212.4,268.8 L209.7,272.2 L207.3,275.8 L205.2,279.5 L203.3,283.4 L201.8,287.5Z" fill="#acacac" fill-opacity="0.67"/><path d="M137.1,167.0 L138.2,161.0 L139.3,155.0 L140.7,149.2 L142.3,143.5 L144.1,137.8 L146.1,132.1 L148.4,126.5 L150.8,120.9 L150.8,120.9 L147.6,126.1 L144.8,131.6 L142.4,137.2 L140.5,142.9 L139.0,148.8 L137.9,154.8 L137.3,160.9 L137.1,167.0Z" fill="#acacac" fill-opacity="0.68"/><path d="M232.7,91.4 L236.3,87.7 L239.8,84.0 L243.3,80.3 L246.7,76.6 L250.1,72.9 L253.5,69.1 L256.9,65.3 L260.3,61.5 L260.3,61.5 L256.2,64.5 L252.2,67.8 L248.5,71.3 L244.9,75.0 L241.6,78.8 L238.4,82.8 L235.4,87.0 L232.7,91.4Z" fill="#acacac" fill-opacity="0.37"/><path d="M181.1,326.9 L184.4,323.7 L187.5,320.4 L190.6,317.0 L193.6,313.6 L196.5,310.1 L199.3,306.5 L202.1,302.8 L204.8,299.1 L204.8,299.1 L201.4,302.3 L198.2,305.5 L195.1,308.9 L192.1,312.3 L189.2,315.9 L186.4,319.5 L183.7,323.1 L181.1,326.9Z" fill="#acacac" fill-opacity="0.73"/><path d="M299.9,406.6 L303.2,403.0 L306.5,399.8 L309.9,396.7 L313.5,393.9 L317.3,391.3 L321.2,389.0 L325.3,386.8 L329.7,384.8 L329.7,384.8 L325.1,386.2 L320.7,388.0 L316.6,390.2 L312.7,392.7 L309.0,395.7 L305.7,399.0 L302.6,402.6 L299.9,406.6Z" fill="#acacac" fill-opacity="0.32"/><path d="M98.6,290.3 L105.6,289.6 L112.5,288.8 L119.5,288.0 L126.4,287.2 L133.3,286.4 L140.3,285.6 L147.2,284.8 L154.2,284.0 L154.2,284.0 L147.2,283.7 L140.1,283.8 L133.1,284.2 L126.1,284.8 L119.2,285.7 L112.3,287.0 L105.4,288.5 L98.6,290.3Z" fill="#acacac" fill-opacity="0.38"/><path d="M96.2,178.1 L96.5,170.2 L97.0,162.4 L97.6,154.7 L98.4,146.9 L99.4,139.2 L100.5,131.5 L101.8,123.8 L103.3,116.1 L103.3,116.1 L100.9,123.6 L99.0,131.2 L97.5,138.9 L96.4,146.7 L95.7,154.5 L95.4,162.3 L95.6,170.2 L96.2,178.1Z" fill="#acacac" fill-opacity="0.74"/><path d="M126.9,197.5 L134.6,197.8 L142.4,198.1 L150.1,198.5 L157.8,199.0 L165.5,199.5 L173.1,200.1 L180.9,200.8 L188.6,201.5 L188.6,201.5 L181.0,199.7 L173.4,198.3 L165.7,197.3 L157.9,196.6 L150.2,196.3 L142.4,196.3 L134.6,196.7 L126.9,197.5Z" fill="#acacac" fill-opacity="0.58"/><path d="M409.6,114.0 L415.4,114.8 L421.1,115.2 L426.9,115.2 L432.7,114.9 L438.4,114.2 L444.1,113.2 L449.7,111.8 L455.2,109.9 L455.2,109.9 L449.5,111.0 L443.8,111.9 L438.2,112.6 L432.5,113.2 L426.8,113.6 L421.1,113.9 L415.4,114.0 L409.6,114.0Z" fill="#acacac" fill-opacity="0.35"/><path d="M314.2,476.5 L318.9,472.7 L323.5,468.7 L327.8,464.4 L331.9,459.9 L335.8,455.3 L339.4,450.4 L342.9,445.4 L346.0,440.2 L346.0,440.2 L342.3,445.0 L338.5,449.7 L334.7,454.4 L330.8,459.0 L326.8,463.4 L322.7,467.9 L318.5,472.2 L314.2,476.5Z" fill="#acacac" fill-opacity="0.55"/><path d="M388.4,465.7 L394.7,460.5 L400.8,455.1 L406.8,449.5 L412.6,443.6 L418.1,437.6 L423.5,431.4 L428.6,425.1 L433.6,418.5 L433.6,418.5 L428.1,424.6 L422.6,430.6 L417.0,436.6 L411.4,442.5 L405.7,448.4 L400.0,454.2 L394.2,460.0 L388.4,465.7Z" fill="#acacac" fill-opacity="0.60"/><path d="M202.5,256.9 L206.9,250.8 L211.2,244.6 L215.5,238.3 L219.6,232.1 L223.7,225.8 L227.7,219.4 L231.6,213.0 L235.5,206.5 L235.5,206.5 L230.8,212.4 L226.4,218.5 L222.0,224.6 L217.8,230.9 L213.8,237.3 L209.9,243.7 L206.1,250.2 L202.5,256.9Z" fill="#acacac" fill-opacity="0.38"/><path d="M48.3,301.2 L53.6,298.2 L58.8,295.3 L64.0,292.5 L69.2,289.7 L74.5,287.0 L79.7,284.2 L85.1,281.6 L90.4,278.9 L90.4,278.9 L84.7,280.7 L79.1,282.8 L73.6,285.2 L68.2,287.9 L63.0,290.8 L57.9,294.0 L53.0,297.4 L48.3,301.2Z" fill="#acacac" fill-opacity="0.77"/></g><g filter="url(#cb2)"><path d="M336.4,258.7 L339.4,257.8 L342.1,256.6 L344.6,255.1 L346.9,253.3 L348.8,251.1 L350.5,248.7 L351.8,246.0 L352.8,243.1 L352.8,243.1 L351.3,245.7 L349.7,248.1 L347.9,250.3 L346.0,252.3 L343.9,254.1 L341.6,255.8 L339.1,257.3 L336.4,258.7Z" fill="#7e7e7e" fill-opacity="0.73"/><path d="M462.1,295.2 L464.6,290.2 L467.1,285.3 L469.6,280.3 L472.0,275.3 L474.5,270.3 L476.9,265.4 L479.3,260.4 L481.7,255.3 L481.7,255.3 L478.8,260.1 L476.0,264.9 L473.4,269.8 L470.9,274.8 L468.5,279.8 L466.2,284.9 L464.1,290.0 L462.1,295.2Z" fill="#7e7e7e" fill-opacity="0.59"/><path d="M142.1,427.3 L145.2,421.8 L148.3,416.3 L151.5,410.8 L154.8,405.4 L158.1,400.1 L161.6,394.8 L165.1,389.5 L168.6,384.3 L168.6,384.3 L164.6,389.2 L160.7,394.2 L157.1,399.4 L153.7,404.8 L150.5,410.2 L147.5,415.8 L144.7,421.5 L142.1,427.3Z" fill="#7e7e7e" fill-opacity="0.56"/><path d="M509.0,88.0 L512.6,82.7 L516.2,77.5 L520.0,72.3 L523.8,67.2 L527.6,62.2 L531.6,57.2 L535.6,52.3 L539.7,47.4 L539.7,47.4 L535.1,51.9 L530.8,56.6 L526.7,61.5 L522.7,66.5 L519.0,71.6 L515.4,76.9 L512.1,82.4 L509.0,88.0Z" fill="#7e7e7e" fill-opacity="0.47"/><path d="M276.4,477.8 L279.2,475.2 L281.8,472.4 L284.1,469.4 L286.3,466.3 L288.2,463.0 L289.8,459.6 L291.2,456.1 L292.3,452.5 L292.3,452.5 L290.7,455.9 L288.9,459.2 L287.1,462.4 L285.2,465.6 L283.2,468.7 L281.0,471.8 L278.8,474.8 L276.4,477.8Z" fill="#7e7e7e" fill-opacity="0.60"/><path d="M74.5,232.9 L81.9,229.4 L89.1,225.5 L96.0,221.4 L102.7,216.8 L109.2,211.9 L115.4,206.7 L121.4,201.2 L127.0,195.3 L127.0,195.3 L120.9,200.7 L114.8,206.0 L108.4,211.0 L102.0,215.8 L95.3,220.3 L88.6,224.7 L81.6,228.9 L74.5,232.9Z" fill="#7e7e7e" fill-opacity="0.66"/><path d="M133.6,511.7 L141.9,511.2 L150.3,510.5 L158.7,509.6 L167.0,508.6 L175.3,507.4 L183.6,506.0 L191.8,504.5 L200.0,502.7 L200.0,502.7 L191.7,503.9 L183.4,505.0 L175.1,506.2 L166.8,507.3 L158.5,508.4 L150.2,509.5 L141.9,510.6 L133.6,511.7Z" fill="#7e7e7e" fill-opacity="0.71"/><path d="M172.6,140.1 L177.0,137.5 L181.4,135.0 L185.8,132.6 L190.2,130.4 L194.7,128.3 L199.3,126.4 L204.0,124.5 L208.7,122.8 L208.7,122.8 L203.8,123.9 L199.0,125.4 L194.3,127.2 L189.7,129.3 L185.2,131.6 L180.8,134.1 L176.7,137.0 L172.6,140.1Z" fill="#7e7e7e" fill-opacity="0.31"/><path d="M420.9,254.6 L422.9,251.3 L425.1,248.1 L427.3,245.0 L429.6,242.0 L432.0,239.1 L434.6,236.3 L437.3,233.5 L440.1,230.8 L440.1,230.8 L436.9,233.1 L433.9,235.6 L431.1,238.3 L428.6,241.2 L426.3,244.3 L424.2,247.6 L422.4,251.0 L420.9,254.6Z" fill="#7e7e7e" fill-opacity="0.40"/><path d="M320.9,428.6 L326.1,424.2 L331.3,420.0 L336.6,415.9 L341.9,411.8 L347.3,407.8 L352.7,403.9 L358.2,400.0 L363.7,396.2 L363.7,396.2 L357.9,399.5 L352.1,403.0 L346.5,406.8 L341.1,410.7 L335.8,414.9 L330.7,419.3 L325.7,423.8 L320.9,428.6Z" fill="#7e7e7e" fill-opacity="0.76"/><path d="M495.1,509.4 L502.6,506.1 L510.1,503.1 L517.6,500.2 L525.2,497.5 L532.9,495.0 L540.7,492.7 L548.5,490.6 L556.4,488.7 L556.4,488.7 L548.4,490.0 L540.4,491.8 L532.6,493.9 L524.8,496.3 L517.2,499.1 L509.7,502.2 L502.3,505.6 L495.1,509.4Z" fill="#7e7e7e" fill-opacity="0.78"/><path d="M69.1,329.8 L77.4,329.7 L85.7,329.7 L93.9,329.8 L102.2,330.1 L110.4,330.5 L118.7,331.1 L126.9,331.7 L135.2,332.5 L135.2,332.5 L127.0,331.1 L118.8,330.1 L110.5,329.3 L102.2,328.8 L93.9,328.6 L85.6,328.7 L77.3,329.1 L69.1,329.8Z" fill="#7e7e7e" fill-opacity="0.28"/><path d="M155.6,470.9 L161.2,469.3 L166.8,468.1 L172.4,467.1 L178.0,466.4 L183.6,465.9 L189.3,465.8 L195.0,465.9 L200.8,466.2 L200.8,466.2 L195.0,465.3 L189.3,464.8 L183.6,464.7 L177.9,465.1 L172.2,465.9 L166.6,467.1 L161.1,468.8 L155.6,470.9Z" fill="#7e7e7e" fill-opacity="0.30"/><path d="M25.5,279.3 L29.0,276.6 L32.4,274.1 L35.9,271.6 L39.4,269.3 L43.1,267.1 L46.7,264.9 L50.5,262.9 L54.4,260.9 L54.4,260.9 L50.3,262.4 L46.3,264.1 L42.4,266.0 L38.7,268.2 L35.2,270.6 L31.8,273.3 L28.6,276.1 L25.5,279.3Z" fill="#7e7e7e" fill-opacity="0.53"/><path d="M84.2,146.7 L91.5,145.1 L98.9,143.8 L106.2,142.6 L113.5,141.5 L120.9,140.7 L128.3,140.0 L135.7,139.5 L143.2,139.1 L143.2,139.1 L135.7,138.9 L128.3,139.0 L120.8,139.5 L113.4,140.2 L106.0,141.4 L98.7,142.8 L91.4,144.6 L84.2,146.7Z" fill="#7e7e7e" fill-opacity="0.73"/><path d="M242.4,166.6 L248.0,162.5 L253.7,158.5 L259.5,154.9 L265.4,151.5 L271.5,148.4 L277.7,145.5 L284.1,142.9 L290.7,140.5 L290.7,140.5 L283.9,142.4 L277.4,144.6 L271.0,147.3 L264.8,150.4 L258.8,153.9 L253.1,157.7 L247.6,162.0 L242.4,166.6Z" fill="#7e7e7e" fill-opacity="0.44"/><path d="M305.3,223.5 L309.5,221.6 L313.7,219.6 L317.7,217.3 L321.6,214.9 L325.4,212.3 L329.1,209.5 L332.7,206.6 L336.2,203.5 L336.2,203.5 L332.4,206.1 L328.6,208.7 L324.7,211.3 L320.9,213.8 L317.1,216.3 L313.2,218.7 L309.2,221.1 L305.3,223.5Z" fill="#7e7e7e" fill-opacity="0.35"/><path d="M409.2,78.1 L410.6,72.3 L412.0,66.4 L413.4,60.6 L414.9,54.8 L416.4,49.0 L417.9,43.2 L419.5,37.5 L421.0,31.7 L421.0,31.7 L418.9,37.3 L416.9,43.0 L415.2,48.7 L413.6,54.5 L412.2,60.3 L411.0,66.2 L410.0,72.2 L409.2,78.1Z" fill="#7e7e7e" fill-opacity="0.60"/><path d="M456.9,200.5 L460.4,198.4 L463.9,196.3 L467.4,194.2 L470.9,192.1 L474.4,190.0 L477.9,187.8 L481.4,185.7 L484.8,183.5 L484.8,183.5 L481.1,185.1 L477.4,187.0 L473.8,188.9 L470.2,191.0 L466.8,193.2 L463.4,195.5 L460.1,197.9 L456.9,200.5Z" fill="#7e7e7e" fill-opacity="0.29"/><path d="M348.1,378.4 L351.4,379.4 L354.7,379.9 L358.0,380.1 L361.3,380.0 L364.6,379.6 L367.8,378.8 L370.9,377.7 L374.0,376.2 L374.0,376.2 L370.8,377.1 L367.5,377.8 L364.4,378.4 L361.2,378.7 L358.0,378.9 L354.7,378.9 L351.5,378.8 L348.1,378.4Z" fill="#7e7e7e" fill-opacity="0.53"/><path d="M444.0,121.2 L450.3,116.5 L456.6,111.7 L462.9,107.1 L469.2,102.4 L475.5,97.8 L481.9,93.3 L488.3,88.7 L494.8,84.2 L494.8,84.2 L488.0,88.2 L481.3,92.4 L474.8,96.8 L468.4,101.4 L462.1,106.1 L456.0,111.0 L449.9,116.0 L444.0,121.2Z" fill="#7e7e7e" fill-opacity="0.48"/><path d="M233.1,375.6 L240.9,371.8 L248.7,367.8 L256.4,363.6 L263.9,359.2 L271.3,354.6 L278.6,349.8 L285.8,344.8 L292.8,339.5 L292.8,339.5 L285.5,344.3 L278.1,348.9 L270.7,353.5 L263.2,358.1 L255.8,362.5 L248.2,366.9 L240.7,371.3 L233.1,375.6Z" fill="#7e7e7e" fill-opacity="0.76"/><path d="M160.1,439.2 L164.4,432.4 L168.5,425.6 L172.5,418.6 L176.2,411.5 L179.8,404.4 L183.2,397.1 L186.5,389.8 L189.5,382.4 L189.5,382.4 L185.9,389.6 L182.3,396.7 L178.7,403.8 L175.1,410.9 L171.4,418.0 L167.7,425.1 L163.9,432.1 L160.1,439.2Z" fill="#7e7e7e" fill-opacity="0.64"/><path d="M503.7,174.6 L508.5,171.8 L513.1,168.9 L517.7,165.8 L522.3,162.7 L526.7,159.5 L531.1,156.3 L535.4,152.9 L539.7,149.4 L539.7,149.4 L535.1,152.4 L530.5,155.5 L526.0,158.5 L521.5,161.7 L517.0,164.8 L512.6,168.0 L508.1,171.3 L503.7,174.6Z" fill="#7e7e7e" fill-opacity="0.59"/><path d="M18.2,410.3 L20.7,408.2 L22.9,405.8 L24.7,403.3 L26.1,400.5 L27.0,397.6 L27.6,394.5 L27.7,391.3 L27.4,388.0 L27.4,388.0 L27.1,391.3 L26.6,394.3 L25.9,397.2 L24.9,400.0 L23.6,402.7 L22.1,405.2 L20.3,407.8 L18.2,410.3Z" fill="#7e7e7e" fill-opacity="0.71"/><path d="M427.6,323.2 L434.0,320.0 L440.4,317.0 L446.8,314.3 L453.4,311.9 L460.0,309.7 L466.7,307.7 L473.6,306.0 L480.6,304.6 L480.6,304.6 L473.5,305.4 L466.5,306.8 L459.7,308.5 L453.0,310.7 L446.4,313.2 L440.0,316.2 L433.7,319.5 L427.6,323.2Z" fill="#7e7e7e" fill-opacity="0.53"/><path d="M380.0,454.9 L386.5,451.3 L392.8,447.4 L399.0,443.4 L405.1,439.2 L411.0,434.7 L416.8,430.1 L422.4,425.3 L427.9,420.4 L427.9,420.4 L422.0,424.9 L416.2,429.4 L410.3,433.8 L404.3,438.1 L398.3,442.4 L392.3,446.6 L386.2,450.8 L380.0,454.9Z" fill="#7e7e7e" fill-opacity="0.51"/><path d="M116.1,261.5 L119.7,259.3 L123.1,256.7 L126.1,253.8 L128.9,250.7 L131.4,247.4 L133.6,243.8 L135.4,240.0 L136.9,236.0 L136.9,236.0 L134.9,239.7 L132.7,243.3 L130.4,246.7 L127.9,249.9 L125.2,253.0 L122.4,256.0 L119.3,258.8 L116.1,261.5Z" fill="#7e7e7e" fill-opacity="0.35"/><path d="M503.2,71.7 L508.8,65.6 L514.3,59.3 L519.6,52.8 L524.7,46.3 L529.7,39.6 L534.5,32.8 L539.1,25.9 L543.6,18.9 L543.6,18.9 L538.6,25.6 L533.7,32.2 L528.7,38.9 L523.7,45.5 L518.6,52.1 L513.5,58.6 L508.3,65.2 L503.2,71.7Z" fill="#7e7e7e" fill-opacity="0.74"/><path d="M160.9,231.0 L162.6,227.5 L164.1,223.8 L165.2,220.1 L166.0,216.3 L166.4,212.4 L166.5,208.5 L166.3,204.6 L165.8,200.7 L165.8,200.7 L165.7,204.6 L165.6,208.5 L165.2,212.3 L164.7,216.1 L164.0,219.8 L163.1,223.5 L162.1,227.2 L160.9,231.0Z" fill="#7e7e7e" fill-opacity="0.34"/><path d="M334.5,444.1 L336.6,441.7 L338.6,439.3 L340.6,436.9 L342.5,434.4 L344.3,431.9 L346.2,429.3 L347.9,426.7 L349.6,424.0 L349.6,424.0 L347.4,426.3 L345.4,428.7 L343.4,431.1 L341.4,433.6 L339.6,436.1 L337.8,438.7 L336.1,441.4 L334.5,444.1Z" fill="#7e7e7e" fill-opacity="0.56"/><path d="M374.6,441.5 L377.5,440.0 L380.5,438.7 L383.5,437.5 L386.5,436.4 L389.6,435.4 L392.7,434.5 L395.9,433.8 L399.1,433.1 L399.1,433.1 L395.8,433.2 L392.5,433.6 L389.2,434.2 L386.1,435.1 L383.0,436.3 L380.1,437.8 L377.2,439.5 L374.6,441.5Z" fill="#7e7e7e" fill-opacity="0.40"/><path d="M311.5,169.6 L318.1,164.4 L324.7,159.2 L331.4,154.2 L338.2,149.3 L345.1,144.5 L352.1,139.9 L359.1,135.4 L366.3,130.9 L366.3,130.9 L358.8,134.9 L351.5,139.1 L344.4,143.5 L337.4,148.2 L330.7,153.2 L324.1,158.4 L317.7,163.9 L311.5,169.6Z" fill="#7e7e7e" fill-opacity="0.46"/><path d="M368.5,210.5 L373.3,206.9 L377.8,203.1 L382.0,198.9 L386.0,194.6 L389.7,189.9 L393.1,185.1 L396.2,180.0 L398.9,174.7 L398.9,174.7 L395.7,179.7 L392.3,184.5 L388.7,189.2 L385.0,193.7 L381.2,198.1 L377.1,202.4 L372.9,206.5 L368.5,210.5Z" fill="#7e7e7e" fill-opacity="0.53"/><path d="M76.4,318.7 L83.4,317.5 L90.3,316.5 L97.2,315.9 L104.1,315.5 L111.1,315.4 L118.0,315.6 L125.0,316.0 L132.0,316.7 L132.0,316.7 L125.1,315.4 L118.1,314.6 L111.1,314.2 L104.1,314.2 L97.1,314.7 L90.2,315.6 L83.2,316.9 L76.4,318.7Z" fill="#7e7e7e" fill-opacity="0.51"/><path d="M7.7,431.4 L9.7,423.3 L11.5,415.0 L12.9,406.8 L14.1,398.5 L15.0,390.1 L15.6,381.8 L15.9,373.4 L15.8,365.0 L15.8,365.0 L15.3,373.3 L14.6,381.7 L13.8,390.0 L12.8,398.3 L11.7,406.6 L10.5,414.9 L9.1,423.1 L7.7,431.4Z" fill="#7e7e7e" fill-opacity="0.59"/><path d="M133.0,209.7 L139.6,205.5 L146.0,201.0 L152.2,196.2 L158.1,191.1 L163.9,185.8 L169.4,180.3 L174.7,174.5 L179.7,168.4 L179.7,168.4 L174.2,174.1 L168.7,179.6 L163.0,184.9 L157.3,190.1 L151.4,195.2 L145.4,200.2 L139.2,205.0 L133.0,209.7Z" fill="#7e7e7e" fill-opacity="0.32"/><path d="M152.3,167.1 L155.0,165.7 L157.6,164.1 L160.2,162.4 L162.6,160.5 L164.9,158.5 L167.0,156.4 L169.1,154.1 L170.9,151.7 L170.9,151.7 L168.6,153.7 L166.3,155.7 L164.0,157.6 L161.7,159.5 L159.4,161.4 L157.1,163.3 L154.7,165.2 L152.3,167.1Z" fill="#7e7e7e" fill-opacity="0.32"/><path d="M387.3,280.3 L391.0,277.5 L394.5,274.4 L397.8,271.2 L400.9,267.8 L403.8,264.2 L406.5,260.5 L408.9,256.5 L411.2,252.5 L411.2,252.5 L408.4,256.2 L405.7,259.9 L402.8,263.5 L399.9,267.0 L396.9,270.4 L393.8,273.7 L390.6,277.0 L387.3,280.3Z" fill="#7e7e7e" fill-opacity="0.55"/><path d="M342.8,379.5 L343.9,375.2 L344.9,370.9 L346.1,366.6 L347.3,362.4 L348.5,358.2 L349.9,354.0 L351.3,349.8 L352.7,345.6 L352.7,345.6 L350.7,349.6 L348.9,353.7 L347.4,357.8 L346.0,362.0 L344.9,366.3 L344.0,370.7 L343.3,375.1 L342.8,379.5Z" fill="#7e7e7e" fill-opacity="0.44"/><path d="M91.2,246.6 L95.6,241.6 L99.9,236.7 L104.3,231.9 L108.7,227.1 L113.2,222.3 L117.8,217.5 L122.3,212.8 L127.0,208.1 L127.0,208.1 L121.9,212.4 L117.1,216.8 L112.4,221.4 L107.8,226.2 L103.4,231.1 L99.2,236.1 L95.1,241.3 L91.2,246.6Z" fill="#7e7e7e" fill-opacity="0.73"/><path d="M275.0,103.0 L279.2,100.5 L283.4,98.1 L287.6,95.8 L291.9,93.7 L296.2,91.6 L300.5,89.7 L305.0,87.8 L309.5,86.0 L309.5,86.0 L304.8,87.2 L300.2,88.8 L295.7,90.5 L291.3,92.5 L287.0,94.8 L282.9,97.3 L278.8,100.0 L275.0,103.0Z" fill="#7e7e7e" fill-opacity="0.51"/><path d="M497.1,169.1 L498.9,167.7 L500.7,166.4 L502.5,165.0 L504.3,163.7 L506.1,162.4 L507.9,161.1 L509.7,159.8 L511.6,158.5 L511.6,158.5 L509.5,159.3 L507.4,160.3 L505.4,161.4 L503.5,162.6 L501.7,164.1 L500.0,165.6 L498.5,167.3 L497.1,169.1Z" fill="#7e7e7e" fill-opacity="0.67"/><path d="M476.9,218.4 L479.7,218.0 L482.5,217.6 L485.3,217.2 L488.1,216.8 L490.8,216.4 L493.6,216.0 L496.4,215.6 L499.2,215.2 L499.2,215.2 L496.3,215.0 L493.5,215.0 L490.7,215.2 L487.9,215.5 L485.1,216.0 L482.3,216.6 L479.6,217.4 L476.9,218.4Z" fill="#7e7e7e" fill-opacity="0.39"/><path d="M47.3,231.5 L55.3,231.7 L63.3,232.0 L71.3,232.2 L79.2,232.6 L87.2,233.0 L95.2,233.5 L103.2,234.0 L111.2,234.6 L111.2,234.6 L103.2,233.4 L95.3,232.5 L87.3,231.8 L79.3,231.3 L71.3,231.0 L63.3,231.0 L55.3,231.1 L47.3,231.5Z" fill="#7e7e7e" fill-opacity="0.63"/><path d="M46.1,456.5 L52.1,452.5 L58.0,448.4 L63.9,444.3 L69.8,440.1 L75.7,435.9 L81.5,431.6 L87.3,427.3 L93.0,423.0 L93.0,423.0 L86.9,426.8 L80.9,430.8 L75.0,434.9 L69.1,439.0 L63.2,443.3 L57.5,447.6 L51.7,452.0 L46.1,456.5Z" fill="#7e7e7e" fill-opacity="0.67"/><path d="M115.2,322.3 L117.4,319.4 L119.7,316.7 L122.1,314.4 L124.6,312.2 L127.4,310.3 L130.3,308.6 L133.4,307.1 L136.8,305.8 L136.8,305.8 L133.2,306.6 L129.9,307.7 L126.7,309.3 L123.8,311.2 L121.2,313.5 L118.9,316.1 L116.9,319.0 L115.2,322.3Z" fill="#7e7e7e" fill-opacity="0.78"/><path d="M4.2,430.7 L11.8,429.8 L19.3,428.6 L26.7,427.1 L34.1,425.2 L41.4,423.1 L48.5,420.6 L55.6,417.8 L62.5,414.6 L62.5,414.6 L55.4,417.2 L48.2,419.6 L41.0,421.9 L33.7,424.0 L26.4,425.9 L19.1,427.6 L11.7,429.2 L4.2,430.7Z" fill="#7e7e7e" fill-opacity="0.58"/><path d="M14.0,223.0 L17.7,224.0 L21.4,224.7 L25.1,225.1 L28.9,225.2 L32.6,225.0 L36.4,224.5 L40.1,223.7 L43.7,222.5 L43.7,222.5 L39.9,223.1 L36.2,223.5 L32.5,223.8 L28.9,223.9 L25.2,223.9 L21.5,223.7 L17.8,223.4 L14.0,223.0Z" fill="#7e7e7e" fill-opacity="0.31"/><path d="M355.5,483.9 L357.8,481.7 L360.0,479.7 L362.3,477.7 L364.6,475.8 L367.0,474.0 L369.4,472.3 L372.0,470.7 L374.6,469.1 L374.6,469.1 L371.7,470.2 L368.9,471.5 L366.3,473.0 L363.8,474.8 L361.4,476.8 L359.3,479.0 L357.3,481.3 L355.5,483.9Z" fill="#7e7e7e" fill-opacity="0.33"/><path d="M305.3,84.4 L306.0,81.7 L306.7,79.1 L307.5,76.5 L308.3,73.9 L309.2,71.4 L310.1,68.9 L311.2,66.4 L312.2,63.8 L312.2,63.8 L310.6,66.1 L309.2,68.5 L308.0,71.0 L307.1,73.5 L306.3,76.2 L305.8,78.9 L305.4,81.6 L305.3,84.4Z" fill="#7e7e7e" fill-opacity="0.32"/><path d="M-16.2,199.8 L-10.7,199.7 L-5.2,199.2 L0.2,198.3 L5.5,197.0 L10.8,195.4 L15.9,193.4 L20.9,191.1 L25.8,188.5 L25.8,188.5 L20.7,190.6 L15.6,192.5 L10.4,194.2 L5.2,195.8 L-0.0,197.1 L-5.4,198.2 L-10.8,199.1 L-16.2,199.8Z" fill="#7e7e7e" fill-opacity="0.46"/><path d="M497.4,510.6 L500.7,507.4 L504.0,504.4 L507.4,501.6 L511.0,499.1 L514.7,496.9 L518.6,494.8 L522.7,492.9 L527.0,491.3 L527.0,491.3 L522.5,492.4 L518.2,493.9 L514.2,495.8 L510.3,498.1 L506.7,500.7 L503.3,503.7 L500.2,507.0 L497.4,510.6Z" fill="#7e7e7e" fill-opacity="0.39"/><path d="M64.3,259.9 L66.6,257.3 L68.8,254.7 L71.1,252.2 L73.4,249.7 L75.8,247.3 L78.2,244.9 L80.6,242.5 L83.1,240.1 L83.1,240.1 L80.2,242.0 L77.5,244.1 L74.9,246.4 L72.5,248.8 L70.2,251.4 L68.1,254.1 L66.1,256.9 L64.3,259.9Z" fill="#7e7e7e" fill-opacity="0.61"/><path d="M228.9,348.9 L232.7,345.5 L236.4,341.9 L239.9,338.2 L243.2,334.3 L246.4,330.3 L249.3,326.2 L252.2,321.9 L254.7,317.5 L254.7,317.5 L251.7,321.6 L248.6,325.6 L245.4,329.6 L242.2,333.5 L239.0,337.4 L235.6,341.2 L232.3,345.1 L228.9,348.9Z" fill="#7e7e7e" fill-opacity="0.30"/><path d="M452.0,85.5 L457.1,83.4 L462.2,81.4 L467.3,79.5 L472.4,77.7 L477.6,76.0 L482.8,74.3 L488.0,72.8 L493.3,71.3 L493.3,71.3 L487.9,72.2 L482.5,73.4 L477.2,74.8 L472.0,76.5 L466.9,78.4 L461.8,80.5 L456.9,82.9 L452.0,85.5Z" fill="#7e7e7e" fill-opacity="0.68"/><path d="M7.7,382.1 L10.8,378.7 L13.8,375.4 L16.9,372.1 L19.9,368.8 L23.0,365.5 L26.1,362.2 L29.2,359.0 L32.4,355.7 L32.4,355.7 L28.8,358.5 L25.4,361.5 L22.1,364.6 L19.0,367.9 L16.0,371.3 L13.1,374.7 L10.3,378.3 L7.7,382.1Z" fill="#7e7e7e" fill-opacity="0.58"/><path d="M230.3,524.1 L238.5,524.5 L246.8,524.8 L255.1,525.0 L263.4,525.3 L271.6,525.5 L279.9,525.7 L288.2,525.8 L296.5,525.9 L296.5,525.9 L288.2,525.2 L280.0,524.7 L271.7,524.3 L263.4,524.0 L255.1,523.8 L246.8,523.8 L238.6,523.8 L230.3,524.1Z" fill="#7e7e7e" fill-opacity="0.47"/><path d="M386.7,61.9 L393.9,60.4 L401.1,59.2 L408.3,58.3 L415.5,57.6 L422.7,57.1 L430.0,56.9 L437.3,56.9 L444.6,57.2 L444.6,57.2 L437.3,56.3 L430.0,55.9 L422.7,55.9 L415.4,56.3 L408.1,57.1 L400.9,58.2 L393.8,59.8 L386.7,61.9Z" fill="#7e7e7e" fill-opacity="0.63"/><path d="M316.6,123.0 L324.9,122.7 L333.2,122.4 L341.5,122.4 L349.7,122.5 L358.0,122.8 L366.3,123.3 L374.5,123.9 L382.8,124.7 L382.8,124.7 L374.6,123.3 L366.3,122.3 L358.1,121.6 L349.8,121.2 L341.5,121.2 L333.2,121.5 L324.9,122.1 L316.6,123.0Z" fill="#7e7e7e" fill-opacity="0.29"/><path d="M127.2,474.3 L132.5,469.2 L137.7,464.1 L142.8,458.9 L147.9,453.7 L152.9,448.3 L157.9,442.9 L162.7,437.5 L167.5,432.0 L167.5,432.0 L162.3,437.1 L157.1,442.3 L152.0,447.5 L147.0,452.8 L141.9,458.1 L137.0,463.4 L132.0,468.8 L127.2,474.3Z" fill="#7e7e7e" fill-opacity="0.51"/><path d="M453.3,415.2 L456.9,417.0 L460.7,418.5 L464.5,419.6 L468.4,420.2 L472.4,420.5 L476.4,420.3 L480.4,419.8 L484.3,418.8 L484.3,418.8 L480.3,419.2 L476.3,419.4 L472.4,419.3 L468.6,419.0 L464.8,418.4 L460.9,417.6 L457.1,416.5 L453.3,415.2Z" fill="#7e7e7e" fill-opacity="0.38"/><path d="M64.2,121.2 L68.8,119.8 L73.5,118.5 L78.1,117.2 L82.8,115.9 L87.4,114.6 L92.1,113.3 L96.8,112.1 L101.4,110.8 L101.4,110.8 L96.6,111.5 L91.9,112.4 L87.1,113.4 L82.4,114.6 L77.8,116.0 L73.2,117.5 L68.6,119.3 L64.2,121.2Z" fill="#7e7e7e" fill-opacity="0.77"/><path d="M228.5,69.5 L231.9,66.5 L235.2,63.3 L238.5,60.1 L241.6,56.8 L244.7,53.3 L247.7,49.9 L250.6,46.3 L253.3,42.6 L253.3,42.6 L250.1,45.9 L246.9,49.2 L243.8,52.5 L240.7,55.9 L237.6,59.2 L234.5,62.6 L231.5,66.1 L228.5,69.5Z" fill="#7e7e7e" fill-opacity="0.57"/><path d="M303.3,247.0 L307.9,245.1 L312.4,242.8 L316.6,240.2 L320.7,237.4 L324.5,234.3 L328.1,230.9 L331.5,227.3 L334.7,223.4 L334.7,223.4 L331.1,226.9 L327.4,230.2 L323.7,233.4 L319.9,236.4 L315.9,239.2 L311.9,241.9 L307.6,244.5 L303.3,247.0Z" fill="#7e7e7e" fill-opacity="0.35"/><path d="M367.9,92.7 L372.6,87.4 L377.0,81.8 L381.2,76.1 L385.2,70.2 L388.8,64.2 L392.2,58.0 L395.3,51.6 L398.1,45.0 L398.1,45.0 L394.8,51.3 L391.4,57.5 L387.8,63.6 L384.1,69.5 L380.2,75.4 L376.3,81.2 L372.1,87.0 L367.9,92.7Z" fill="#7e7e7e" fill-opacity="0.33"/><path d="M505.2,19.6 L508.4,20.8 L511.7,21.7 L515.0,22.4 L518.4,22.9 L521.8,23.1 L525.2,23.2 L528.5,23.0 L531.9,22.6 L531.9,22.6 L528.5,22.4 L525.2,22.2 L521.8,21.9 L518.5,21.6 L515.2,21.2 L511.9,20.7 L508.6,20.2 L505.2,19.6Z" fill="#7e7e7e" fill-opacity="0.46"/><path d="M59.5,473.9 L65.6,472.6 L71.5,470.9 L77.4,468.8 L83.0,466.4 L88.5,463.5 L93.7,460.3 L98.8,456.7 L103.6,452.7 L103.6,452.7 L98.4,456.2 L93.2,459.4 L87.9,462.4 L82.4,465.2 L76.9,467.7 L71.2,470.0 L65.4,472.0 L59.5,473.9Z" fill="#7e7e7e" fill-opacity="0.62"/><path d="M506.2,346.7 L510.7,348.0 L515.2,349.0 L519.8,349.7 L524.4,350.2 L529.0,350.5 L533.6,350.6 L538.2,350.4 L542.8,350.0 L542.8,350.0 L538.2,349.8 L533.6,349.6 L529.0,349.3 L524.5,349.0 L519.9,348.5 L515.4,348.0 L510.8,347.4 L506.2,346.7Z" fill="#7e7e7e" fill-opacity="0.62"/><path d="M473.2,286.4 L478.0,285.2 L482.8,283.8 L487.5,282.4 L492.3,280.9 L497.0,279.4 L501.6,277.7 L506.3,276.0 L510.9,274.2 L510.9,274.2 L506.1,275.4 L501.3,276.8 L496.6,278.2 L491.9,279.7 L487.2,281.3 L482.5,282.9 L477.8,284.6 L473.2,286.4Z" fill="#7e7e7e" fill-opacity="0.57"/><path d="M124.3,523.5 L128.4,521.1 L132.3,518.5 L136.0,515.5 L139.4,512.3 L142.6,508.9 L145.5,505.2 L148.1,501.3 L150.4,497.1 L150.4,497.1 L147.6,500.9 L144.7,504.6 L141.7,508.1 L138.5,511.4 L135.2,514.6 L131.7,517.7 L128.1,520.7 L124.3,523.5Z" fill="#7e7e7e" fill-opacity="0.66"/><path d="M374.3,226.0 L378.8,220.7 L383.1,215.2 L387.3,209.6 L391.2,203.9 L395.0,198.1 L398.7,192.2 L402.2,186.2 L405.4,180.0 L405.4,180.0 L401.6,185.9 L397.8,191.7 L394.0,197.4 L390.2,203.2 L386.3,208.9 L382.3,214.6 L378.3,220.3 L374.3,226.0Z" fill="#7e7e7e" fill-opacity="0.70"/><path d="M57.1,294.0 L60.3,289.0 L63.6,284.0 L67.0,279.2 L70.6,274.6 L74.2,270.0 L78.1,265.5 L82.0,261.2 L86.2,256.8 L86.2,256.8 L81.6,260.7 L77.3,264.9 L73.3,269.2 L69.5,273.8 L66.0,278.5 L62.8,283.5 L59.8,288.6 L57.1,294.0Z" fill="#7e7e7e" fill-opacity="0.69"/><path d="M380.6,125.5 L386.1,123.2 L391.5,120.7 L396.7,117.9 L401.8,114.9 L406.7,111.5 L411.5,108.0 L416.0,104.1 L420.4,100.0 L420.4,100.0 L415.7,103.7 L410.9,107.2 L406.0,110.5 L401.1,113.8 L396.1,116.9 L391.0,119.9 L385.8,122.7 L380.6,125.5Z" fill="#7e7e7e" fill-opacity="0.73"/><path d="M82.4,248.9 L87.8,247.5 L93.0,245.9 L98.2,243.9 L103.2,241.7 L108.1,239.2 L112.8,236.4 L117.4,233.4 L121.8,230.0 L121.8,230.0 L117.0,232.8 L112.3,235.6 L107.5,238.1 L102.6,240.5 L97.7,242.8 L92.7,244.9 L87.6,247.0 L82.4,248.9Z" fill="#7e7e7e" fill-opacity="0.40"/><path d="M358.9,150.7 L367.7,150.5 L376.4,150.6 L385.0,151.0 L393.7,151.6 L402.3,152.4 L410.9,153.5 L419.5,154.8 L428.1,156.4 L428.1,156.4 L419.6,154.3 L411.0,152.5 L402.4,151.2 L393.8,150.3 L385.1,149.8 L376.4,149.7 L367.7,149.9 L358.9,150.7Z" fill="#7e7e7e" fill-opacity="0.50"/><path d="M63.7,46.5 L64.5,42.6 L65.2,38.8 L65.9,34.9 L66.7,31.0 L67.4,27.2 L68.2,23.3 L68.9,19.4 L69.7,15.5 L69.7,15.5 L68.4,19.3 L67.2,23.1 L66.2,26.9 L65.4,30.8 L64.7,34.7 L64.2,38.6 L63.9,42.6 L63.7,46.5Z" fill="#7e7e7e" fill-opacity="0.66"/><path d="M170.9,517.6 L177.5,515.2 L184.0,512.5 L190.5,509.7 L196.8,506.7 L203.0,503.5 L209.2,500.1 L215.2,496.5 L221.2,492.7 L221.2,492.7 L214.9,495.9 L208.7,499.2 L202.5,502.4 L196.2,505.5 L189.9,508.6 L183.6,511.6 L177.3,514.6 L170.9,517.6Z" fill="#7e7e7e" fill-opacity="0.77"/><path d="M263.2,160.5 L266.0,158.1 L268.8,155.8 L271.7,153.5 L274.5,151.2 L277.4,148.9 L280.3,146.6 L283.2,144.4 L286.1,142.1 L286.1,142.1 L282.8,143.9 L279.7,145.8 L276.6,147.9 L273.7,150.1 L270.9,152.5 L268.2,155.1 L265.6,157.7 L263.2,160.5Z" fill="#7e7e7e" fill-opacity="0.56"/><path d="M20.8,172.2 L24.6,170.6 L28.4,169.3 L32.2,168.1 L36.0,167.2 L39.9,166.4 L43.8,165.8 L47.8,165.4 L51.9,165.2 L51.9,165.2 L47.8,164.8 L43.7,164.8 L39.7,165.2 L35.7,165.9 L31.8,166.9 L28.0,168.3 L24.3,170.1 L20.8,172.2Z" fill="#7e7e7e" fill-opacity="0.60"/><path d="M415.4,-13.9 L418.8,-20.5 L422.3,-27.0 L426.1,-33.3 L430.0,-39.5 L434.1,-45.6 L438.5,-51.6 L443.0,-57.4 L447.7,-63.1 L447.7,-63.1 L442.5,-57.8 L437.7,-52.2 L433.1,-46.3 L428.9,-40.3 L425.0,-34.0 L421.5,-27.5 L418.3,-20.8 L415.4,-13.9Z" fill="#7e7e7e" fill-opacity="0.66"/><path d="M494.2,101.4 L500.6,99.2 L506.8,96.7 L513.0,94.1 L519.2,91.3 L525.2,88.4 L531.2,85.3 L537.1,82.1 L542.9,78.7 L542.9,78.7 L536.8,81.6 L530.8,84.4 L524.7,87.3 L518.6,90.2 L512.5,93.0 L506.4,95.8 L500.3,98.6 L494.2,101.4Z" fill="#7e7e7e" fill-opacity="0.52"/><path d="M405.6,129.6 L408.9,128.4 L412.2,127.5 L415.5,126.8 L418.8,126.4 L422.1,126.2 L425.5,126.2 L428.9,126.5 L432.4,127.1 L432.4,127.1 L429.0,126.0 L425.6,125.2 L422.1,124.9 L418.7,125.1 L415.3,125.6 L412.0,126.5 L408.7,127.9 L405.6,129.6Z" fill="#7e7e7e" fill-opacity="0.31"/><path d="M33.8,226.8 L39.8,223.8 L45.8,220.8 L51.8,217.8 L57.8,214.8 L63.9,211.9 L69.9,209.0 L76.0,206.1 L82.1,203.2 L82.1,203.2 L75.7,205.5 L69.5,208.1 L63.4,210.8 L57.3,213.7 L51.3,216.7 L45.3,219.9 L39.5,223.3 L33.8,226.8Z" fill="#7e7e7e" fill-opacity="0.55"/><path d="M354.8,179.6 L358.1,178.3 L361.4,176.8 L364.5,175.1 L367.6,173.3 L370.5,171.2 L373.3,169.0 L376.0,166.6 L378.5,164.1 L378.5,164.1 L375.6,166.2 L372.7,168.2 L369.8,170.2 L366.9,172.2 L363.9,174.1 L360.9,175.9 L357.9,177.8 L354.8,179.6Z" fill="#7e7e7e" fill-opacity="0.72"/><path d="M43.7,-6.0 L49.0,-13.0 L54.3,-19.8 L59.7,-26.5 L65.4,-33.1 L71.1,-39.5 L77.0,-45.9 L83.1,-52.0 L89.3,-58.1 L89.3,-58.1 L82.7,-52.5 L76.3,-46.5 L70.2,-40.4 L64.4,-34.0 L58.8,-27.3 L53.5,-20.4 L48.5,-13.3 L43.7,-6.0Z" fill="#7e7e7e" fill-opacity="0.55"/><path d="M487.1,248.6 L491.6,245.4 L496.0,242.2 L500.4,239.0 L504.9,235.8 L509.3,232.6 L513.8,229.5 L518.3,226.4 L522.8,223.2 L522.8,223.2 L518.0,225.8 L513.3,228.7 L508.6,231.6 L504.1,234.7 L499.7,238.0 L495.4,241.4 L491.2,244.9 L487.1,248.6Z" fill="#7e7e7e" fill-opacity="0.29"/><path d="M362.7,140.4 L367.9,134.2 L373.0,127.9 L378.0,121.5 L382.8,115.1 L387.6,108.5 L392.2,101.9 L396.7,95.1 L401.0,88.3 L401.0,88.3 L396.2,94.8 L391.4,101.3 L386.6,107.8 L381.8,114.3 L377.0,120.8 L372.2,127.3 L367.5,133.8 L362.7,140.4Z" fill="#7e7e7e" fill-opacity="0.69"/><path d="M80.4,86.6 L87.5,84.9 L94.6,83.5 L101.7,82.4 L108.8,81.6 L116.0,81.0 L123.1,80.7 L130.4,80.7 L137.7,81.0 L137.7,81.0 L130.4,80.1 L123.1,79.7 L115.9,79.8 L108.7,80.3 L101.5,81.2 L94.4,82.6 L87.4,84.4 L80.4,86.6Z" fill="#7e7e7e" fill-opacity="0.76"/><path d="M-5.6,186.7 L-2.7,184.5 L0.2,182.4 L3.1,180.6 L6.2,179.0 L9.3,177.5 L12.5,176.2 L15.8,175.1 L19.3,174.1 L19.3,174.1 L15.7,174.5 L12.2,175.3 L8.8,176.4 L5.6,177.8 L2.5,179.6 L-0.4,181.6 L-3.1,184.0 L-5.6,186.7Z" fill="#7e7e7e" fill-opacity="0.73"/><path d="M254.1,464.8 L257.5,461.0 L260.9,457.2 L264.4,453.6 L268.0,450.0 L271.6,446.5 L275.3,443.1 L279.2,439.8 L283.1,436.5 L283.1,436.5 L278.8,439.3 L274.7,442.4 L270.8,445.6 L267.0,449.1 L263.5,452.7 L260.1,456.6 L257.0,460.6 L254.1,464.8Z" fill="#7e7e7e" fill-opacity="0.42"/><path d="M226.0,409.3 L227.9,404.9 L229.4,400.5 L230.6,396.0 L231.4,391.4 L231.9,386.8 L232.0,382.1 L231.8,377.4 L231.2,372.7 L231.2,372.7 L231.2,377.4 L231.0,382.1 L230.7,386.7 L230.1,391.2 L229.4,395.7 L228.4,400.2 L227.3,404.7 L226.0,409.3Z" fill="#7e7e7e" fill-opacity="0.78"/><path d="M425.6,142.9 L429.5,143.2 L433.4,143.6 L437.2,144.0 L441.1,144.5 L444.9,145.0 L448.7,145.6 L452.5,146.4 L456.4,147.1 L456.4,147.1 L452.7,145.8 L448.9,144.7 L445.1,143.8 L441.2,143.2 L437.4,142.8 L433.4,142.6 L429.5,142.6 L425.6,142.9Z" fill="#7e7e7e" fill-opacity="0.58"/><path d="M285.8,218.0 L291.8,219.1 L297.8,219.9 L303.8,220.4 L309.9,220.5 L315.9,220.4 L322.0,219.9 L328.0,219.1 L334.0,218.0 L334.0,218.0 L327.9,218.5 L321.9,218.9 L315.9,219.2 L309.9,219.2 L303.9,219.2 L297.9,218.9 L291.9,218.5 L285.8,218.0Z" fill="#7e7e7e" fill-opacity="0.35"/><path d="M61.1,412.2 L65.3,407.4 L69.7,402.9 L74.2,398.6 L78.9,394.4 L83.7,390.5 L88.7,386.8 L93.9,383.2 L99.3,379.8 L99.3,379.8 L93.6,382.7 L88.2,385.9 L83.0,389.5 L78.0,393.4 L73.4,397.7 L69.0,402.2 L64.9,407.0 L61.1,412.2Z" fill="#7e7e7e" fill-opacity="0.58"/><path d="M29.9,313.1 L32.6,310.3 L35.1,307.4 L37.5,304.4 L39.8,301.4 L42.0,298.3 L44.1,295.1 L46.1,291.8 L48.0,288.4 L48.0,288.4 L45.6,291.4 L43.3,294.5 L41.0,297.5 L38.8,300.6 L36.5,303.7 L34.3,306.8 L32.1,309.9 L29.9,313.1Z" fill="#7e7e7e" fill-opacity="0.52"/><path d="M96.6,318.0 L101.4,312.2 L106.2,306.2 L110.8,300.2 L115.3,294.2 L119.8,288.1 L124.1,281.9 L128.4,275.6 L132.5,269.3 L132.5,269.3 L127.9,275.3 L123.3,281.3 L118.8,287.3 L114.3,293.4 L109.8,299.5 L105.4,305.6 L101.0,311.8 L96.6,318.0Z" fill="#7e7e7e" fill-opacity="0.46"/><path d="M61.2,243.8 L67.2,239.4 L73.2,235.2 L79.3,231.2 L85.5,227.4 L91.9,223.8 L98.3,220.4 L105.0,217.2 L111.7,214.2 L111.7,214.2 L104.7,216.7 L97.9,219.5 L91.3,222.7 L84.9,226.2 L78.6,230.1 L72.6,234.4 L66.8,238.9 L61.2,243.8Z" fill="#7e7e7e" fill-opacity="0.35"/><path d="M145.7,248.9 L151.0,245.9 L156.0,242.5 L160.7,238.8 L165.2,234.9 L169.4,230.6 L173.2,226.0 L176.8,221.2 L180.1,216.1 L180.1,216.1 L176.4,220.9 L172.5,225.4 L168.5,229.8 L164.3,233.9 L159.9,237.9 L155.4,241.7 L150.6,245.4 L145.7,248.9Z" fill="#7e7e7e" fill-opacity="0.60"/><path d="M481.8,277.8 L487.6,278.7 L493.3,279.2 L499.1,279.5 L504.9,279.4 L510.7,279.1 L516.4,278.4 L522.1,277.4 L527.8,276.1 L527.8,276.1 L522.0,276.8 L516.3,277.4 L510.6,277.8 L504.9,278.1 L499.1,278.3 L493.4,278.3 L487.6,278.1 L481.8,277.8Z" fill="#7e7e7e" fill-opacity="0.79"/><path d="M188.2,23.6 L192.0,17.5 L195.8,11.5 L199.8,5.7 L204.0,-0.0 L208.2,-5.7 L212.6,-11.2 L217.1,-16.7 L221.8,-22.1 L221.8,-22.1 L216.7,-17.1 L211.9,-11.9 L207.3,-6.4 L202.9,-0.8 L198.8,5.0 L195.0,11.0 L191.5,17.2 L188.2,23.6Z" fill="#7e7e7e" fill-opacity="0.59"/><path d="M510.0,118.0 L512.0,115.4 L513.8,112.7 L515.7,110.1 L517.6,107.4 L519.4,104.8 L521.3,102.1 L523.1,99.4 L524.9,96.7 L524.9,96.7 L522.6,99.0 L520.5,101.5 L518.4,104.0 L516.5,106.7 L514.7,109.4 L513.0,112.2 L511.4,115.0 L510.0,118.0Z" fill="#7e7e7e" fill-opacity="0.68"/><path d="M14.9,22.1 L16.2,20.0 L17.6,18.1 L19.0,16.4 L20.6,14.9 L22.3,13.5 L24.2,12.3 L26.3,11.3 L28.6,10.3 L28.6,10.3 L26.1,10.7 L23.8,11.5 L21.7,12.5 L19.8,13.9 L18.1,15.6 L16.8,17.5 L15.7,19.7 L14.9,22.1Z" fill="#7e7e7e" fill-opacity="0.63"/><path d="M136.6,166.5 L137.5,160.4 L138.6,154.5 L139.9,148.6 L141.5,142.9 L143.4,137.2 L145.4,131.5 L147.8,125.9 L150.3,120.4 L150.3,120.4 L147.2,125.7 L144.5,131.1 L142.2,136.8 L140.3,142.5 L138.8,148.4 L137.6,154.3 L136.9,160.4 L136.6,166.5Z" fill="#7e7e7e" fill-opacity="0.68"/><path d="M232.2,90.9 L235.6,87.1 L239.0,83.2 L242.4,79.5 L245.8,75.7 L249.2,72.0 L252.7,68.3 L256.2,64.7 L259.8,61.0 L259.8,61.0 L255.8,64.2 L252.0,67.6 L248.4,71.2 L244.8,74.8 L241.5,78.7 L238.2,82.6 L235.1,86.7 L232.2,90.9Z" fill="#7e7e7e" fill-opacity="0.37"/><path d="M180.6,326.4 L183.8,323.1 L186.8,319.7 L189.9,316.3 L192.9,312.9 L195.8,309.4 L198.7,305.8 L201.5,302.2 L204.3,298.6 L204.3,298.6 L201.0,301.9 L197.9,305.2 L194.9,308.6 L191.9,312.0 L188.9,315.5 L186.1,319.1 L183.3,322.7 L180.6,326.4Z" fill="#7e7e7e" fill-opacity="0.73"/><path d="M299.4,406.1 L302.6,402.5 L305.9,399.2 L309.4,396.2 L313.0,393.4 L316.7,390.8 L320.7,388.4 L324.8,386.3 L329.2,384.3 L329.2,384.3 L324.6,385.7 L320.2,387.5 L316.1,389.7 L312.2,392.3 L308.6,395.2 L305.2,398.5 L302.2,402.1 L299.4,406.1Z" fill="#7e7e7e" fill-opacity="0.32"/><path d="M95.7,177.6 L95.8,169.7 L96.2,161.9 L96.8,154.1 L97.5,146.4 L98.5,138.7 L99.7,131.0 L101.2,123.3 L102.8,115.6 L102.8,115.6 L100.6,123.2 L98.8,130.8 L97.3,138.5 L96.3,146.2 L95.6,154.0 L95.2,161.9 L95.2,169.7 L95.7,177.6Z" fill="#7e7e7e" fill-opacity="0.74"/><path d="M126.4,197.0 L134.1,197.0 L141.9,197.2 L149.6,197.5 L157.3,197.9 L165.0,198.5 L172.7,199.2 L180.4,200.0 L188.1,201.0 L188.1,201.0 L180.5,199.4 L172.8,198.2 L165.1,197.3 L157.4,196.6 L149.6,196.3 L141.9,196.2 L134.1,196.4 L126.4,197.0Z" fill="#7e7e7e" fill-opacity="0.58"/><path d="M313.7,476.0 L318.4,472.2 L322.9,468.1 L327.2,463.8 L331.3,459.4 L335.2,454.7 L338.9,449.9 L342.3,444.9 L345.5,439.7 L345.5,439.7 L341.8,444.5 L338.1,449.3 L334.3,453.9 L330.4,458.5 L326.3,463.0 L322.2,467.4 L318.0,471.7 L313.7,476.0Z" fill="#7e7e7e" fill-opacity="0.55"/><path d="M387.9,465.2 L394.2,460.0 L400.3,454.5 L406.2,448.9 L411.9,443.0 L417.5,437.0 L422.9,430.9 L428.1,424.5 L433.1,418.0 L433.1,418.0 L427.6,424.1 L422.1,430.2 L416.6,436.2 L411.0,442.1 L405.3,448.0 L399.6,453.8 L393.8,459.5 L387.9,465.2Z" fill="#7e7e7e" fill-opacity="0.60"/><path d="M202.0,256.4 L206.3,250.2 L210.5,243.9 L214.6,237.6 L218.8,231.3 L222.9,225.0 L226.9,218.7 L231.0,212.4 L235.0,206.0 L235.0,206.0 L230.5,212.0 L226.1,218.2 L221.8,224.4 L217.7,230.6 L213.6,237.0 L209.6,243.4 L205.8,249.8 L202.0,256.4Z" fill="#7e7e7e" fill-opacity="0.38"/><path d="M47.8,300.7 L53.0,297.6 L58.1,294.6 L63.3,291.7 L68.5,288.9 L73.8,286.1 L79.1,283.5 L84.5,280.9 L89.9,278.4 L89.9,278.4 L84.3,280.3 L78.7,282.6 L73.3,285.0 L67.9,287.7 L62.7,290.6 L57.6,293.7 L52.6,297.1 L47.8,300.7Z" fill="#7e7e7e" fill-opacity="0.77"/></g></svg>
<div class="a" style="left:297px;top:198px;width:15px;height:530px;background:#fff;border-right:1px solid #222"></div>
<svg class="a" style="left:0;top:0" width="793" height="721"><path d="M310.50,198 V213" stroke="#111" stroke-width="1"/><path d="M315.50,209 V213" stroke="#111" stroke-width="1"/><path d="M321.50,209 V213" stroke="#111" stroke-width="1"/><path d="M326.50,209 V213" stroke="#111" stroke-width="1"/><path d="M332.50,209 V213" stroke="#111" stroke-width="1"/><path d="M337.50,206.5 V213" stroke="#111" stroke-width="1"/><path d="M343.50,209 V213" stroke="#111" stroke-width="1"/><path d="M348.50,209 V213" stroke="#111" stroke-width="1"/><path d="M353.50,209 V213" stroke="#111" stroke-width="1"/><path d="M359.50,209 V213" stroke="#111" stroke-width="1"/><path d="M364.50,198 V213" stroke="#111" stroke-width="1"/><path d="M370.50,209 V213" stroke="#111" stroke-width="1"/><path d="M375.50,209 V213" stroke="#111" stroke-width="1"/><path d="M381.50,209 V213" stroke="#111" stroke-width="1"/><path d="M386.50,209 V213" stroke="#111" stroke-width="1"/><path d="M392.50,206.5 V213" stroke="#111" stroke-width="1"/><path d="M397.50,209 V213" stroke="#111" stroke-width="1"/><path d="M402.50,209 V213" stroke="#111" stroke-width="1"/><path d="M408.50,209 V213" stroke="#111" stroke-width="1"/><path d="M413.50,209 V213" stroke="#111" stroke-width="1"/><path d="M419.50,198 V213" stroke="#111" stroke-width="1"/><path d="M424.50,209 V213" stroke="#111" stroke-width="1"/><path d="M430.50,209 V213" stroke="#111" stroke-width="1"/><path d="M435.50,209 V213" stroke="#111" stroke-width="1"/><path d="M441.50,209 V213" stroke="#111" stroke-width="1"/><path d="M446.50,206.5 V213" stroke="#111" stroke-width="1"/><path d="M451.50,209 V213" stroke="#111" stroke-width="1"/><path d="M457.50,209 V213" stroke="#111" stroke-width="1"/><path d="M462.50,209 V213" stroke="#111" stroke-width="1"/><path d="M468.50,209 V213" stroke="#111" stroke-width="1"/><path d="M473.50,198 V213" stroke="#111" stroke-width="1"/><path d="M479.50,209 V213" stroke="#111" stroke-width="1"/><path d="M484.50,209 V213" stroke="#111" stroke-width="1"/><path d="M490.50,209 V213" stroke="#111" stroke-width="1"/><path d="M495.50,209 V213" stroke="#111" stroke-width="1"/><path d="M500.50,206.5 V213" stroke="#111" stroke-width="1"/><path d="M506.50,209 V213" stroke="#111" stroke-width="1"/><path d="M511.50,209 V213" stroke="#111" stroke-width="1"/><path d="M517.50,209 V213" stroke="#111" stroke-width="1"/><path d="M522.50,209 V213" stroke="#111" stroke-width="1"/><path d="M528.50,198 V213" stroke="#111" stroke-width="1"/><path d="M533.50,209 V213" stroke="#111" stroke-width="1"/><path d="M539.50,209 V213" stroke="#111" stroke-width="1"/><path d="M544.50,209 V213" stroke="#111" stroke-width="1"/><path d="M549.50,209 V213" stroke="#111" stroke-width="1"/><path d="M555.50,206.5 V213" stroke="#111" stroke-width="1"/><path d="M560.50,209 V213" stroke="#111" stroke-width="1"/><path d="M566.50,209 V213" stroke="#111" stroke-width="1"/><path d="M571.50,209 V213" stroke="#111" stroke-width="1"/><path d="M577.50,209 V213" stroke="#111" stroke-width="1"/><path d="M582.50,198 V213" stroke="#111" stroke-width="1"/><path d="M588.50,209 V213" stroke="#111" stroke-width="1"/><path d="M593.50,209 V213" stroke="#111" stroke-width="1"/><path d="M598.50,209 V213" stroke="#111" stroke-width="1"/><path d="M604.50,209 V213" stroke="#111" stroke-width="1"/><path d="M609.50,206.5 V213" stroke="#111" stroke-width="1"/><path d="M615.50,209 V213" stroke="#111" stroke-width="1"/><path d="M620.50,209 V213" stroke="#111" stroke-width="1"/><path d="M626.50,209 V213" stroke="#111" stroke-width="1"/><path d="M631.50,209 V213" stroke="#111" stroke-width="1"/><path d="M637.50,198 V213" stroke="#111" stroke-width="1"/><path d="M642.50,209 V213" stroke="#111" stroke-width="1"/><path d="M647.50,209 V213" stroke="#111" stroke-width="1"/><path d="M653.50,209 V213" stroke="#111" stroke-width="1"/><path d="M658.50,209 V213" stroke="#111" stroke-width="1"/><path d="M664.50,206.5 V213" stroke="#111" stroke-width="1"/><path d="M669.50,209 V213" stroke="#111" stroke-width="1"/><path d="M675.50,209 V213" stroke="#111" stroke-width="1"/><path d="M680.50,209 V213" stroke="#111" stroke-width="1"/><path d="M686.50,209 V213" stroke="#111" stroke-width="1"/><path d="M691.50,198 V213" stroke="#111" stroke-width="1"/><path d="M696.50,209 V213" stroke="#111" stroke-width="1"/><path d="M702.50,209 V213" stroke="#111" stroke-width="1"/><path d="M707.50,209 V213" stroke="#111" stroke-width="1"/><path d="M713.50,209 V213" stroke="#111" stroke-width="1"/><path d="M718.50,206.5 V213" stroke="#111" stroke-width="1"/><path d="M724.50,209 V213" stroke="#111" stroke-width="1"/><path d="M729.50,209 V213" stroke="#111" stroke-width="1"/><path d="M735.50,209 V213" stroke="#111" stroke-width="1"/><path d="M740.50,209 V213" stroke="#111" stroke-width="1"/><path d="M745.50,198 V213" stroke="#111" stroke-width="1"/><path d="M751.50,209 V213" stroke="#111" stroke-width="1"/><path d="M756.50,209 V213" stroke="#111" stroke-width="1"/><path d="M762.50,209 V213" stroke="#111" stroke-width="1"/><path d="M767.50,209 V213" stroke="#111" stroke-width="1"/><path d="M773.50,206.5 V213" stroke="#111" stroke-width="1"/><path d="M778.50,209 V213" stroke="#111" stroke-width="1"/><path d="M784.50,209 V213" stroke="#111" stroke-width="1"/><path d="M789.50,209 V213" stroke="#111" stroke-width="1"/><path d="M794.50,209 V213" stroke="#111" stroke-width="1"/><path d="M297,213.50 H312" stroke="#444" stroke-width="1"/><path d="M308.5,218.50 H312" stroke="#111" stroke-width="1"/><path d="M308.5,223.50 H312" stroke="#111" stroke-width="1"/><path d="M308.5,229.50 H312" stroke="#111" stroke-width="1"/><path d="M308.5,234.50 H312" stroke="#111" stroke-width="1"/><path d="M306,240.50 H312" stroke="#111" stroke-width="1"/><path d="M308.5,245.50 H312" stroke="#111" stroke-width="1"/><path d="M308.5,250.50 H312" stroke="#111" stroke-width="1"/><path d="M308.5,256.50 H312" stroke="#111" stroke-width="1"/><path d="M308.5,261.50 H312" stroke="#111" stroke-width="1"/><path d="M297,267.50 H312" stroke="#444" stroke-width="1"/><path d="M308.5,272.50 H312" stroke="#111" stroke-width="1"/><path d="M308.5,277.50 H312" stroke="#111" stroke-width="1"/><path d="M308.5,283.50 H312" stroke="#111" stroke-width="1"/><path d="M308.5,288.50 H312" stroke="#111" stroke-width="1"/><path d="M306,294.50 H312" stroke="#111" stroke-width="1"/><path d="M308.5,299.50 H312" stroke="#111" stroke-width="1"/><path d="M308.5,304.50 H312" stroke="#111" stroke-width="1"/><path d="M308.5,310.50 H312" stroke="#111" stroke-width="1"/><path d="M308.5,315.50 H312" stroke="#111" stroke-width="1"/><path d="M297,321.50 H312" stroke="#444" stroke-width="1"/><path d="M308.5,326.50 H312" stroke="#111" stroke-width="1"/><path d="M308.5,332.50 H312" stroke="#111" stroke-width="1"/><path d="M308.5,337.50 H312" stroke="#111" stroke-width="1"/><path d="M308.5,342.50 H312" stroke="#111" stroke-width="1"/><path d="M306,348.50 H312" stroke="#111" stroke-width="1"/><path d="M308.5,353.50 H312" stroke="#111" stroke-width="1"/><path d="M308.5,359.50 H312" stroke="#111" stroke-width="1"/><path d="M308.5,364.50 H312" stroke="#111" stroke-width="1"/><path d="M308.5,369.50 H312" stroke="#111" stroke-width="1"/><path d="M297,375.50 H312" stroke="#444" stroke-width="1"/><path d="M308.5,380.50 H312" stroke="#111" stroke-width="1"/><path d="M308.5,386.50 H312" stroke="#111" stroke-width="1"/><path d="M308.5,391.50 H312" stroke="#111" stroke-width="1"/><path d="M308.5,396.50 H312" stroke="#111" stroke-width="1"/><path d="M306,402.50 H312" stroke="#111" stroke-width="1"/><path d="M308.5,407.50 H312" stroke="#111" stroke-width="1"/><path d="M308.5,413.50 H312" stroke="#111" stroke-width="1"/><path d="M308.5,418.50 H312" stroke="#111" stroke-width="1"/><path d="M308.5,423.50 H312" stroke="#111" stroke-width="1"/><path d="M297,429.50 H312" stroke="#444" stroke-width="1"/><path d="M308.5,434.50 H312" stroke="#111" stroke-width="1"/><path d="M308.5,440.50 H312" stroke="#111" stroke-width="1"/><path d="M308.5,445.50 H312" stroke="#111" stroke-width="1"/><path d="M308.5,451.50 H312" stroke="#111" stroke-width="1"/><path d="M306,456.50 H312" stroke="#111" stroke-width="1"/><path d="M308.5,461.50 H312" stroke="#111" stroke-width="1"/><path d="M308.5,467.50 H312" stroke="#111" stroke-width="1"/><path d="M308.5,472.50 H312" stroke="#111" stroke-width="1"/><path d="M308.5,478.50 H312" stroke="#111" stroke-width="1"/><path d="M297,483.50 H312" stroke="#444" stroke-width="1"/><path d="M308.5,488.50 H312" stroke="#111" stroke-width="1"/><path d="M308.5,494.50 H312" stroke="#111" stroke-width="1"/><path d="M308.5,499.50 H312" stroke="#111" stroke-width="1"/><path d="M308.5,505.50 H312" stroke="#111" stroke-width="1"/><path d="M306,510.50 H312" stroke="#111" stroke-width="1"/><path d="M308.5,515.50 H312" stroke="#111" stroke-width="1"/><path d="M308.5,521.50 H312" stroke="#111" stroke-width="1"/><path d="M308.5,526.50 H312" stroke="#111" stroke-width="1"/><path d="M308.5,532.50 H312" stroke="#111" stroke-width="1"/><path d="M297,537.50 H312" stroke="#444" stroke-width="1"/><path d="M308.5,543.50 H312" stroke="#111" stroke-width="1"/><path d="M308.5,548.50 H312" stroke="#111" stroke-width="1"/><path d="M308.5,553.50 H312" stroke="#111" stroke-width="1"/><path d="M308.5,559.50 H312" stroke="#111" stroke-width="1"/><path d="M306,564.50 H312" stroke="#111" stroke-width="1"/><path d="M308.5,570.50 H312" stroke="#111" stroke-width="1"/><path d="M308.5,575.50 H312" stroke="#111" stroke-width="1"/><path d="M308.5,580.50 H312" stroke="#111" stroke-width="1"/><path d="M308.5,586.50 H312" stroke="#111" stroke-width="1"/><path d="M297,591.50 H312" stroke="#444" stroke-width="1"/><path d="M308.5,597.50 H312" stroke="#111" stroke-width="1"/><path d="M308.5,602.50 H312" stroke="#111" stroke-width="1"/><path d="M308.5,607.50 H312" stroke="#111" stroke-width="1"/><path d="M308.5,613.50 H312" stroke="#111" stroke-width="1"/><path d="M306,618.50 H312" stroke="#111" stroke-width="1"/><path d="M308.5,624.50 H312" stroke="#111" stroke-width="1"/><path d="M308.5,629.50 H312" stroke="#111" stroke-width="1"/><path d="M308.5,634.50 H312" stroke="#111" stroke-width="1"/><path d="M308.5,640.50 H312" stroke="#111" stroke-width="1"/><path d="M297,645.50 H312" stroke="#444" stroke-width="1"/><path d="M308.5,651.50 H312" stroke="#111" stroke-width="1"/><path d="M308.5,656.50 H312" stroke="#111" stroke-width="1"/><path d="M308.5,662.50 H312" stroke="#111" stroke-width="1"/><path d="M308.5,667.50 H312" stroke="#111" stroke-width="1"/><path d="M306,672.50 H312" stroke="#111" stroke-width="1"/><path d="M308.5,678.50 H312" stroke="#111" stroke-width="1"/><path d="M308.5,683.50 H312" stroke="#111" stroke-width="1"/><path d="M308.5,689.50 H312" stroke="#111" stroke-width="1"/><path d="M308.5,694.50 H312" stroke="#111" stroke-width="1"/><path d="M297,699.50 H312" stroke="#444" stroke-width="1"/><path d="M308.5,705.50 H312" stroke="#111" stroke-width="1"/><path d="M308.5,710.50 H312" stroke="#111" stroke-width="1"/><path d="M308.5,716.50 H312" stroke="#111" stroke-width="1"/><path d="M308.5,721.50 H312" stroke="#111" stroke-width="1"/></svg>
<div class="t" style="top:196.96px;font-size:8.3px;line-height:12px;height:12px;left:639.04px;color:#1a1a1a;-webkit-text-stroke:0.3px #1a1a1a;">12</div>
<div class="t" style="top:196.96px;font-size:8.3px;line-height:12px;height:12px;left:693.48px;color:#1a1a1a;-webkit-text-stroke:0.3px #1a1a1a;">14</div>
<div class="t" style="top:196.96px;font-size:8.3px;line-height:12px;height:12px;left:747.92px;color:#1a1a1a;-webkit-text-stroke:0.3px #1a1a1a;">16</div>
<div class="t" style="top:267.26px;font-size:8.6px;line-height:10px;height:10px;left:298.80px;color:#222;-webkit-text-stroke:0.3px #222;">2</div>
<div class="t" style="top:321.36px;font-size:8.6px;line-height:10px;height:10px;left:298.80px;color:#222;-webkit-text-stroke:0.3px #222;">4</div>
<div class="t" style="top:375.46px;font-size:8.6px;line-height:10px;height:10px;left:298.80px;color:#222;-webkit-text-stroke:0.3px #222;">6</div>
<div class="t" style="top:429.56px;font-size:8.6px;line-height:10px;height:10px;left:298.80px;color:#222;-webkit-text-stroke:0.3px #222;">8</div>
<div class="t" style="top:483.66px;font-size:8.6px;line-height:10px;height:10px;left:298.80px;color:#222;-webkit-text-stroke:0.3px #222;">1</div>
<div class="t" style="top:490.26px;font-size:8.6px;line-height:10px;height:10px;left:298.80px;color:#222;-webkit-text-stroke:0.3px #222;">0</div>
<div class="t" style="top:537.76px;font-size:8.6px;line-height:10px;height:10px;left:298.80px;color:#222;-webkit-text-stroke:0.3px #222;">1</div>
<div class="t" style="top:544.36px;font-size:8.6px;line-height:10px;height:10px;left:298.80px;color:#222;-webkit-text-stroke:0.3px #222;">2</div>
<div class="t" style="top:591.86px;font-size:8.6px;line-height:10px;height:10px;left:298.80px;color:#222;-webkit-text-stroke:0.3px #222;">1</div>
<div class="t" style="top:598.46px;font-size:8.6px;line-height:10px;height:10px;left:298.80px;color:#222;-webkit-text-stroke:0.3px #222;">4</div>
<div class="t" style="top:645.96px;font-size:8.6px;line-height:10px;height:10px;left:298.80px;color:#222;-webkit-text-stroke:0.3px #222;">1</div>
<div class="t" style="top:652.56px;font-size:8.6px;line-height:10px;height:10px;left:298.80px;color:#222;-webkit-text-stroke:0.3px #222;">6</div>
<div class="t" style="top:700.06px;font-size:8.6px;line-height:10px;height:10px;left:298.80px;color:#222;-webkit-text-stroke:0.3px #222;">1</div>
<div class="t" style="top:706.66px;font-size:8.6px;line-height:10px;height:10px;left:298.80px;color:#222;-webkit-text-stroke:0.3px #222;">8</div>
<div class="a" style="left:90px;top:300px;width:207.5px;height:430px;background:linear-gradient(90deg,#a9b3bd 0px,#d5e2ef 1px,#c6d7e9 6px);"></div>
<div class="a" style="left:97px;top:300px;width:15px;height:430px;background:#fff;border-right:1px solid #1e1e1e"></div>
<svg class="a" style="left:112px;top:300px" width="179" height="430"><rect width="179" height="430" filter="url(#fr)"/></svg>
<div class="a" style="left:290px;top:300px;width:1.2px;height:430px;background:#3b2a24"></div>
<svg class="a" style="left:0;top:0" width="320" height="721"><path d="M108.5,302.50 H112" stroke="#333" stroke-width="1"/><path d="M108.5,313.50 H112" stroke="#333" stroke-width="1"/><path d="M108.5,324.50 H112" stroke="#333" stroke-width="1"/><path d="M97,335.50 H112" stroke="#444" stroke-width="1"/><path d="M108.5,347.50 H112" stroke="#333" stroke-width="1"/><path d="M108.5,358.50 H112" stroke="#333" stroke-width="1"/><path d="M108.5,369.50 H112" stroke="#333" stroke-width="1"/><path d="M108.5,381.50 H112" stroke="#333" stroke-width="1"/><path d="M106,392.50 H112" stroke="#333" stroke-width="1"/><path d="M108.5,403.50 H112" stroke="#333" stroke-width="1"/><path d="M108.5,414.50 H112" stroke="#333" stroke-width="1"/><path d="M108.5,426.50 H112" stroke="#333" stroke-width="1"/><path d="M108.5,437.50 H112" stroke="#333" stroke-width="1"/><path d="M97,448.50 H112" stroke="#444" stroke-width="1"/><path d="M108.5,459.50 H112" stroke="#333" stroke-width="1"/><path d="M108.5,471.50 H112" stroke="#333" stroke-width="1"/><path d="M108.5,482.50 H112" stroke="#333" stroke-width="1"/><path d="M108.5,493.50 H112" stroke="#333" stroke-width="1"/><path d="M106,505.50 H112" stroke="#333" stroke-width="1"/><path d="M108.5,516.50 H112" stroke="#333" stroke-width="1"/><path d="M108.5,527.50 H112" stroke="#333" stroke-width="1"/><path d="M108.5,538.50 H112" stroke="#333" stroke-width="1"/><path d="M108.5,550.50 H112" stroke="#333" stroke-width="1"/><path d="M97,561.50 H112" stroke="#444" stroke-width="1"/><path d="M108.5,572.50 H112" stroke="#333" stroke-width="1"/><path d="M108.5,584.50 H112" stroke="#333" stroke-width="1"/><path d="M108.5,595.50 H112" stroke="#333" stroke-width="1"/><path d="M108.5,606.50 H112" stroke="#333" stroke-width="1"/><path d="M106,617.50 H112" stroke="#333" stroke-width="1"/><path d="M108.5,629.50 H112" stroke="#333" stroke-width="1"/><path d="M108.5,640.50 H112" stroke="#333" stroke-width="1"/><path d="M108.5,651.50 H112" stroke="#333" stroke-width="1"/><path d="M108.5,663.50 H112" stroke="#333" stroke-width="1"/><path d="M97,674.50 H112" stroke="#444" stroke-width="1"/><path d="M108.5,685.50 H112" stroke="#333" stroke-width="1"/><path d="M108.5,696.50 H112" stroke="#333" stroke-width="1"/><path d="M108.5,708.50 H112" stroke="#333" stroke-width="1"/><path d="M108.5,719.50 H112" stroke="#333" stroke-width="1"/></svg>
<div class="t" style="top:336.43px;font-size:9px;line-height:10px;height:10px;left:98.50px;color:#333;-webkit-text-stroke:0.3px #333;">2</div>
<div class="t" style="top:449.23px;font-size:9px;line-height:10px;height:10px;left:98.50px;color:#333;-webkit-text-stroke:0.3px #333;">3</div>
<div class="t" style="top:562.03px;font-size:9px;line-height:10px;height:10px;left:98.50px;color:#333;-webkit-text-stroke:0.3px #333;">4</div>
<div class="t" style="top:674.83px;font-size:9px;line-height:10px;height:10px;left:98.50px;color:#333;-webkit-text-stroke:0.3px #333;">5</div>
<div class="a" style="left:87.5px;top:20px;width:244px;height:320.5px;background:#f0f0f0;border:1px solid #979797;box-shadow:1px 1px 1px rgba(0,0,0,0.12)"></div>
<div class="a" style="left:91px;top:44px;width:237px;height:2px;border-top:1px solid #c6c6c6;border-bottom:1px solid #fff"></div>
<div class="a" style="left:91px;top:70px;width:237px;height:2px;border-top:1px solid #c6c6c6;border-bottom:1px solid #fff"></div>
<div class="a" style="left:91px;top:133.5px;width:237px;height:2px;border-top:1px solid #c6c6c6;border-bottom:1px solid #fff"></div>
<div class="a" style="left:91px;top:268.5px;width:237px;height:2px;border-top:1px solid #c6c6c6;border-bottom:1px solid #fff"></div>
<div class="a" style="left:91px;top:314px;width:237px;height:2px;border-top:1px solid #c6c6c6;border-bottom:1px solid #fff"></div>
<div class="a" style="left:90px;top:49.8px;width:239px;height:17px;background:#3399ff"></div>
<div class="t" style="top:24.20px;font-size:11.5px;line-height:18px;height:18px;left:106.50px;letter-spacing:0.090px;">Metodo</div>
<div class="a" style="left:318.5px;top:26.60px;width:0;height:0;border-left:4px solid #000;border-top:4px solid transparent;border-bottom:4px solid transparent"></div>
<div class="t" style="top:50.70px;font-size:11.5px;line-height:18px;height:18px;left:106.50px;color:#e8f3ff;letter-spacing:-0.174px;">Regolazioni</div>
<div class="a" style="left:318.5px;top:53.10px;width:0;height:0;border-left:4px solid #e8f3ff;border-top:4px solid transparent;border-bottom:4px solid transparent"></div>
<div class="t" style="top:76.80px;font-size:11.5px;line-height:18px;height:18px;left:106.50px;letter-spacing:-0.214px;">Duplica...</div>
<div class="t" style="top:94.60px;font-size:11.5px;line-height:18px;height:18px;left:106.50px;letter-spacing:0.018px;">Applica immagine...</div>
<div class="t" style="top:112.70px;font-size:11.5px;line-height:18px;height:18px;left:106.50px;letter-spacing:-0.201px;">Calcoli...</div>
<div class="t" style="top:139.90px;font-size:11.5px;line-height:18px;height:18px;left:106.50px;letter-spacing:-0.007px;">Dimensione immagine...</div>
<div class="t" style="top:139.90px;font-size:11.5px;line-height:18px;height:18px;right:478.50px;letter-spacing:0.350px;">Alt+Ctrl+I</div>
<div class="t" style="top:158.10px;font-size:11.5px;line-height:18px;height:18px;left:106.50px;letter-spacing:-0.086px;">Dimensione quadro...</div>
<div class="t" style="top:158.10px;font-size:11.5px;line-height:18px;height:18px;right:478.50px;letter-spacing:0.295px;">Alt+Ctrl+C</div>
<div class="t" style="top:176.30px;font-size:11.5px;line-height:18px;height:18px;left:106.50px;letter-spacing:-0.101px;">Proporzioni pixel</div>
<div class="a" style="left:318.5px;top:178.70px;width:0;height:0;border-left:4px solid #000;border-top:4px solid transparent;border-bottom:4px solid transparent"></div>
<div class="t" style="top:194.50px;font-size:11.5px;line-height:18px;height:18px;left:106.50px;letter-spacing:-0.125px;">Ruota quadro</div>
<div class="a" style="left:318.5px;top:196.90px;width:0;height:0;border-left:4px solid #000;border-top:4px solid transparent;border-bottom:4px solid transparent"></div>
<div class="t" style="top:212.70px;font-size:11.5px;line-height:18px;height:18px;left:106.50px;color:#8f8f8f;letter-spacing:-0.270px;">Ritaglia</div>
<div class="t" style="top:230.90px;font-size:11.5px;line-height:18px;height:18px;left:106.50px;letter-spacing:-0.240px;">Rifila...</div>
<div class="t" style="top:249.00px;font-size:11.5px;line-height:18px;height:18px;left:106.50px;color:#8f8f8f;letter-spacing:0.090px;">Mostra tutto</div>
<div class="t" style="top:276.10px;font-size:11.5px;line-height:18px;height:18px;left:106.50px;color:#8f8f8f;letter-spacing:-0.018px;">Variabili</div>
<div class="a" style="left:318.5px;top:278.50px;width:0;height:0;border-left:4px solid #a0a0a0;border-top:4px solid transparent;border-bottom:4px solid transparent"></div>
<div class="t" style="top:293.10px;font-size:11.5px;line-height:18px;height:18px;left:106.50px;color:#8f8f8f;letter-spacing:-0.079px;">Applica set di dati...</div>
<div class="t" style="top:319.70px;font-size:11.5px;line-height:18px;height:18px;left:106.50px;color:#8f8f8f;letter-spacing:-0.175px;">Abbondanza...</div>
<div class="a" style="left:327px;top:47px;width:278.8px;height:448.3px;background:#f0f0f0;border:1px solid #979797;box-shadow:1px 1px 1px rgba(0,0,0,0.12)"></div>
<div class="a" style="left:331px;top:179px;width:271px;height:2px;border-top:1px solid #c6c6c6;border-bottom:1px solid #fff"></div>
<div class="a" style="left:331px;top:387px;width:271px;height:2px;border-top:1px solid #c6c6c6;border-bottom:1px solid #fff"></div>
<div class="a" style="left:331px;top:468px;width:271px;height:2px;border-top:1px solid #c6c6c6;border-bottom:1px solid #fff"></div>
<div class="a" style="left:329px;top:239.4px;width:275px;height:18px;background:#3399ff"></div>
<div class="t" style="top:49.70px;font-size:11.5px;line-height:18px;height:18px;left:346.00px;letter-spacing:-0.116px;">Livelli...</div>
<div class="t" style="top:49.70px;font-size:11.5px;line-height:18px;height:18px;right:205.00px;letter-spacing:-0.033px;">Ctrl+L</div>
<div class="t" style="top:67.70px;font-size:11.5px;line-height:18px;height:18px;left:346.00px;letter-spacing:0.068px;">Livelli automatici</div>
<div class="t" style="top:67.70px;font-size:11.5px;line-height:18px;height:18px;right:205.00px;letter-spacing:0.066px;">Maiusc+Ctrl+L</div>
<div class="t" style="top:85.80px;font-size:11.5px;line-height:18px;height:18px;left:346.00px;letter-spacing:0.044px;">Contrasto automatico</div>
<div class="t" style="top:85.80px;font-size:11.5px;line-height:18px;height:18px;right:205.00px;letter-spacing:0.160px;">Alt+Maiusc+Ctrl+L</div>
<div class="t" style="top:103.90px;font-size:11.5px;line-height:18px;height:18px;left:346.00px;letter-spacing:0.040px;">Colore automatico</div>
<div class="t" style="top:103.90px;font-size:11.5px;line-height:18px;height:18px;right:205.00px;letter-spacing:0.029px;">Maiusc+Ctrl+B</div>
<div class="t" style="top:122.00px;font-size:11.5px;line-height:18px;height:18px;left:346.00px;letter-spacing:-0.333px;">Curve...</div>
<div class="t" style="top:122.00px;font-size:11.5px;line-height:18px;height:18px;right:205.00px;letter-spacing:0.319px;">Ctrl+M</div>
<div class="t" style="top:140.10px;font-size:11.5px;line-height:18px;height:18px;left:346.00px;letter-spacing:-0.054px;">Bilanciamento colore...</div>
<div class="t" style="top:140.10px;font-size:11.5px;line-height:18px;height:18px;right:205.00px;letter-spacing:0.003px;">Ctrl+B</div>
<div class="t" style="top:158.80px;font-size:11.5px;line-height:18px;height:18px;left:346.00px;letter-spacing:0.056px;">Luminosità/contrasto...</div>
<div class="t" style="top:184.60px;font-size:11.5px;line-height:18px;height:18px;left:346.00px;letter-spacing:-0.073px;">Black &amp; White...</div>
<div class="t" style="top:203.30px;font-size:11.5px;line-height:18px;height:18px;left:346.00px;letter-spacing:-0.025px;">Tonalità/saturazione...</div>
<div class="t" style="top:203.30px;font-size:11.5px;line-height:18px;height:18px;right:205.00px;letter-spacing:-0.034px;">Ctrl+U</div>
<div class="t" style="top:221.40px;font-size:11.5px;line-height:18px;height:18px;left:346.00px;letter-spacing:-0.018px;">Togli saturazione</div>
<div class="t" style="top:221.40px;font-size:11.5px;line-height:18px;height:18px;right:205.00px;letter-spacing:0.072px;">Maiusc+Ctrl+U</div>
<div class="t" style="top:239.70px;font-size:11.5px;line-height:18px;height:18px;left:346.00px;color:#e8f3ff;letter-spacing:-0.154px;">Corrispondenza colore...</div>
<div class="t" style="top:257.70px;font-size:11.5px;line-height:18px;height:18px;left:346.00px;letter-spacing:-0.127px;">Sostituisci colore...</div>
<div class="t" style="top:275.80px;font-size:11.5px;line-height:18px;height:18px;left:346.00px;letter-spacing:-0.174px;">Correzione colore selettiva...</div>
<div class="t" style="top:293.90px;font-size:11.5px;line-height:18px;height:18px;left:346.00px;letter-spacing:-0.170px;">Miscelatore canale...</div>
<div class="t" style="top:312.00px;font-size:11.5px;line-height:18px;height:18px;left:346.00px;letter-spacing:-0.077px;">Mappa sfumatura...</div>
<div class="t" style="top:330.10px;font-size:11.5px;line-height:18px;height:18px;left:346.00px;letter-spacing:0.055px;">Filtro fotografico...</div>
<div class="t" style="top:347.90px;font-size:11.5px;line-height:18px;height:18px;left:346.00px;letter-spacing:0.021px;">Luci/Ombre...</div>
<div class="t" style="top:366.00px;font-size:11.5px;line-height:18px;height:18px;left:346.00px;letter-spacing:-0.400px;">Esposizione...</div>
<div class="t" style="top:393.30px;font-size:11.5px;line-height:18px;height:18px;left:346.00px;letter-spacing:-0.090px;">Inverti</div>
<div class="t" style="top:393.30px;font-size:11.5px;line-height:18px;height:18px;right:205.00px;letter-spacing:0.117px;">Ctrl+I</div>
<div class="t" style="top:411.40px;font-size:11.5px;line-height:18px;height:18px;left:346.00px;letter-spacing:-0.400px;">Equalizza</div>
<div class="t" style="top:429.70px;font-size:11.5px;line-height:18px;height:18px;left:346.00px;letter-spacing:-0.362px;">Soglia...</div>
<div class="t" style="top:447.70px;font-size:11.5px;line-height:18px;height:18px;left:346.00px;letter-spacing:-0.400px;">Posterizza...</div>
<div class="t" style="top:474.00px;font-size:11.5px;line-height:18px;height:18px;left:346.00px;letter-spacing:-0.210px;">Variazioni...</div>
<svg class="a" style="left:416.7px;top:247.3px" width="14" height="20"><path d="M1,1 L1,15.2 L4.3,12 L7,17.6 L9.3,16.7 L6.7,11 L11.3,11 Z" fill="#fafafa" stroke="#1a1a2a" stroke-width="1"/></svg></body></html>
